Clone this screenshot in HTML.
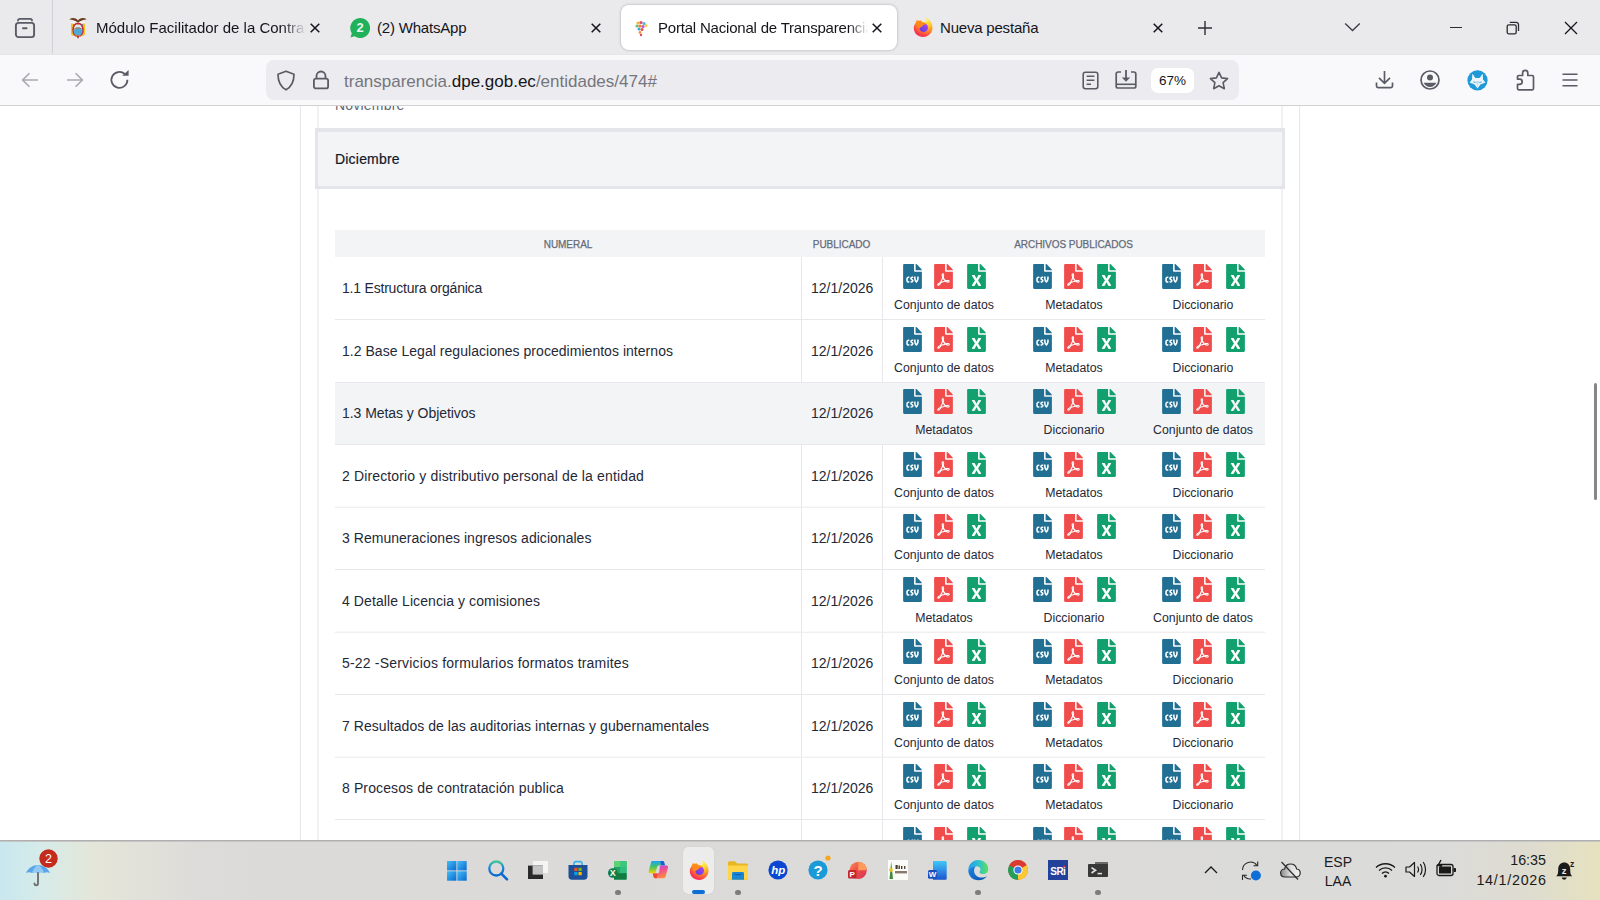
<!DOCTYPE html>
<html><head><meta charset="utf-8">
<style>
*{box-sizing:border-box;margin:0;padding:0}
html,body{width:1600px;height:900px;overflow:hidden;background:#fff;font-family:"Liberation Sans",sans-serif;color:#15141a}
.abs{position:absolute}
#tabbar{position:absolute;left:0;top:0;width:1600px;height:55px;background:#eaeaed}
#toolbar{position:absolute;left:0;top:55px;width:1600px;height:51px;background:#f9f9fb}
#content{position:absolute;left:0;top:106px;width:1600px;height:734px;background:#fff;overflow:hidden}
#taskbar{position:absolute;left:0;top:840px;width:1600px;height:60px;background:#dcdcdc}
.tabtxt{position:absolute;top:19px;font-size:15px;white-space:nowrap;color:#15141a;letter-spacing:-0.2px}
.tx{position:absolute;white-space:nowrap}
svg{position:absolute;overflow:visible}
</style></head><body>
<div id="tabbar"><svg style="left:14px;top:17px" width="22" height="22" viewBox="0 0 22 22"><path d="M4 3.6 C4 2.6 4.8 1.9 5.8 1.9 H16.2 C17.2 1.9 18 2.6 18 3.6" stroke="#5b5b66" stroke-width="1.8" stroke-linecap="round" fill="none"/><rect x="1.9" y="5.9" width="18.2" height="14.2" rx="2.6" stroke="#5b5b66" stroke-width="1.9" fill="none"/><path d="M9 11.3h3.6" stroke="#5b5b66" stroke-width="1.9" stroke-linecap="round"/></svg>
<div class="abs" style="left:52px;top:0;width:1px;height:55px;background:#d2d2d6"></div>
<svg style="left:66px;top:14px" width="24" height="26" viewBox="0 0 24 26">
<path d="M3.2 5.2 C6.2 3.6 9.4 3.4 12 6.4 C14.6 3.4 17.8 3.6 20.8 5.2 C18 5.6 15 6.6 12 8.4 C9 6.6 6 5.6 3.2 5.2Z" fill="#6a3d1e"/>
<ellipse cx="8" cy="8.8" rx="3" ry="1.4" fill="#f6f6f6"/><ellipse cx="16" cy="8.8" rx="3" ry="1.4" fill="#f6f6f6"/>
<path d="M5 9.5 H7.4 V20 C7.4 21 8 21.5 9 21.8 L7 22 C5.8 21.5 5 20.5 5 19.5Z" fill="#f2c21e"/>
<path d="M19 9.5 H16.6 V20 C16.6 21 16 21.5 15 21.8 L17 22 C18.2 21.5 19 20.5 19 19.5Z" fill="#f2c21e"/>
<path d="M7.4 10 L8.2 9.8 V20 L7.4 20.5Z" fill="#2a7a3a"/><path d="M16.6 10 L15.8 9.8 V20 L16.6 20.5Z" fill="#3a3a8a"/>
<ellipse cx="12" cy="15.8" rx="5" ry="6.6" fill="#d8ecf4" stroke="#c0283a" stroke-width="1.5"/>
<path d="M7.6 16.5 C9 15 10.5 14.2 12 14.5 C13.5 14.2 15 15 16.4 16.5 V17 C16.4 20 14.5 21.6 12 21.6 C9.5 21.6 7.6 20 7.6 17Z" fill="#4fa9d6"/>
<path d="M7.6 15.3 C9 14 10.5 13.3 12 13.6 C13.5 13.3 15 14 16.4 15.3 V16 C15 14.8 13.5 14.4 12 14.6 C10.5 14.4 9 14.8 7.6 16Z" fill="#7a4a2a"/>
<ellipse cx="12" cy="10.4" rx="1" ry=".6" fill="#f08a1a"/>
<path d="M10.5 21.5 L12 25 L13.5 21.5Z" fill="#c0283a"/><path d="M9.2 21.2 L10.6 23 L11.4 21.8Z M14.8 21.2 L13.4 23 L12.6 21.8Z" fill="#f2c21e"/>
</svg>
<div class="tabtxt" style="left:96px;width:210px;letter-spacing:0;overflow:hidden;-webkit-mask-image:linear-gradient(90deg,#000 89%,transparent)">Módulo Facilitador de la Contratación</div>
<svg style="left:310px;top:23px" width="10" height="10" viewBox="0 0 10 10"><path d="M.7 .7l8.6 8.6M9.3 .7L.7 9.3" stroke="#15141a" stroke-width="1.5"/></svg>
<svg style="left:349px;top:17px" width="22" height="22" viewBox="0 0 22 22"><path d="M11 1 A10 10 0 1 1 5.5 19.3 L1.5 20.5 L2.8 16.3 A10 10 0 0 1 11 1Z" fill="#21b15a"/><text x="11" y="15.4" text-anchor="middle" font-family="Liberation Sans" font-weight="bold" font-size="13" fill="#e6f7ec">2</text></svg>
<div class="tabtxt" style="left:377px">(2) WhatsApp</div>
<svg style="left:591px;top:23px" width="10" height="10" viewBox="0 0 10 10"><path d="M.7 .7l8.6 8.6M9.3 .7L.7 9.3" stroke="#15141a" stroke-width="1.5"/></svg>
<div class="abs" style="left:621px;top:5px;width:276px;height:45px;background:#fff;border-radius:8px;box-shadow:0 0 3px rgba(0,0,0,.28)"></div>
<svg style="left:633px;top:19px" width="18" height="18" viewBox="0 0 18 18">
<circle cx="5" cy="4" r="1.6" fill="#f2b640"/><circle cx="8" cy="3.5" r="1.6" fill="#e54b6a"/><circle cx="11" cy="4.5" r="1.6" fill="#4fb5e8"/>
<circle cx="4" cy="7" r="1.6" fill="#6cc06a"/><circle cx="7" cy="7" r="1.6" fill="#f07a3a"/><circle cx="10" cy="7.5" r="1.6" fill="#b55bd0"/><circle cx="13" cy="6.5" r="1.5" fill="#f6c84a"/>
<circle cx="6" cy="10" r="1.5" fill="#3aa7d8"/><circle cx="9" cy="10.5" r="1.5" fill="#e84a4a"/><circle cx="7" cy="13.5" r="1.4" fill="#f29a3a"/><circle cx="8" cy="16" r="1.2" fill="#e54b6a"/>
</svg>
<div class="tabtxt" style="left:658px;width:210px;overflow:hidden;-webkit-mask-image:linear-gradient(90deg,#000 91%,transparent)">Portal Nacional de Transparencia</div>
<svg style="left:872px;top:23px" width="10" height="10" viewBox="0 0 10 10"><path d="M.7 .7l8.6 8.6M9.3 .7L.7 9.3" stroke="#15141a" stroke-width="1.5"/></svg>
<svg style="left:912.5px;top:16.8px" width="20" height="20" viewBox="0 0 20 20"><defs><radialGradient id="ffbt" cx="0.72" cy="0.12" r="1.05"><stop offset="0" stop-color="#fff44f"/><stop offset=".3" stop-color="#ffc72e"/><stop offset=".55" stop-color="#ff8a2a"/><stop offset=".78" stop-color="#ff3f45"/><stop offset="1" stop-color="#e0157a"/></radialGradient><linearGradient id="ffpt" x1="0" y1="1" x2="1" y2="0"><stop offset="0" stop-color="#5a3dd8"/><stop offset="1" stop-color="#b245f2"/></linearGradient></defs>
<path d="M3.2 5.5 C1.6 7.2 .8 9.2 .8 11 C.8 16.2 5 20 10.2 20 C15.4 20 19.5 15.8 19.5 10.6 C19.5 6.5 17.2 3.2 13.2 .6 C13.8 2.5 13.6 4 12.8 5.2 C11.5 4.6 10 4.5 8.6 4.8 C7.5 3.8 6.2 3.4 5 3.6 C4.6 4.2 4.5 5 4.6 5.6Z" fill="url(#ffbt)"/>
<circle cx="10.6" cy="10.6" r="4.4" fill="url(#ffpt)"/>
<path d="M2.6 6 L3.8 3 L5.6 4.6 L7.6 3.2 L9.2 5.2 C10.9 5.3 12.5 6.3 13 7.6 C11.8 7.2 10.6 7.5 10 8.6 C9.2 10 7.6 10.2 6.2 11.2 C5.2 9.4 3.6 8.2 2.6 6Z" fill="#ff8a1c"/></svg>
<div class="tabtxt" style="left:940px">Nueva pestaña</div>
<svg style="left:1153px;top:23px" width="10" height="10" viewBox="0 0 10 10"><path d="M.7 .7l8.6 8.6M9.3 .7L.7 9.3" stroke="#15141a" stroke-width="1.5"/></svg>
<svg style="left:1197px;top:20px" width="16" height="16" viewBox="0 0 16 16"><path d="M8 1v14M1 8h14" stroke="#2e2e36" stroke-width="1.4"/></svg>
<svg style="left:1344px;top:22px" width="17" height="10" viewBox="0 0 17 10"><path d="M1.2 1.5l7.3 7 7.3-7" stroke="#3a3a42" stroke-width="1.3" fill="none"/></svg>
<div class="abs" style="left:1450px;top:26.5px;width:12px;height:1.6px;background:#2a2a30"></div>
<svg style="left:1506px;top:21px" width="14" height="14" viewBox="0 0 14 14"><rect x="1.2" y="3.8" width="9" height="9" rx="1.6" stroke="#2a2a30" stroke-width="1.3" fill="none"/><path d="M3.8 1.3h6.4a2.3 2.3 0 0 1 2.3 2.3V10" stroke="#2a2a30" stroke-width="1.3" fill="none"/></svg>
<svg style="left:1564px;top:21px" width="14" height="14" viewBox="0 0 14 14"><path d="M1 1l12 12M13 1L1 13" stroke="#15141a" stroke-width="1.3"/></svg></div>
<div id="toolbar"><svg style="left:21px;top:17.200000000000003px" width="18" height="16" viewBox="0 0 18 16"><path d="M17 8H2M8.5 1.2L1.6 8l6.9 6.8" stroke="#a9a9b1" stroke-width="1.6" fill="none"/></svg>
<svg style="left:66px;top:17.200000000000003px" width="18" height="16" viewBox="0 0 18 16"><path d="M1 8h15M9.5 1.2L16.4 8l-6.9 6.8" stroke="#a9a9b1" stroke-width="1.6" fill="none"/></svg>
<svg style="left:110px;top:15.299999999999997px" width="20" height="19" viewBox="0 0 20 19"><path d="M17.4 9.8A8 8 0 1 1 14.8 4" stroke="#5b5b66" stroke-width="1.8" fill="none"/><path d="M12.2 5.8L18.6 5.8 18.6 0Z" fill="#5b5b66"/></svg>
<div class="abs" style="left:266px;top:5px;width:973px;height:40px;background:#ececf0;border-radius:8px"></div>
<svg style="left:276px;top:14.5px" width="20" height="21" viewBox="0 0 20 21"><path d="M10 1.2 L18 4.2 C18 12 15 17 10 19.8 C5 17 2 12 2 4.2Z" stroke="#5b5b66" stroke-width="1.7" fill="none" stroke-linejoin="round"/></svg>
<svg style="left:312px;top:15px" width="18" height="20" viewBox="0 0 18 20"><path d="M4.5 8.5V6a4.5 4.5 0 0 1 9 0v2.5" stroke="#5b5b66" stroke-width="1.8" fill="none"/><rect x="1.9" y="8.6" width="14.2" height="9.8" rx="2" stroke="#5b5b66" stroke-width="1.8" fill="none"/></svg>
<div class="tx" style="left:344px;top:17px;font-size:17px;line-height:20px;color:#75757c">transparencia.<span style="color:#15141a">dpe.gob.ec</span>/entidades/474#</div>
<svg style="left:1082px;top:15.5px" width="17" height="19" viewBox="0 0 17 19"><rect x="1.2" y="1.2" width="14.6" height="16.6" rx="2.2" stroke="#5b5b66" stroke-width="1.6" fill="none"/><path d="M4.6 5.3h7.8M4.6 9.3h7.8M4.6 13.3h4.4" stroke="#5b5b66" stroke-width="1.6"/></svg>
<svg style="left:1115px;top:15px" width="22" height="19" viewBox="0 0 22 19"><path d="M6 2H3.2C2 2 1.2 2.8 1.2 4v12.5C1.2 17.3 2 18 3 18h16c1 0 1.8-.7 1.8-1.5V4c0-1.2-.8-2-2-2H16" stroke="#5b5b66" stroke-width="1.7" fill="none"/><path d="M11 0v10" stroke="#5b5b66" stroke-width="1.8"/><path d="M6.8 7.5L11 11.8 15.2 7.5Z" fill="#5b5b66"/><path d="M1.5 14.3h19" stroke="#5b5b66" stroke-width="1.6"/></svg>
<div class="abs" style="left:1151px;top:13px;width:43px;height:25px;background:#fff;border-radius:7px"></div>
<div class="tx" style="left:1151px;width:43px;text-align:center;top:18px;font-size:13.5px;line-height:16px;color:#15141a">67%</div>
<svg style="left:1209px;top:15.5px" width="20" height="19" viewBox="0 0 20 19"><path d="M10 1.3l2.6 5.6 6 .7-4.5 4.1 1.2 6-5.3-3-5.3 3 1.2-6L1.4 7.6l6-.7Z" stroke="#5b5b66" stroke-width="1.6" fill="none" stroke-linejoin="round"/></svg>
<svg style="left:1375px;top:15px" width="19" height="19" viewBox="0 0 19 19"><path d="M9.5 1v12M4 7.8l5.5 5.5 5.5-5.5" stroke="#5b5b66" stroke-width="1.7" fill="none"/><path d="M1.5 12.5v3.6c0 .9.7 1.6 1.6 1.6h12.8c.9 0 1.6-.7 1.6-1.6v-3.6" stroke="#5b5b66" stroke-width="1.7" fill="none"/></svg>
<svg style="left:1420px;top:15px" width="20" height="20" viewBox="0 0 20 20"><circle cx="10" cy="10" r="9" stroke="#5b5b66" stroke-width="1.7" fill="none"/><circle cx="10" cy="7.6" r="3" fill="#5b5b66"/><path d="M3.6 12.8h12.8c-1.3 2.6-3.6 4.2-6.4 4.2s-5.1-1.6-6.4-4.2Z" fill="#5b5b66"/></svg>
<svg style="left:1467px;top:14.5px" width="21" height="21" viewBox="0 0 21 21"><circle cx="10.5" cy="10.3" r="10.1" fill="#1f9ad8"/><path d="M5.3 3.8 L8.5 7.5 L12.5 7.5 L15.7 3.8 L16 9.5 L18.4 12.4 L13.4 14.5 L10.5 18.6 L7.6 14.5 L2.6 12.4 L5 9.5Z" fill="#eef6fb"/><circle cx="10.5" cy="4.4" r="3.6" fill="#1f9ad8"/><path d="M7.6 12 L9.6 13 L10.5 17 L11.4 13 L13.4 12 L10.5 11Z" fill="#b9dcf2"/><path d="M6.2 11.8 L8.6 12.6 M14.8 11.8 L12.4 12.6" stroke="#1f9ad8" stroke-width=".8"/></svg>
<svg style="left:1516px;top:14px" width="19" height="22" viewBox="0 0 19 22"><path d="M2.8 6.5 H6.6 V4 A2.6 2.6 0 0 1 11.8 4 V6.5 H16.2 A1.3 1.3 0 0 1 17.5 7.8 V19.5 A1.3 1.3 0 0 1 16.2 20.8 H2.8 A1.3 1.3 0 0 1 1.5 19.5 V15.3 H3.6 A2.6 2.6 0 0 0 3.6 10.1 H1.5 V7.8 A1.3 1.3 0 0 1 2.8 6.5Z" stroke="#5b5b66" stroke-width="1.7" fill="none" stroke-linejoin="round"/></svg>
<svg style="left:1562px;top:17.5px" width="16" height="14" viewBox="0 0 16 14"><path d="M.5 1.2h15M.5 7h15M.5 12.8h15" stroke="#5b5b66" stroke-width="1.6"/></svg></div>
<div id="content"><div class="abs" style="left:300px;top:0;width:1px;height:734px;background:#e5e7eb"></div>
<div class="abs" style="left:1299px;top:0;width:1px;height:734px;background:#e5e7eb"></div>
<div class="abs" style="left:317px;top:0;width:2px;height:734px;background:#f1f2f4"></div>
<div class="abs" style="left:1281px;top:0;width:2px;height:734px;background:#f1f2f4"></div>
<div class="tx" style="left:335px;top:-9px;font-size:14px;color:#5f6673;line-height:16px;letter-spacing:0.2px">Noviembre</div>
<div class="abs" style="left:315px;top:22px;width:970px;height:61px;background:#f3f4f6;border:3px solid #e4e5ea;border-top-width:4px"></div>
<div class="tx" style="left:335px;top:45px;font-size:14px;line-height:16px;color:#111827;-webkit-text-stroke:0.2px #111827;letter-spacing:0.2px">Diciembre</div>
<div class="abs" style="left:335px;top:124px;width:930px;height:27px;background:#f3f4f6"></div>
<div class="tx" style="left:468px;width:200px;text-align:center;top:133px;font-size:10px;line-height:12px;color:#646b78;-webkit-text-stroke:0.25px #646b78;letter-spacing:-0.05px">NUMERAL</div>
<div class="tx" style="left:741.5px;width:200px;text-align:center;top:133px;font-size:10px;line-height:12px;color:#646b78;-webkit-text-stroke:0.25px #646b78;letter-spacing:-0.05px">PUBLICADO</div>
<div class="tx" style="left:973.5px;width:200px;text-align:center;top:133px;font-size:10px;line-height:12px;color:#646b78;-webkit-text-stroke:0.25px #646b78;letter-spacing:-0.05px">ARCHIVOS PUBLICADOS</div>
<div class="abs" style="left:335px;top:213px;width:930px;height:1px;background:#e8e8ec"></div>
<div class="abs" style="left:801px;top:151px;width:1px;height:62px;background:#e8e8ec"></div>
<div class="abs" style="left:882px;top:151px;width:1px;height:62px;background:#e8e8ec"></div>
<div class="tx" style="left:342px;top:174.0px;font-size:14px;line-height:16px;color:#1f2937;letter-spacing:-0.207px">1.1 Estructura orgánica</div>
<div class="tx" style="left:811px;top:174.0px;font-size:14px;line-height:16px;color:#1f2937">12/1/2026</div>
<svg style="left:903px;top:158.0px" width="19" height="25" viewBox="0 0 384 512"><path d="M224 136V0H24C10.7 0 0 10.7 0 24v464c0 13.3 10.7 24 24 24h336c13.3 0 24-10.7 24-24V160H248c-13.2 0-24-10.8-24-24zm-96 144c0 4.42-3.58 8-8 8h-8c-8.84 0-16 7.16-16 16v32c0 8.84 7.16 16 16 16h8c4.42 0 8 3.58 8 8v16c0 4.42-3.58 8-8 8h-8c-26.51 0-48-21.49-48-48v-32c0-26.51 21.49-48 48-48h8c4.42 0 8 3.58 8 8v16zm44.27 104H160c-4.42 0-8-3.58-8-8v-16c0-4.42 3.58-8 8-8h12.27c5.95 0 10.41-3.5 10.41-6.62 0-1.3-.75-2.66-2.12-3.84l-21.89-18.77c-8.47-7.22-13.33-17.48-13.33-28.14 0-21.3 19.02-38.62 42.41-38.62H200c4.42 0 8 3.58 8 8v16c0 4.42-3.58 8-8 8h-12.27c-5.95 0-10.41 3.5-10.41 6.62 0 1.3.75 2.66 2.12 3.84l21.89 18.77c8.47 7.22 13.33 17.48 13.33 28.14.01 21.29-19 38.62-42.39 38.62zM256 264v20.8c0 20.27 5.7 40.17 16 56.88 10.3-16.7 16-36.61 16-56.88V264c0-4.42 3.58-8 8-8h16c4.42 0 8 3.58 8 8v20.8c0 35.48-12.88 68.89-36.28 94.09-3.02 3.25-7.27 5.11-11.72 5.11s-8.7-1.86-11.72-5.11C236.88 353.69 224 320.28 224 284.8V264c0-4.42 3.58-8 8-8h16c4.42 0 8 3.58 8 8zm121-159L279.1 7c-4.5-4.5-10.6-7-17-7H256v128h128v-6.1c0-6.3-2.5-12.4-7-16.9z" fill="#226f94"/></svg>
<svg style="left:934.3px;top:158.0px" width="19" height="25" viewBox="0 0 384 512"><path d="M181.9 256.1c-5-16-4.9-46.9-2-46.9 8.4 0 7.6 36.9 2 46.9zm-1.7 47.2c-7.7 20.2-17.3 43.3-28.4 62.7 18.3-7 39-17.2 62.9-21.9-12.7-9.6-24.9-23.4-34.5-40.8zM86.1 428.1c0 .8 13.2-5.4 34.9-40.2-6.7 6.3-29.1 24.5-34.9 40.2zM248 160h136v328c0 13.3-10.7 24-24 24H24c-13.3 0-24-10.7-24-24V24C0 10.7 10.7 0 24 0h200v136c0 13.2 10.8 24 24 24zm-8 171.8c-20-12.2-33.3-29-42.7-53.8 4.5-18.5 11.6-46.6 6.2-64.2-4.7-29.4-42.4-26.5-47.8-6.8-5 18.3-.4 44.1 8.1 77-11.6 27.6-28.7 64.6-40.8 85.8-.1 0-.1.1-.2.1-27.1 13.9-73.6 44.5-54.5 68 5.6 6.9 16 10 21.5 10 17.9 0 35.7-18 61.1-61.8 25.8-8.5 54.1-19.1 79-23.2 21.7 11.8 47.1 19.5 64 19.5 29.2 0 31.2-32 19.7-43.4-13.9-13.6-54.3-9.7-73.6-7.2zM377 105L279 7c-4.5-4.5-10.6-7-17-7h-6v128h128v-6.1c0-6.3-2.5-12.4-7-16.9zm-74.1 255.3c4.1-2.7-2.5-11.9-42.8-9 37.1 15.8 42.8 9 42.8 9z" fill="#f04c4c"/></svg>
<svg style="left:966.6px;top:158.0px" width="19" height="25" viewBox="0 0 384 512"><path d="M224 136V0H24C10.7 0 0 10.7 0 24v464c0 13.3 10.7 24 24 24h336c13.3 0 24-10.7 24-24V160H248c-13.2 0-24-10.8-24-24zm60.1 106.5L224 336l60.1 93.5c5.1 8-.6 18.5-10.1 18.5h-34.9c-4.4 0-8.5-2.4-10.6-6.3C208.9 405.5 192 373 192 373c-6.4 14.8-10 20-36.6 68.8-2.1 3.9-6.1 6.3-10.5 6.3H110c-9.5 0-15.2-10.5-10.1-18.5l60.3-93.5-60.3-93.5c-5.2-8 .6-18.5 10.1-18.5h34.8c4.4 0 8.5 2.4 10.6 6.3 26.1 48.8 20 33.6 36.6 68.5 0 0 6.1-11.7 36.6-68.5 2.1-3.9 6.2-6.3 10.6-6.3H274c9.5-.1 15.2 10.4 10.1 18.4zM384 121.9v6.1H256V0h6.1c6.4 0 12.5 2.5 17 7l97.9 98c4.5 4.5 7 10.6 7 16.9z" fill="#12a06e"/></svg>
<div class="tx" style="left:884px;width:120px;text-align:center;top:192.0px;font-size:12.3px;line-height:14px;color:#1f2937">Conjunto de datos</div>
<svg style="left:1033px;top:158.0px" width="19" height="25" viewBox="0 0 384 512"><path d="M224 136V0H24C10.7 0 0 10.7 0 24v464c0 13.3 10.7 24 24 24h336c13.3 0 24-10.7 24-24V160H248c-13.2 0-24-10.8-24-24zm-96 144c0 4.42-3.58 8-8 8h-8c-8.84 0-16 7.16-16 16v32c0 8.84 7.16 16 16 16h8c4.42 0 8 3.58 8 8v16c0 4.42-3.58 8-8 8h-8c-26.51 0-48-21.49-48-48v-32c0-26.51 21.49-48 48-48h8c4.42 0 8 3.58 8 8v16zm44.27 104H160c-4.42 0-8-3.58-8-8v-16c0-4.42 3.58-8 8-8h12.27c5.95 0 10.41-3.5 10.41-6.62 0-1.3-.75-2.66-2.12-3.84l-21.89-18.77c-8.47-7.22-13.33-17.48-13.33-28.14 0-21.3 19.02-38.62 42.41-38.62H200c4.42 0 8 3.58 8 8v16c0 4.42-3.58 8-8 8h-12.27c-5.95 0-10.41 3.5-10.41 6.62 0 1.3.75 2.66 2.12 3.84l21.89 18.77c8.47 7.22 13.33 17.48 13.33 28.14.01 21.29-19 38.62-42.39 38.62zM256 264v20.8c0 20.27 5.7 40.17 16 56.88 10.3-16.7 16-36.61 16-56.88V264c0-4.42 3.58-8 8-8h16c4.42 0 8 3.58 8 8v20.8c0 35.48-12.88 68.89-36.28 94.09-3.02 3.25-7.27 5.11-11.72 5.11s-8.7-1.86-11.72-5.11C236.88 353.69 224 320.28 224 284.8V264c0-4.42 3.58-8 8-8h16c4.42 0 8 3.58 8 8zm121-159L279.1 7c-4.5-4.5-10.6-7-17-7H256v128h128v-6.1c0-6.3-2.5-12.4-7-16.9z" fill="#226f94"/></svg>
<svg style="left:1064.3px;top:158.0px" width="19" height="25" viewBox="0 0 384 512"><path d="M181.9 256.1c-5-16-4.9-46.9-2-46.9 8.4 0 7.6 36.9 2 46.9zm-1.7 47.2c-7.7 20.2-17.3 43.3-28.4 62.7 18.3-7 39-17.2 62.9-21.9-12.7-9.6-24.9-23.4-34.5-40.8zM86.1 428.1c0 .8 13.2-5.4 34.9-40.2-6.7 6.3-29.1 24.5-34.9 40.2zM248 160h136v328c0 13.3-10.7 24-24 24H24c-13.3 0-24-10.7-24-24V24C0 10.7 10.7 0 24 0h200v136c0 13.2 10.8 24 24 24zm-8 171.8c-20-12.2-33.3-29-42.7-53.8 4.5-18.5 11.6-46.6 6.2-64.2-4.7-29.4-42.4-26.5-47.8-6.8-5 18.3-.4 44.1 8.1 77-11.6 27.6-28.7 64.6-40.8 85.8-.1 0-.1.1-.2.1-27.1 13.9-73.6 44.5-54.5 68 5.6 6.9 16 10 21.5 10 17.9 0 35.7-18 61.1-61.8 25.8-8.5 54.1-19.1 79-23.2 21.7 11.8 47.1 19.5 64 19.5 29.2 0 31.2-32 19.7-43.4-13.9-13.6-54.3-9.7-73.6-7.2zM377 105L279 7c-4.5-4.5-10.6-7-17-7h-6v128h128v-6.1c0-6.3-2.5-12.4-7-16.9zm-74.1 255.3c4.1-2.7-2.5-11.9-42.8-9 37.1 15.8 42.8 9 42.8 9z" fill="#f04c4c"/></svg>
<svg style="left:1096.6px;top:158.0px" width="19" height="25" viewBox="0 0 384 512"><path d="M224 136V0H24C10.7 0 0 10.7 0 24v464c0 13.3 10.7 24 24 24h336c13.3 0 24-10.7 24-24V160H248c-13.2 0-24-10.8-24-24zm60.1 106.5L224 336l60.1 93.5c5.1 8-.6 18.5-10.1 18.5h-34.9c-4.4 0-8.5-2.4-10.6-6.3C208.9 405.5 192 373 192 373c-6.4 14.8-10 20-36.6 68.8-2.1 3.9-6.1 6.3-10.5 6.3H110c-9.5 0-15.2-10.5-10.1-18.5l60.3-93.5-60.3-93.5c-5.2-8 .6-18.5 10.1-18.5h34.8c4.4 0 8.5 2.4 10.6 6.3 26.1 48.8 20 33.6 36.6 68.5 0 0 6.1-11.7 36.6-68.5 2.1-3.9 6.2-6.3 10.6-6.3H274c9.5-.1 15.2 10.4 10.1 18.4zM384 121.9v6.1H256V0h6.1c6.4 0 12.5 2.5 17 7l97.9 98c4.5 4.5 7 10.6 7 16.9z" fill="#12a06e"/></svg>
<div class="tx" style="left:1014px;width:120px;text-align:center;top:192.0px;font-size:12.3px;line-height:14px;color:#1f2937">Metadatos</div>
<svg style="left:1162px;top:158.0px" width="19" height="25" viewBox="0 0 384 512"><path d="M224 136V0H24C10.7 0 0 10.7 0 24v464c0 13.3 10.7 24 24 24h336c13.3 0 24-10.7 24-24V160H248c-13.2 0-24-10.8-24-24zm-96 144c0 4.42-3.58 8-8 8h-8c-8.84 0-16 7.16-16 16v32c0 8.84 7.16 16 16 16h8c4.42 0 8 3.58 8 8v16c0 4.42-3.58 8-8 8h-8c-26.51 0-48-21.49-48-48v-32c0-26.51 21.49-48 48-48h8c4.42 0 8 3.58 8 8v16zm44.27 104H160c-4.42 0-8-3.58-8-8v-16c0-4.42 3.58-8 8-8h12.27c5.95 0 10.41-3.5 10.41-6.62 0-1.3-.75-2.66-2.12-3.84l-21.89-18.77c-8.47-7.22-13.33-17.48-13.33-28.14 0-21.3 19.02-38.62 42.41-38.62H200c4.42 0 8 3.58 8 8v16c0 4.42-3.58 8-8 8h-12.27c-5.95 0-10.41 3.5-10.41 6.62 0 1.3.75 2.66 2.12 3.84l21.89 18.77c8.47 7.22 13.33 17.48 13.33 28.14.01 21.29-19 38.62-42.39 38.62zM256 264v20.8c0 20.27 5.7 40.17 16 56.88 10.3-16.7 16-36.61 16-56.88V264c0-4.42 3.58-8 8-8h16c4.42 0 8 3.58 8 8v20.8c0 35.48-12.88 68.89-36.28 94.09-3.02 3.25-7.27 5.11-11.72 5.11s-8.7-1.86-11.72-5.11C236.88 353.69 224 320.28 224 284.8V264c0-4.42 3.58-8 8-8h16c4.42 0 8 3.58 8 8zm121-159L279.1 7c-4.5-4.5-10.6-7-17-7H256v128h128v-6.1c0-6.3-2.5-12.4-7-16.9z" fill="#226f94"/></svg>
<svg style="left:1193.3px;top:158.0px" width="19" height="25" viewBox="0 0 384 512"><path d="M181.9 256.1c-5-16-4.9-46.9-2-46.9 8.4 0 7.6 36.9 2 46.9zm-1.7 47.2c-7.7 20.2-17.3 43.3-28.4 62.7 18.3-7 39-17.2 62.9-21.9-12.7-9.6-24.9-23.4-34.5-40.8zM86.1 428.1c0 .8 13.2-5.4 34.9-40.2-6.7 6.3-29.1 24.5-34.9 40.2zM248 160h136v328c0 13.3-10.7 24-24 24H24c-13.3 0-24-10.7-24-24V24C0 10.7 10.7 0 24 0h200v136c0 13.2 10.8 24 24 24zm-8 171.8c-20-12.2-33.3-29-42.7-53.8 4.5-18.5 11.6-46.6 6.2-64.2-4.7-29.4-42.4-26.5-47.8-6.8-5 18.3-.4 44.1 8.1 77-11.6 27.6-28.7 64.6-40.8 85.8-.1 0-.1.1-.2.1-27.1 13.9-73.6 44.5-54.5 68 5.6 6.9 16 10 21.5 10 17.9 0 35.7-18 61.1-61.8 25.8-8.5 54.1-19.1 79-23.2 21.7 11.8 47.1 19.5 64 19.5 29.2 0 31.2-32 19.7-43.4-13.9-13.6-54.3-9.7-73.6-7.2zM377 105L279 7c-4.5-4.5-10.6-7-17-7h-6v128h128v-6.1c0-6.3-2.5-12.4-7-16.9zm-74.1 255.3c4.1-2.7-2.5-11.9-42.8-9 37.1 15.8 42.8 9 42.8 9z" fill="#f04c4c"/></svg>
<svg style="left:1225.6px;top:158.0px" width="19" height="25" viewBox="0 0 384 512"><path d="M224 136V0H24C10.7 0 0 10.7 0 24v464c0 13.3 10.7 24 24 24h336c13.3 0 24-10.7 24-24V160H248c-13.2 0-24-10.8-24-24zm60.1 106.5L224 336l60.1 93.5c5.1 8-.6 18.5-10.1 18.5h-34.9c-4.4 0-8.5-2.4-10.6-6.3C208.9 405.5 192 373 192 373c-6.4 14.8-10 20-36.6 68.8-2.1 3.9-6.1 6.3-10.5 6.3H110c-9.5 0-15.2-10.5-10.1-18.5l60.3-93.5-60.3-93.5c-5.2-8 .6-18.5 10.1-18.5h34.8c4.4 0 8.5 2.4 10.6 6.3 26.1 48.8 20 33.6 36.6 68.5 0 0 6.1-11.7 36.6-68.5 2.1-3.9 6.2-6.3 10.6-6.3H274c9.5-.1 15.2 10.4 10.1 18.4zM384 121.9v6.1H256V0h6.1c6.4 0 12.5 2.5 17 7l97.9 98c4.5 4.5 7 10.6 7 16.9z" fill="#12a06e"/></svg>
<div class="tx" style="left:1143px;width:120px;text-align:center;top:192.0px;font-size:12.3px;line-height:14px;color:#1f2937">Diccionario</div>
<div class="abs" style="left:335px;top:276px;width:930px;height:1px;background:#e8e8ec"></div>
<div class="abs" style="left:801px;top:214px;width:1px;height:62px;background:#e8e8ec"></div>
<div class="abs" style="left:882px;top:214px;width:1px;height:62px;background:#e8e8ec"></div>
<div class="tx" style="left:342px;top:236.5px;font-size:14px;line-height:16px;color:#1f2937;letter-spacing:0.035px">1.2 Base Legal regulaciones procedimientos internos</div>
<div class="tx" style="left:811px;top:236.5px;font-size:14px;line-height:16px;color:#1f2937">12/1/2026</div>
<svg style="left:903px;top:220.5px" width="19" height="25" viewBox="0 0 384 512"><path d="M224 136V0H24C10.7 0 0 10.7 0 24v464c0 13.3 10.7 24 24 24h336c13.3 0 24-10.7 24-24V160H248c-13.2 0-24-10.8-24-24zm-96 144c0 4.42-3.58 8-8 8h-8c-8.84 0-16 7.16-16 16v32c0 8.84 7.16 16 16 16h8c4.42 0 8 3.58 8 8v16c0 4.42-3.58 8-8 8h-8c-26.51 0-48-21.49-48-48v-32c0-26.51 21.49-48 48-48h8c4.42 0 8 3.58 8 8v16zm44.27 104H160c-4.42 0-8-3.58-8-8v-16c0-4.42 3.58-8 8-8h12.27c5.95 0 10.41-3.5 10.41-6.62 0-1.3-.75-2.66-2.12-3.84l-21.89-18.77c-8.47-7.22-13.33-17.48-13.33-28.14 0-21.3 19.02-38.62 42.41-38.62H200c4.42 0 8 3.58 8 8v16c0 4.42-3.58 8-8 8h-12.27c-5.95 0-10.41 3.5-10.41 6.62 0 1.3.75 2.66 2.12 3.84l21.89 18.77c8.47 7.22 13.33 17.48 13.33 28.14.01 21.29-19 38.62-42.39 38.62zM256 264v20.8c0 20.27 5.7 40.17 16 56.88 10.3-16.7 16-36.61 16-56.88V264c0-4.42 3.58-8 8-8h16c4.42 0 8 3.58 8 8v20.8c0 35.48-12.88 68.89-36.28 94.09-3.02 3.25-7.27 5.11-11.72 5.11s-8.7-1.86-11.72-5.11C236.88 353.69 224 320.28 224 284.8V264c0-4.42 3.58-8 8-8h16c4.42 0 8 3.58 8 8zm121-159L279.1 7c-4.5-4.5-10.6-7-17-7H256v128h128v-6.1c0-6.3-2.5-12.4-7-16.9z" fill="#226f94"/></svg>
<svg style="left:934.3px;top:220.5px" width="19" height="25" viewBox="0 0 384 512"><path d="M181.9 256.1c-5-16-4.9-46.9-2-46.9 8.4 0 7.6 36.9 2 46.9zm-1.7 47.2c-7.7 20.2-17.3 43.3-28.4 62.7 18.3-7 39-17.2 62.9-21.9-12.7-9.6-24.9-23.4-34.5-40.8zM86.1 428.1c0 .8 13.2-5.4 34.9-40.2-6.7 6.3-29.1 24.5-34.9 40.2zM248 160h136v328c0 13.3-10.7 24-24 24H24c-13.3 0-24-10.7-24-24V24C0 10.7 10.7 0 24 0h200v136c0 13.2 10.8 24 24 24zm-8 171.8c-20-12.2-33.3-29-42.7-53.8 4.5-18.5 11.6-46.6 6.2-64.2-4.7-29.4-42.4-26.5-47.8-6.8-5 18.3-.4 44.1 8.1 77-11.6 27.6-28.7 64.6-40.8 85.8-.1 0-.1.1-.2.1-27.1 13.9-73.6 44.5-54.5 68 5.6 6.9 16 10 21.5 10 17.9 0 35.7-18 61.1-61.8 25.8-8.5 54.1-19.1 79-23.2 21.7 11.8 47.1 19.5 64 19.5 29.2 0 31.2-32 19.7-43.4-13.9-13.6-54.3-9.7-73.6-7.2zM377 105L279 7c-4.5-4.5-10.6-7-17-7h-6v128h128v-6.1c0-6.3-2.5-12.4-7-16.9zm-74.1 255.3c4.1-2.7-2.5-11.9-42.8-9 37.1 15.8 42.8 9 42.8 9z" fill="#f04c4c"/></svg>
<svg style="left:966.6px;top:220.5px" width="19" height="25" viewBox="0 0 384 512"><path d="M224 136V0H24C10.7 0 0 10.7 0 24v464c0 13.3 10.7 24 24 24h336c13.3 0 24-10.7 24-24V160H248c-13.2 0-24-10.8-24-24zm60.1 106.5L224 336l60.1 93.5c5.1 8-.6 18.5-10.1 18.5h-34.9c-4.4 0-8.5-2.4-10.6-6.3C208.9 405.5 192 373 192 373c-6.4 14.8-10 20-36.6 68.8-2.1 3.9-6.1 6.3-10.5 6.3H110c-9.5 0-15.2-10.5-10.1-18.5l60.3-93.5-60.3-93.5c-5.2-8 .6-18.5 10.1-18.5h34.8c4.4 0 8.5 2.4 10.6 6.3 26.1 48.8 20 33.6 36.6 68.5 0 0 6.1-11.7 36.6-68.5 2.1-3.9 6.2-6.3 10.6-6.3H274c9.5-.1 15.2 10.4 10.1 18.4zM384 121.9v6.1H256V0h6.1c6.4 0 12.5 2.5 17 7l97.9 98c4.5 4.5 7 10.6 7 16.9z" fill="#12a06e"/></svg>
<div class="tx" style="left:884px;width:120px;text-align:center;top:254.5px;font-size:12.3px;line-height:14px;color:#1f2937">Conjunto de datos</div>
<svg style="left:1033px;top:220.5px" width="19" height="25" viewBox="0 0 384 512"><path d="M224 136V0H24C10.7 0 0 10.7 0 24v464c0 13.3 10.7 24 24 24h336c13.3 0 24-10.7 24-24V160H248c-13.2 0-24-10.8-24-24zm-96 144c0 4.42-3.58 8-8 8h-8c-8.84 0-16 7.16-16 16v32c0 8.84 7.16 16 16 16h8c4.42 0 8 3.58 8 8v16c0 4.42-3.58 8-8 8h-8c-26.51 0-48-21.49-48-48v-32c0-26.51 21.49-48 48-48h8c4.42 0 8 3.58 8 8v16zm44.27 104H160c-4.42 0-8-3.58-8-8v-16c0-4.42 3.58-8 8-8h12.27c5.95 0 10.41-3.5 10.41-6.62 0-1.3-.75-2.66-2.12-3.84l-21.89-18.77c-8.47-7.22-13.33-17.48-13.33-28.14 0-21.3 19.02-38.62 42.41-38.62H200c4.42 0 8 3.58 8 8v16c0 4.42-3.58 8-8 8h-12.27c-5.95 0-10.41 3.5-10.41 6.62 0 1.3.75 2.66 2.12 3.84l21.89 18.77c8.47 7.22 13.33 17.48 13.33 28.14.01 21.29-19 38.62-42.39 38.62zM256 264v20.8c0 20.27 5.7 40.17 16 56.88 10.3-16.7 16-36.61 16-56.88V264c0-4.42 3.58-8 8-8h16c4.42 0 8 3.58 8 8v20.8c0 35.48-12.88 68.89-36.28 94.09-3.02 3.25-7.27 5.11-11.72 5.11s-8.7-1.86-11.72-5.11C236.88 353.69 224 320.28 224 284.8V264c0-4.42 3.58-8 8-8h16c4.42 0 8 3.58 8 8zm121-159L279.1 7c-4.5-4.5-10.6-7-17-7H256v128h128v-6.1c0-6.3-2.5-12.4-7-16.9z" fill="#226f94"/></svg>
<svg style="left:1064.3px;top:220.5px" width="19" height="25" viewBox="0 0 384 512"><path d="M181.9 256.1c-5-16-4.9-46.9-2-46.9 8.4 0 7.6 36.9 2 46.9zm-1.7 47.2c-7.7 20.2-17.3 43.3-28.4 62.7 18.3-7 39-17.2 62.9-21.9-12.7-9.6-24.9-23.4-34.5-40.8zM86.1 428.1c0 .8 13.2-5.4 34.9-40.2-6.7 6.3-29.1 24.5-34.9 40.2zM248 160h136v328c0 13.3-10.7 24-24 24H24c-13.3 0-24-10.7-24-24V24C0 10.7 10.7 0 24 0h200v136c0 13.2 10.8 24 24 24zm-8 171.8c-20-12.2-33.3-29-42.7-53.8 4.5-18.5 11.6-46.6 6.2-64.2-4.7-29.4-42.4-26.5-47.8-6.8-5 18.3-.4 44.1 8.1 77-11.6 27.6-28.7 64.6-40.8 85.8-.1 0-.1.1-.2.1-27.1 13.9-73.6 44.5-54.5 68 5.6 6.9 16 10 21.5 10 17.9 0 35.7-18 61.1-61.8 25.8-8.5 54.1-19.1 79-23.2 21.7 11.8 47.1 19.5 64 19.5 29.2 0 31.2-32 19.7-43.4-13.9-13.6-54.3-9.7-73.6-7.2zM377 105L279 7c-4.5-4.5-10.6-7-17-7h-6v128h128v-6.1c0-6.3-2.5-12.4-7-16.9zm-74.1 255.3c4.1-2.7-2.5-11.9-42.8-9 37.1 15.8 42.8 9 42.8 9z" fill="#f04c4c"/></svg>
<svg style="left:1096.6px;top:220.5px" width="19" height="25" viewBox="0 0 384 512"><path d="M224 136V0H24C10.7 0 0 10.7 0 24v464c0 13.3 10.7 24 24 24h336c13.3 0 24-10.7 24-24V160H248c-13.2 0-24-10.8-24-24zm60.1 106.5L224 336l60.1 93.5c5.1 8-.6 18.5-10.1 18.5h-34.9c-4.4 0-8.5-2.4-10.6-6.3C208.9 405.5 192 373 192 373c-6.4 14.8-10 20-36.6 68.8-2.1 3.9-6.1 6.3-10.5 6.3H110c-9.5 0-15.2-10.5-10.1-18.5l60.3-93.5-60.3-93.5c-5.2-8 .6-18.5 10.1-18.5h34.8c4.4 0 8.5 2.4 10.6 6.3 26.1 48.8 20 33.6 36.6 68.5 0 0 6.1-11.7 36.6-68.5 2.1-3.9 6.2-6.3 10.6-6.3H274c9.5-.1 15.2 10.4 10.1 18.4zM384 121.9v6.1H256V0h6.1c6.4 0 12.5 2.5 17 7l97.9 98c4.5 4.5 7 10.6 7 16.9z" fill="#12a06e"/></svg>
<div class="tx" style="left:1014px;width:120px;text-align:center;top:254.5px;font-size:12.3px;line-height:14px;color:#1f2937">Metadatos</div>
<svg style="left:1162px;top:220.5px" width="19" height="25" viewBox="0 0 384 512"><path d="M224 136V0H24C10.7 0 0 10.7 0 24v464c0 13.3 10.7 24 24 24h336c13.3 0 24-10.7 24-24V160H248c-13.2 0-24-10.8-24-24zm-96 144c0 4.42-3.58 8-8 8h-8c-8.84 0-16 7.16-16 16v32c0 8.84 7.16 16 16 16h8c4.42 0 8 3.58 8 8v16c0 4.42-3.58 8-8 8h-8c-26.51 0-48-21.49-48-48v-32c0-26.51 21.49-48 48-48h8c4.42 0 8 3.58 8 8v16zm44.27 104H160c-4.42 0-8-3.58-8-8v-16c0-4.42 3.58-8 8-8h12.27c5.95 0 10.41-3.5 10.41-6.62 0-1.3-.75-2.66-2.12-3.84l-21.89-18.77c-8.47-7.22-13.33-17.48-13.33-28.14 0-21.3 19.02-38.62 42.41-38.62H200c4.42 0 8 3.58 8 8v16c0 4.42-3.58 8-8 8h-12.27c-5.95 0-10.41 3.5-10.41 6.62 0 1.3.75 2.66 2.12 3.84l21.89 18.77c8.47 7.22 13.33 17.48 13.33 28.14.01 21.29-19 38.62-42.39 38.62zM256 264v20.8c0 20.27 5.7 40.17 16 56.88 10.3-16.7 16-36.61 16-56.88V264c0-4.42 3.58-8 8-8h16c4.42 0 8 3.58 8 8v20.8c0 35.48-12.88 68.89-36.28 94.09-3.02 3.25-7.27 5.11-11.72 5.11s-8.7-1.86-11.72-5.11C236.88 353.69 224 320.28 224 284.8V264c0-4.42 3.58-8 8-8h16c4.42 0 8 3.58 8 8zm121-159L279.1 7c-4.5-4.5-10.6-7-17-7H256v128h128v-6.1c0-6.3-2.5-12.4-7-16.9z" fill="#226f94"/></svg>
<svg style="left:1193.3px;top:220.5px" width="19" height="25" viewBox="0 0 384 512"><path d="M181.9 256.1c-5-16-4.9-46.9-2-46.9 8.4 0 7.6 36.9 2 46.9zm-1.7 47.2c-7.7 20.2-17.3 43.3-28.4 62.7 18.3-7 39-17.2 62.9-21.9-12.7-9.6-24.9-23.4-34.5-40.8zM86.1 428.1c0 .8 13.2-5.4 34.9-40.2-6.7 6.3-29.1 24.5-34.9 40.2zM248 160h136v328c0 13.3-10.7 24-24 24H24c-13.3 0-24-10.7-24-24V24C0 10.7 10.7 0 24 0h200v136c0 13.2 10.8 24 24 24zm-8 171.8c-20-12.2-33.3-29-42.7-53.8 4.5-18.5 11.6-46.6 6.2-64.2-4.7-29.4-42.4-26.5-47.8-6.8-5 18.3-.4 44.1 8.1 77-11.6 27.6-28.7 64.6-40.8 85.8-.1 0-.1.1-.2.1-27.1 13.9-73.6 44.5-54.5 68 5.6 6.9 16 10 21.5 10 17.9 0 35.7-18 61.1-61.8 25.8-8.5 54.1-19.1 79-23.2 21.7 11.8 47.1 19.5 64 19.5 29.2 0 31.2-32 19.7-43.4-13.9-13.6-54.3-9.7-73.6-7.2zM377 105L279 7c-4.5-4.5-10.6-7-17-7h-6v128h128v-6.1c0-6.3-2.5-12.4-7-16.9zm-74.1 255.3c4.1-2.7-2.5-11.9-42.8-9 37.1 15.8 42.8 9 42.8 9z" fill="#f04c4c"/></svg>
<svg style="left:1225.6px;top:220.5px" width="19" height="25" viewBox="0 0 384 512"><path d="M224 136V0H24C10.7 0 0 10.7 0 24v464c0 13.3 10.7 24 24 24h336c13.3 0 24-10.7 24-24V160H248c-13.2 0-24-10.8-24-24zm60.1 106.5L224 336l60.1 93.5c5.1 8-.6 18.5-10.1 18.5h-34.9c-4.4 0-8.5-2.4-10.6-6.3C208.9 405.5 192 373 192 373c-6.4 14.8-10 20-36.6 68.8-2.1 3.9-6.1 6.3-10.5 6.3H110c-9.5 0-15.2-10.5-10.1-18.5l60.3-93.5-60.3-93.5c-5.2-8 .6-18.5 10.1-18.5h34.8c4.4 0 8.5 2.4 10.6 6.3 26.1 48.8 20 33.6 36.6 68.5 0 0 6.1-11.7 36.6-68.5 2.1-3.9 6.2-6.3 10.6-6.3H274c9.5-.1 15.2 10.4 10.1 18.4zM384 121.9v6.1H256V0h6.1c6.4 0 12.5 2.5 17 7l97.9 98c4.5 4.5 7 10.6 7 16.9z" fill="#12a06e"/></svg>
<div class="tx" style="left:1143px;width:120px;text-align:center;top:254.5px;font-size:12.3px;line-height:14px;color:#1f2937">Diccionario</div>
<div class="abs" style="left:335px;top:277px;width:930px;height:61px;background:#f3f4f6"></div>
<div class="abs" style="left:335px;top:338px;width:930px;height:1px;background:#e8e8ec"></div>
<div class="tx" style="left:342px;top:299.0px;font-size:14px;line-height:16px;color:#1f2937;letter-spacing:-0.054px">1.3 Metas y Objetivos</div>
<div class="tx" style="left:811px;top:299.0px;font-size:14px;line-height:16px;color:#1f2937">12/1/2026</div>
<svg style="left:903px;top:283.0px" width="19" height="25" viewBox="0 0 384 512"><path d="M224 136V0H24C10.7 0 0 10.7 0 24v464c0 13.3 10.7 24 24 24h336c13.3 0 24-10.7 24-24V160H248c-13.2 0-24-10.8-24-24zm-96 144c0 4.42-3.58 8-8 8h-8c-8.84 0-16 7.16-16 16v32c0 8.84 7.16 16 16 16h8c4.42 0 8 3.58 8 8v16c0 4.42-3.58 8-8 8h-8c-26.51 0-48-21.49-48-48v-32c0-26.51 21.49-48 48-48h8c4.42 0 8 3.58 8 8v16zm44.27 104H160c-4.42 0-8-3.58-8-8v-16c0-4.42 3.58-8 8-8h12.27c5.95 0 10.41-3.5 10.41-6.62 0-1.3-.75-2.66-2.12-3.84l-21.89-18.77c-8.47-7.22-13.33-17.48-13.33-28.14 0-21.3 19.02-38.62 42.41-38.62H200c4.42 0 8 3.58 8 8v16c0 4.42-3.58 8-8 8h-12.27c-5.95 0-10.41 3.5-10.41 6.62 0 1.3.75 2.66 2.12 3.84l21.89 18.77c8.47 7.22 13.33 17.48 13.33 28.14.01 21.29-19 38.62-42.39 38.62zM256 264v20.8c0 20.27 5.7 40.17 16 56.88 10.3-16.7 16-36.61 16-56.88V264c0-4.42 3.58-8 8-8h16c4.42 0 8 3.58 8 8v20.8c0 35.48-12.88 68.89-36.28 94.09-3.02 3.25-7.27 5.11-11.72 5.11s-8.7-1.86-11.72-5.11C236.88 353.69 224 320.28 224 284.8V264c0-4.42 3.58-8 8-8h16c4.42 0 8 3.58 8 8zm121-159L279.1 7c-4.5-4.5-10.6-7-17-7H256v128h128v-6.1c0-6.3-2.5-12.4-7-16.9z" fill="#226f94"/></svg>
<svg style="left:934.3px;top:283.0px" width="19" height="25" viewBox="0 0 384 512"><path d="M181.9 256.1c-5-16-4.9-46.9-2-46.9 8.4 0 7.6 36.9 2 46.9zm-1.7 47.2c-7.7 20.2-17.3 43.3-28.4 62.7 18.3-7 39-17.2 62.9-21.9-12.7-9.6-24.9-23.4-34.5-40.8zM86.1 428.1c0 .8 13.2-5.4 34.9-40.2-6.7 6.3-29.1 24.5-34.9 40.2zM248 160h136v328c0 13.3-10.7 24-24 24H24c-13.3 0-24-10.7-24-24V24C0 10.7 10.7 0 24 0h200v136c0 13.2 10.8 24 24 24zm-8 171.8c-20-12.2-33.3-29-42.7-53.8 4.5-18.5 11.6-46.6 6.2-64.2-4.7-29.4-42.4-26.5-47.8-6.8-5 18.3-.4 44.1 8.1 77-11.6 27.6-28.7 64.6-40.8 85.8-.1 0-.1.1-.2.1-27.1 13.9-73.6 44.5-54.5 68 5.6 6.9 16 10 21.5 10 17.9 0 35.7-18 61.1-61.8 25.8-8.5 54.1-19.1 79-23.2 21.7 11.8 47.1 19.5 64 19.5 29.2 0 31.2-32 19.7-43.4-13.9-13.6-54.3-9.7-73.6-7.2zM377 105L279 7c-4.5-4.5-10.6-7-17-7h-6v128h128v-6.1c0-6.3-2.5-12.4-7-16.9zm-74.1 255.3c4.1-2.7-2.5-11.9-42.8-9 37.1 15.8 42.8 9 42.8 9z" fill="#f04c4c"/></svg>
<svg style="left:966.6px;top:283.0px" width="19" height="25" viewBox="0 0 384 512"><path d="M224 136V0H24C10.7 0 0 10.7 0 24v464c0 13.3 10.7 24 24 24h336c13.3 0 24-10.7 24-24V160H248c-13.2 0-24-10.8-24-24zm60.1 106.5L224 336l60.1 93.5c5.1 8-.6 18.5-10.1 18.5h-34.9c-4.4 0-8.5-2.4-10.6-6.3C208.9 405.5 192 373 192 373c-6.4 14.8-10 20-36.6 68.8-2.1 3.9-6.1 6.3-10.5 6.3H110c-9.5 0-15.2-10.5-10.1-18.5l60.3-93.5-60.3-93.5c-5.2-8 .6-18.5 10.1-18.5h34.8c4.4 0 8.5 2.4 10.6 6.3 26.1 48.8 20 33.6 36.6 68.5 0 0 6.1-11.7 36.6-68.5 2.1-3.9 6.2-6.3 10.6-6.3H274c9.5-.1 15.2 10.4 10.1 18.4zM384 121.9v6.1H256V0h6.1c6.4 0 12.5 2.5 17 7l97.9 98c4.5 4.5 7 10.6 7 16.9z" fill="#12a06e"/></svg>
<div class="tx" style="left:884px;width:120px;text-align:center;top:317.0px;font-size:12.3px;line-height:14px;color:#1f2937">Metadatos</div>
<svg style="left:1033px;top:283.0px" width="19" height="25" viewBox="0 0 384 512"><path d="M224 136V0H24C10.7 0 0 10.7 0 24v464c0 13.3 10.7 24 24 24h336c13.3 0 24-10.7 24-24V160H248c-13.2 0-24-10.8-24-24zm-96 144c0 4.42-3.58 8-8 8h-8c-8.84 0-16 7.16-16 16v32c0 8.84 7.16 16 16 16h8c4.42 0 8 3.58 8 8v16c0 4.42-3.58 8-8 8h-8c-26.51 0-48-21.49-48-48v-32c0-26.51 21.49-48 48-48h8c4.42 0 8 3.58 8 8v16zm44.27 104H160c-4.42 0-8-3.58-8-8v-16c0-4.42 3.58-8 8-8h12.27c5.95 0 10.41-3.5 10.41-6.62 0-1.3-.75-2.66-2.12-3.84l-21.89-18.77c-8.47-7.22-13.33-17.48-13.33-28.14 0-21.3 19.02-38.62 42.41-38.62H200c4.42 0 8 3.58 8 8v16c0 4.42-3.58 8-8 8h-12.27c-5.95 0-10.41 3.5-10.41 6.62 0 1.3.75 2.66 2.12 3.84l21.89 18.77c8.47 7.22 13.33 17.48 13.33 28.14.01 21.29-19 38.62-42.39 38.62zM256 264v20.8c0 20.27 5.7 40.17 16 56.88 10.3-16.7 16-36.61 16-56.88V264c0-4.42 3.58-8 8-8h16c4.42 0 8 3.58 8 8v20.8c0 35.48-12.88 68.89-36.28 94.09-3.02 3.25-7.27 5.11-11.72 5.11s-8.7-1.86-11.72-5.11C236.88 353.69 224 320.28 224 284.8V264c0-4.42 3.58-8 8-8h16c4.42 0 8 3.58 8 8zm121-159L279.1 7c-4.5-4.5-10.6-7-17-7H256v128h128v-6.1c0-6.3-2.5-12.4-7-16.9z" fill="#226f94"/></svg>
<svg style="left:1064.3px;top:283.0px" width="19" height="25" viewBox="0 0 384 512"><path d="M181.9 256.1c-5-16-4.9-46.9-2-46.9 8.4 0 7.6 36.9 2 46.9zm-1.7 47.2c-7.7 20.2-17.3 43.3-28.4 62.7 18.3-7 39-17.2 62.9-21.9-12.7-9.6-24.9-23.4-34.5-40.8zM86.1 428.1c0 .8 13.2-5.4 34.9-40.2-6.7 6.3-29.1 24.5-34.9 40.2zM248 160h136v328c0 13.3-10.7 24-24 24H24c-13.3 0-24-10.7-24-24V24C0 10.7 10.7 0 24 0h200v136c0 13.2 10.8 24 24 24zm-8 171.8c-20-12.2-33.3-29-42.7-53.8 4.5-18.5 11.6-46.6 6.2-64.2-4.7-29.4-42.4-26.5-47.8-6.8-5 18.3-.4 44.1 8.1 77-11.6 27.6-28.7 64.6-40.8 85.8-.1 0-.1.1-.2.1-27.1 13.9-73.6 44.5-54.5 68 5.6 6.9 16 10 21.5 10 17.9 0 35.7-18 61.1-61.8 25.8-8.5 54.1-19.1 79-23.2 21.7 11.8 47.1 19.5 64 19.5 29.2 0 31.2-32 19.7-43.4-13.9-13.6-54.3-9.7-73.6-7.2zM377 105L279 7c-4.5-4.5-10.6-7-17-7h-6v128h128v-6.1c0-6.3-2.5-12.4-7-16.9zm-74.1 255.3c4.1-2.7-2.5-11.9-42.8-9 37.1 15.8 42.8 9 42.8 9z" fill="#f04c4c"/></svg>
<svg style="left:1096.6px;top:283.0px" width="19" height="25" viewBox="0 0 384 512"><path d="M224 136V0H24C10.7 0 0 10.7 0 24v464c0 13.3 10.7 24 24 24h336c13.3 0 24-10.7 24-24V160H248c-13.2 0-24-10.8-24-24zm60.1 106.5L224 336l60.1 93.5c5.1 8-.6 18.5-10.1 18.5h-34.9c-4.4 0-8.5-2.4-10.6-6.3C208.9 405.5 192 373 192 373c-6.4 14.8-10 20-36.6 68.8-2.1 3.9-6.1 6.3-10.5 6.3H110c-9.5 0-15.2-10.5-10.1-18.5l60.3-93.5-60.3-93.5c-5.2-8 .6-18.5 10.1-18.5h34.8c4.4 0 8.5 2.4 10.6 6.3 26.1 48.8 20 33.6 36.6 68.5 0 0 6.1-11.7 36.6-68.5 2.1-3.9 6.2-6.3 10.6-6.3H274c9.5-.1 15.2 10.4 10.1 18.4zM384 121.9v6.1H256V0h6.1c6.4 0 12.5 2.5 17 7l97.9 98c4.5 4.5 7 10.6 7 16.9z" fill="#12a06e"/></svg>
<div class="tx" style="left:1014px;width:120px;text-align:center;top:317.0px;font-size:12.3px;line-height:14px;color:#1f2937">Diccionario</div>
<svg style="left:1162px;top:283.0px" width="19" height="25" viewBox="0 0 384 512"><path d="M224 136V0H24C10.7 0 0 10.7 0 24v464c0 13.3 10.7 24 24 24h336c13.3 0 24-10.7 24-24V160H248c-13.2 0-24-10.8-24-24zm-96 144c0 4.42-3.58 8-8 8h-8c-8.84 0-16 7.16-16 16v32c0 8.84 7.16 16 16 16h8c4.42 0 8 3.58 8 8v16c0 4.42-3.58 8-8 8h-8c-26.51 0-48-21.49-48-48v-32c0-26.51 21.49-48 48-48h8c4.42 0 8 3.58 8 8v16zm44.27 104H160c-4.42 0-8-3.58-8-8v-16c0-4.42 3.58-8 8-8h12.27c5.95 0 10.41-3.5 10.41-6.62 0-1.3-.75-2.66-2.12-3.84l-21.89-18.77c-8.47-7.22-13.33-17.48-13.33-28.14 0-21.3 19.02-38.62 42.41-38.62H200c4.42 0 8 3.58 8 8v16c0 4.42-3.58 8-8 8h-12.27c-5.95 0-10.41 3.5-10.41 6.62 0 1.3.75 2.66 2.12 3.84l21.89 18.77c8.47 7.22 13.33 17.48 13.33 28.14.01 21.29-19 38.62-42.39 38.62zM256 264v20.8c0 20.27 5.7 40.17 16 56.88 10.3-16.7 16-36.61 16-56.88V264c0-4.42 3.58-8 8-8h16c4.42 0 8 3.58 8 8v20.8c0 35.48-12.88 68.89-36.28 94.09-3.02 3.25-7.27 5.11-11.72 5.11s-8.7-1.86-11.72-5.11C236.88 353.69 224 320.28 224 284.8V264c0-4.42 3.58-8 8-8h16c4.42 0 8 3.58 8 8zm121-159L279.1 7c-4.5-4.5-10.6-7-17-7H256v128h128v-6.1c0-6.3-2.5-12.4-7-16.9z" fill="#226f94"/></svg>
<svg style="left:1193.3px;top:283.0px" width="19" height="25" viewBox="0 0 384 512"><path d="M181.9 256.1c-5-16-4.9-46.9-2-46.9 8.4 0 7.6 36.9 2 46.9zm-1.7 47.2c-7.7 20.2-17.3 43.3-28.4 62.7 18.3-7 39-17.2 62.9-21.9-12.7-9.6-24.9-23.4-34.5-40.8zM86.1 428.1c0 .8 13.2-5.4 34.9-40.2-6.7 6.3-29.1 24.5-34.9 40.2zM248 160h136v328c0 13.3-10.7 24-24 24H24c-13.3 0-24-10.7-24-24V24C0 10.7 10.7 0 24 0h200v136c0 13.2 10.8 24 24 24zm-8 171.8c-20-12.2-33.3-29-42.7-53.8 4.5-18.5 11.6-46.6 6.2-64.2-4.7-29.4-42.4-26.5-47.8-6.8-5 18.3-.4 44.1 8.1 77-11.6 27.6-28.7 64.6-40.8 85.8-.1 0-.1.1-.2.1-27.1 13.9-73.6 44.5-54.5 68 5.6 6.9 16 10 21.5 10 17.9 0 35.7-18 61.1-61.8 25.8-8.5 54.1-19.1 79-23.2 21.7 11.8 47.1 19.5 64 19.5 29.2 0 31.2-32 19.7-43.4-13.9-13.6-54.3-9.7-73.6-7.2zM377 105L279 7c-4.5-4.5-10.6-7-17-7h-6v128h128v-6.1c0-6.3-2.5-12.4-7-16.9zm-74.1 255.3c4.1-2.7-2.5-11.9-42.8-9 37.1 15.8 42.8 9 42.8 9z" fill="#f04c4c"/></svg>
<svg style="left:1225.6px;top:283.0px" width="19" height="25" viewBox="0 0 384 512"><path d="M224 136V0H24C10.7 0 0 10.7 0 24v464c0 13.3 10.7 24 24 24h336c13.3 0 24-10.7 24-24V160H248c-13.2 0-24-10.8-24-24zm60.1 106.5L224 336l60.1 93.5c5.1 8-.6 18.5-10.1 18.5h-34.9c-4.4 0-8.5-2.4-10.6-6.3C208.9 405.5 192 373 192 373c-6.4 14.8-10 20-36.6 68.8-2.1 3.9-6.1 6.3-10.5 6.3H110c-9.5 0-15.2-10.5-10.1-18.5l60.3-93.5-60.3-93.5c-5.2-8 .6-18.5 10.1-18.5h34.8c4.4 0 8.5 2.4 10.6 6.3 26.1 48.8 20 33.6 36.6 68.5 0 0 6.1-11.7 36.6-68.5 2.1-3.9 6.2-6.3 10.6-6.3H274c9.5-.1 15.2 10.4 10.1 18.4zM384 121.9v6.1H256V0h6.1c6.4 0 12.5 2.5 17 7l97.9 98c4.5 4.5 7 10.6 7 16.9z" fill="#12a06e"/></svg>
<div class="tx" style="left:1143px;width:120px;text-align:center;top:317.0px;font-size:12.3px;line-height:14px;color:#1f2937">Conjunto de datos</div>
<div class="abs" style="left:335px;top:400px;width:930px;height:1px;background:#f9f9fa"></div>
<div class="abs" style="left:335px;top:401px;width:930px;height:1px;background:#efeff1"></div>
<div class="abs" style="left:801px;top:339px;width:1px;height:62px;background:#e8e8ec"></div>
<div class="abs" style="left:882px;top:339px;width:1px;height:62px;background:#e8e8ec"></div>
<div class="tx" style="left:342px;top:361.5px;font-size:14px;line-height:16px;color:#1f2937;letter-spacing:0.141px">2 Directorio y distributivo personal de la entidad</div>
<div class="tx" style="left:811px;top:361.5px;font-size:14px;line-height:16px;color:#1f2937">12/1/2026</div>
<svg style="left:903px;top:345.5px" width="19" height="25" viewBox="0 0 384 512"><path d="M224 136V0H24C10.7 0 0 10.7 0 24v464c0 13.3 10.7 24 24 24h336c13.3 0 24-10.7 24-24V160H248c-13.2 0-24-10.8-24-24zm-96 144c0 4.42-3.58 8-8 8h-8c-8.84 0-16 7.16-16 16v32c0 8.84 7.16 16 16 16h8c4.42 0 8 3.58 8 8v16c0 4.42-3.58 8-8 8h-8c-26.51 0-48-21.49-48-48v-32c0-26.51 21.49-48 48-48h8c4.42 0 8 3.58 8 8v16zm44.27 104H160c-4.42 0-8-3.58-8-8v-16c0-4.42 3.58-8 8-8h12.27c5.95 0 10.41-3.5 10.41-6.62 0-1.3-.75-2.66-2.12-3.84l-21.89-18.77c-8.47-7.22-13.33-17.48-13.33-28.14 0-21.3 19.02-38.62 42.41-38.62H200c4.42 0 8 3.58 8 8v16c0 4.42-3.58 8-8 8h-12.27c-5.95 0-10.41 3.5-10.41 6.62 0 1.3.75 2.66 2.12 3.84l21.89 18.77c8.47 7.22 13.33 17.48 13.33 28.14.01 21.29-19 38.62-42.39 38.62zM256 264v20.8c0 20.27 5.7 40.17 16 56.88 10.3-16.7 16-36.61 16-56.88V264c0-4.42 3.58-8 8-8h16c4.42 0 8 3.58 8 8v20.8c0 35.48-12.88 68.89-36.28 94.09-3.02 3.25-7.27 5.11-11.72 5.11s-8.7-1.86-11.72-5.11C236.88 353.69 224 320.28 224 284.8V264c0-4.42 3.58-8 8-8h16c4.42 0 8 3.58 8 8zm121-159L279.1 7c-4.5-4.5-10.6-7-17-7H256v128h128v-6.1c0-6.3-2.5-12.4-7-16.9z" fill="#226f94"/></svg>
<svg style="left:934.3px;top:345.5px" width="19" height="25" viewBox="0 0 384 512"><path d="M181.9 256.1c-5-16-4.9-46.9-2-46.9 8.4 0 7.6 36.9 2 46.9zm-1.7 47.2c-7.7 20.2-17.3 43.3-28.4 62.7 18.3-7 39-17.2 62.9-21.9-12.7-9.6-24.9-23.4-34.5-40.8zM86.1 428.1c0 .8 13.2-5.4 34.9-40.2-6.7 6.3-29.1 24.5-34.9 40.2zM248 160h136v328c0 13.3-10.7 24-24 24H24c-13.3 0-24-10.7-24-24V24C0 10.7 10.7 0 24 0h200v136c0 13.2 10.8 24 24 24zm-8 171.8c-20-12.2-33.3-29-42.7-53.8 4.5-18.5 11.6-46.6 6.2-64.2-4.7-29.4-42.4-26.5-47.8-6.8-5 18.3-.4 44.1 8.1 77-11.6 27.6-28.7 64.6-40.8 85.8-.1 0-.1.1-.2.1-27.1 13.9-73.6 44.5-54.5 68 5.6 6.9 16 10 21.5 10 17.9 0 35.7-18 61.1-61.8 25.8-8.5 54.1-19.1 79-23.2 21.7 11.8 47.1 19.5 64 19.5 29.2 0 31.2-32 19.7-43.4-13.9-13.6-54.3-9.7-73.6-7.2zM377 105L279 7c-4.5-4.5-10.6-7-17-7h-6v128h128v-6.1c0-6.3-2.5-12.4-7-16.9zm-74.1 255.3c4.1-2.7-2.5-11.9-42.8-9 37.1 15.8 42.8 9 42.8 9z" fill="#f04c4c"/></svg>
<svg style="left:966.6px;top:345.5px" width="19" height="25" viewBox="0 0 384 512"><path d="M224 136V0H24C10.7 0 0 10.7 0 24v464c0 13.3 10.7 24 24 24h336c13.3 0 24-10.7 24-24V160H248c-13.2 0-24-10.8-24-24zm60.1 106.5L224 336l60.1 93.5c5.1 8-.6 18.5-10.1 18.5h-34.9c-4.4 0-8.5-2.4-10.6-6.3C208.9 405.5 192 373 192 373c-6.4 14.8-10 20-36.6 68.8-2.1 3.9-6.1 6.3-10.5 6.3H110c-9.5 0-15.2-10.5-10.1-18.5l60.3-93.5-60.3-93.5c-5.2-8 .6-18.5 10.1-18.5h34.8c4.4 0 8.5 2.4 10.6 6.3 26.1 48.8 20 33.6 36.6 68.5 0 0 6.1-11.7 36.6-68.5 2.1-3.9 6.2-6.3 10.6-6.3H274c9.5-.1 15.2 10.4 10.1 18.4zM384 121.9v6.1H256V0h6.1c6.4 0 12.5 2.5 17 7l97.9 98c4.5 4.5 7 10.6 7 16.9z" fill="#12a06e"/></svg>
<div class="tx" style="left:884px;width:120px;text-align:center;top:379.5px;font-size:12.3px;line-height:14px;color:#1f2937">Conjunto de datos</div>
<svg style="left:1033px;top:345.5px" width="19" height="25" viewBox="0 0 384 512"><path d="M224 136V0H24C10.7 0 0 10.7 0 24v464c0 13.3 10.7 24 24 24h336c13.3 0 24-10.7 24-24V160H248c-13.2 0-24-10.8-24-24zm-96 144c0 4.42-3.58 8-8 8h-8c-8.84 0-16 7.16-16 16v32c0 8.84 7.16 16 16 16h8c4.42 0 8 3.58 8 8v16c0 4.42-3.58 8-8 8h-8c-26.51 0-48-21.49-48-48v-32c0-26.51 21.49-48 48-48h8c4.42 0 8 3.58 8 8v16zm44.27 104H160c-4.42 0-8-3.58-8-8v-16c0-4.42 3.58-8 8-8h12.27c5.95 0 10.41-3.5 10.41-6.62 0-1.3-.75-2.66-2.12-3.84l-21.89-18.77c-8.47-7.22-13.33-17.48-13.33-28.14 0-21.3 19.02-38.62 42.41-38.62H200c4.42 0 8 3.58 8 8v16c0 4.42-3.58 8-8 8h-12.27c-5.95 0-10.41 3.5-10.41 6.62 0 1.3.75 2.66 2.12 3.84l21.89 18.77c8.47 7.22 13.33 17.48 13.33 28.14.01 21.29-19 38.62-42.39 38.62zM256 264v20.8c0 20.27 5.7 40.17 16 56.88 10.3-16.7 16-36.61 16-56.88V264c0-4.42 3.58-8 8-8h16c4.42 0 8 3.58 8 8v20.8c0 35.48-12.88 68.89-36.28 94.09-3.02 3.25-7.27 5.11-11.72 5.11s-8.7-1.86-11.72-5.11C236.88 353.69 224 320.28 224 284.8V264c0-4.42 3.58-8 8-8h16c4.42 0 8 3.58 8 8zm121-159L279.1 7c-4.5-4.5-10.6-7-17-7H256v128h128v-6.1c0-6.3-2.5-12.4-7-16.9z" fill="#226f94"/></svg>
<svg style="left:1064.3px;top:345.5px" width="19" height="25" viewBox="0 0 384 512"><path d="M181.9 256.1c-5-16-4.9-46.9-2-46.9 8.4 0 7.6 36.9 2 46.9zm-1.7 47.2c-7.7 20.2-17.3 43.3-28.4 62.7 18.3-7 39-17.2 62.9-21.9-12.7-9.6-24.9-23.4-34.5-40.8zM86.1 428.1c0 .8 13.2-5.4 34.9-40.2-6.7 6.3-29.1 24.5-34.9 40.2zM248 160h136v328c0 13.3-10.7 24-24 24H24c-13.3 0-24-10.7-24-24V24C0 10.7 10.7 0 24 0h200v136c0 13.2 10.8 24 24 24zm-8 171.8c-20-12.2-33.3-29-42.7-53.8 4.5-18.5 11.6-46.6 6.2-64.2-4.7-29.4-42.4-26.5-47.8-6.8-5 18.3-.4 44.1 8.1 77-11.6 27.6-28.7 64.6-40.8 85.8-.1 0-.1.1-.2.1-27.1 13.9-73.6 44.5-54.5 68 5.6 6.9 16 10 21.5 10 17.9 0 35.7-18 61.1-61.8 25.8-8.5 54.1-19.1 79-23.2 21.7 11.8 47.1 19.5 64 19.5 29.2 0 31.2-32 19.7-43.4-13.9-13.6-54.3-9.7-73.6-7.2zM377 105L279 7c-4.5-4.5-10.6-7-17-7h-6v128h128v-6.1c0-6.3-2.5-12.4-7-16.9zm-74.1 255.3c4.1-2.7-2.5-11.9-42.8-9 37.1 15.8 42.8 9 42.8 9z" fill="#f04c4c"/></svg>
<svg style="left:1096.6px;top:345.5px" width="19" height="25" viewBox="0 0 384 512"><path d="M224 136V0H24C10.7 0 0 10.7 0 24v464c0 13.3 10.7 24 24 24h336c13.3 0 24-10.7 24-24V160H248c-13.2 0-24-10.8-24-24zm60.1 106.5L224 336l60.1 93.5c5.1 8-.6 18.5-10.1 18.5h-34.9c-4.4 0-8.5-2.4-10.6-6.3C208.9 405.5 192 373 192 373c-6.4 14.8-10 20-36.6 68.8-2.1 3.9-6.1 6.3-10.5 6.3H110c-9.5 0-15.2-10.5-10.1-18.5l60.3-93.5-60.3-93.5c-5.2-8 .6-18.5 10.1-18.5h34.8c4.4 0 8.5 2.4 10.6 6.3 26.1 48.8 20 33.6 36.6 68.5 0 0 6.1-11.7 36.6-68.5 2.1-3.9 6.2-6.3 10.6-6.3H274c9.5-.1 15.2 10.4 10.1 18.4zM384 121.9v6.1H256V0h6.1c6.4 0 12.5 2.5 17 7l97.9 98c4.5 4.5 7 10.6 7 16.9z" fill="#12a06e"/></svg>
<div class="tx" style="left:1014px;width:120px;text-align:center;top:379.5px;font-size:12.3px;line-height:14px;color:#1f2937">Metadatos</div>
<svg style="left:1162px;top:345.5px" width="19" height="25" viewBox="0 0 384 512"><path d="M224 136V0H24C10.7 0 0 10.7 0 24v464c0 13.3 10.7 24 24 24h336c13.3 0 24-10.7 24-24V160H248c-13.2 0-24-10.8-24-24zm-96 144c0 4.42-3.58 8-8 8h-8c-8.84 0-16 7.16-16 16v32c0 8.84 7.16 16 16 16h8c4.42 0 8 3.58 8 8v16c0 4.42-3.58 8-8 8h-8c-26.51 0-48-21.49-48-48v-32c0-26.51 21.49-48 48-48h8c4.42 0 8 3.58 8 8v16zm44.27 104H160c-4.42 0-8-3.58-8-8v-16c0-4.42 3.58-8 8-8h12.27c5.95 0 10.41-3.5 10.41-6.62 0-1.3-.75-2.66-2.12-3.84l-21.89-18.77c-8.47-7.22-13.33-17.48-13.33-28.14 0-21.3 19.02-38.62 42.41-38.62H200c4.42 0 8 3.58 8 8v16c0 4.42-3.58 8-8 8h-12.27c-5.95 0-10.41 3.5-10.41 6.62 0 1.3.75 2.66 2.12 3.84l21.89 18.77c8.47 7.22 13.33 17.48 13.33 28.14.01 21.29-19 38.62-42.39 38.62zM256 264v20.8c0 20.27 5.7 40.17 16 56.88 10.3-16.7 16-36.61 16-56.88V264c0-4.42 3.58-8 8-8h16c4.42 0 8 3.58 8 8v20.8c0 35.48-12.88 68.89-36.28 94.09-3.02 3.25-7.27 5.11-11.72 5.11s-8.7-1.86-11.72-5.11C236.88 353.69 224 320.28 224 284.8V264c0-4.42 3.58-8 8-8h16c4.42 0 8 3.58 8 8zm121-159L279.1 7c-4.5-4.5-10.6-7-17-7H256v128h128v-6.1c0-6.3-2.5-12.4-7-16.9z" fill="#226f94"/></svg>
<svg style="left:1193.3px;top:345.5px" width="19" height="25" viewBox="0 0 384 512"><path d="M181.9 256.1c-5-16-4.9-46.9-2-46.9 8.4 0 7.6 36.9 2 46.9zm-1.7 47.2c-7.7 20.2-17.3 43.3-28.4 62.7 18.3-7 39-17.2 62.9-21.9-12.7-9.6-24.9-23.4-34.5-40.8zM86.1 428.1c0 .8 13.2-5.4 34.9-40.2-6.7 6.3-29.1 24.5-34.9 40.2zM248 160h136v328c0 13.3-10.7 24-24 24H24c-13.3 0-24-10.7-24-24V24C0 10.7 10.7 0 24 0h200v136c0 13.2 10.8 24 24 24zm-8 171.8c-20-12.2-33.3-29-42.7-53.8 4.5-18.5 11.6-46.6 6.2-64.2-4.7-29.4-42.4-26.5-47.8-6.8-5 18.3-.4 44.1 8.1 77-11.6 27.6-28.7 64.6-40.8 85.8-.1 0-.1.1-.2.1-27.1 13.9-73.6 44.5-54.5 68 5.6 6.9 16 10 21.5 10 17.9 0 35.7-18 61.1-61.8 25.8-8.5 54.1-19.1 79-23.2 21.7 11.8 47.1 19.5 64 19.5 29.2 0 31.2-32 19.7-43.4-13.9-13.6-54.3-9.7-73.6-7.2zM377 105L279 7c-4.5-4.5-10.6-7-17-7h-6v128h128v-6.1c0-6.3-2.5-12.4-7-16.9zm-74.1 255.3c4.1-2.7-2.5-11.9-42.8-9 37.1 15.8 42.8 9 42.8 9z" fill="#f04c4c"/></svg>
<svg style="left:1225.6px;top:345.5px" width="19" height="25" viewBox="0 0 384 512"><path d="M224 136V0H24C10.7 0 0 10.7 0 24v464c0 13.3 10.7 24 24 24h336c13.3 0 24-10.7 24-24V160H248c-13.2 0-24-10.8-24-24zm60.1 106.5L224 336l60.1 93.5c5.1 8-.6 18.5-10.1 18.5h-34.9c-4.4 0-8.5-2.4-10.6-6.3C208.9 405.5 192 373 192 373c-6.4 14.8-10 20-36.6 68.8-2.1 3.9-6.1 6.3-10.5 6.3H110c-9.5 0-15.2-10.5-10.1-18.5l60.3-93.5-60.3-93.5c-5.2-8 .6-18.5 10.1-18.5h34.8c4.4 0 8.5 2.4 10.6 6.3 26.1 48.8 20 33.6 36.6 68.5 0 0 6.1-11.7 36.6-68.5 2.1-3.9 6.2-6.3 10.6-6.3H274c9.5-.1 15.2 10.4 10.1 18.4zM384 121.9v6.1H256V0h6.1c6.4 0 12.5 2.5 17 7l97.9 98c4.5 4.5 7 10.6 7 16.9z" fill="#12a06e"/></svg>
<div class="tx" style="left:1143px;width:120px;text-align:center;top:379.5px;font-size:12.3px;line-height:14px;color:#1f2937">Diccionario</div>
<div class="abs" style="left:335px;top:463px;width:930px;height:1px;background:#e8e8ec"></div>
<div class="abs" style="left:801px;top:402px;width:1px;height:61px;background:#e8e8ec"></div>
<div class="abs" style="left:882px;top:402px;width:1px;height:61px;background:#e8e8ec"></div>
<div class="tx" style="left:342px;top:424.0px;font-size:14px;line-height:16px;color:#1f2937;letter-spacing:0.033px">3 Remuneraciones ingresos adicionales</div>
<div class="tx" style="left:811px;top:424.0px;font-size:14px;line-height:16px;color:#1f2937">12/1/2026</div>
<svg style="left:903px;top:408.0px" width="19" height="25" viewBox="0 0 384 512"><path d="M224 136V0H24C10.7 0 0 10.7 0 24v464c0 13.3 10.7 24 24 24h336c13.3 0 24-10.7 24-24V160H248c-13.2 0-24-10.8-24-24zm-96 144c0 4.42-3.58 8-8 8h-8c-8.84 0-16 7.16-16 16v32c0 8.84 7.16 16 16 16h8c4.42 0 8 3.58 8 8v16c0 4.42-3.58 8-8 8h-8c-26.51 0-48-21.49-48-48v-32c0-26.51 21.49-48 48-48h8c4.42 0 8 3.58 8 8v16zm44.27 104H160c-4.42 0-8-3.58-8-8v-16c0-4.42 3.58-8 8-8h12.27c5.95 0 10.41-3.5 10.41-6.62 0-1.3-.75-2.66-2.12-3.84l-21.89-18.77c-8.47-7.22-13.33-17.48-13.33-28.14 0-21.3 19.02-38.62 42.41-38.62H200c4.42 0 8 3.58 8 8v16c0 4.42-3.58 8-8 8h-12.27c-5.95 0-10.41 3.5-10.41 6.62 0 1.3.75 2.66 2.12 3.84l21.89 18.77c8.47 7.22 13.33 17.48 13.33 28.14.01 21.29-19 38.62-42.39 38.62zM256 264v20.8c0 20.27 5.7 40.17 16 56.88 10.3-16.7 16-36.61 16-56.88V264c0-4.42 3.58-8 8-8h16c4.42 0 8 3.58 8 8v20.8c0 35.48-12.88 68.89-36.28 94.09-3.02 3.25-7.27 5.11-11.72 5.11s-8.7-1.86-11.72-5.11C236.88 353.69 224 320.28 224 284.8V264c0-4.42 3.58-8 8-8h16c4.42 0 8 3.58 8 8zm121-159L279.1 7c-4.5-4.5-10.6-7-17-7H256v128h128v-6.1c0-6.3-2.5-12.4-7-16.9z" fill="#226f94"/></svg>
<svg style="left:934.3px;top:408.0px" width="19" height="25" viewBox="0 0 384 512"><path d="M181.9 256.1c-5-16-4.9-46.9-2-46.9 8.4 0 7.6 36.9 2 46.9zm-1.7 47.2c-7.7 20.2-17.3 43.3-28.4 62.7 18.3-7 39-17.2 62.9-21.9-12.7-9.6-24.9-23.4-34.5-40.8zM86.1 428.1c0 .8 13.2-5.4 34.9-40.2-6.7 6.3-29.1 24.5-34.9 40.2zM248 160h136v328c0 13.3-10.7 24-24 24H24c-13.3 0-24-10.7-24-24V24C0 10.7 10.7 0 24 0h200v136c0 13.2 10.8 24 24 24zm-8 171.8c-20-12.2-33.3-29-42.7-53.8 4.5-18.5 11.6-46.6 6.2-64.2-4.7-29.4-42.4-26.5-47.8-6.8-5 18.3-.4 44.1 8.1 77-11.6 27.6-28.7 64.6-40.8 85.8-.1 0-.1.1-.2.1-27.1 13.9-73.6 44.5-54.5 68 5.6 6.9 16 10 21.5 10 17.9 0 35.7-18 61.1-61.8 25.8-8.5 54.1-19.1 79-23.2 21.7 11.8 47.1 19.5 64 19.5 29.2 0 31.2-32 19.7-43.4-13.9-13.6-54.3-9.7-73.6-7.2zM377 105L279 7c-4.5-4.5-10.6-7-17-7h-6v128h128v-6.1c0-6.3-2.5-12.4-7-16.9zm-74.1 255.3c4.1-2.7-2.5-11.9-42.8-9 37.1 15.8 42.8 9 42.8 9z" fill="#f04c4c"/></svg>
<svg style="left:966.6px;top:408.0px" width="19" height="25" viewBox="0 0 384 512"><path d="M224 136V0H24C10.7 0 0 10.7 0 24v464c0 13.3 10.7 24 24 24h336c13.3 0 24-10.7 24-24V160H248c-13.2 0-24-10.8-24-24zm60.1 106.5L224 336l60.1 93.5c5.1 8-.6 18.5-10.1 18.5h-34.9c-4.4 0-8.5-2.4-10.6-6.3C208.9 405.5 192 373 192 373c-6.4 14.8-10 20-36.6 68.8-2.1 3.9-6.1 6.3-10.5 6.3H110c-9.5 0-15.2-10.5-10.1-18.5l60.3-93.5-60.3-93.5c-5.2-8 .6-18.5 10.1-18.5h34.8c4.4 0 8.5 2.4 10.6 6.3 26.1 48.8 20 33.6 36.6 68.5 0 0 6.1-11.7 36.6-68.5 2.1-3.9 6.2-6.3 10.6-6.3H274c9.5-.1 15.2 10.4 10.1 18.4zM384 121.9v6.1H256V0h6.1c6.4 0 12.5 2.5 17 7l97.9 98c4.5 4.5 7 10.6 7 16.9z" fill="#12a06e"/></svg>
<div class="tx" style="left:884px;width:120px;text-align:center;top:442.0px;font-size:12.3px;line-height:14px;color:#1f2937">Conjunto de datos</div>
<svg style="left:1033px;top:408.0px" width="19" height="25" viewBox="0 0 384 512"><path d="M224 136V0H24C10.7 0 0 10.7 0 24v464c0 13.3 10.7 24 24 24h336c13.3 0 24-10.7 24-24V160H248c-13.2 0-24-10.8-24-24zm-96 144c0 4.42-3.58 8-8 8h-8c-8.84 0-16 7.16-16 16v32c0 8.84 7.16 16 16 16h8c4.42 0 8 3.58 8 8v16c0 4.42-3.58 8-8 8h-8c-26.51 0-48-21.49-48-48v-32c0-26.51 21.49-48 48-48h8c4.42 0 8 3.58 8 8v16zm44.27 104H160c-4.42 0-8-3.58-8-8v-16c0-4.42 3.58-8 8-8h12.27c5.95 0 10.41-3.5 10.41-6.62 0-1.3-.75-2.66-2.12-3.84l-21.89-18.77c-8.47-7.22-13.33-17.48-13.33-28.14 0-21.3 19.02-38.62 42.41-38.62H200c4.42 0 8 3.58 8 8v16c0 4.42-3.58 8-8 8h-12.27c-5.95 0-10.41 3.5-10.41 6.62 0 1.3.75 2.66 2.12 3.84l21.89 18.77c8.47 7.22 13.33 17.48 13.33 28.14.01 21.29-19 38.62-42.39 38.62zM256 264v20.8c0 20.27 5.7 40.17 16 56.88 10.3-16.7 16-36.61 16-56.88V264c0-4.42 3.58-8 8-8h16c4.42 0 8 3.58 8 8v20.8c0 35.48-12.88 68.89-36.28 94.09-3.02 3.25-7.27 5.11-11.72 5.11s-8.7-1.86-11.72-5.11C236.88 353.69 224 320.28 224 284.8V264c0-4.42 3.58-8 8-8h16c4.42 0 8 3.58 8 8zm121-159L279.1 7c-4.5-4.5-10.6-7-17-7H256v128h128v-6.1c0-6.3-2.5-12.4-7-16.9z" fill="#226f94"/></svg>
<svg style="left:1064.3px;top:408.0px" width="19" height="25" viewBox="0 0 384 512"><path d="M181.9 256.1c-5-16-4.9-46.9-2-46.9 8.4 0 7.6 36.9 2 46.9zm-1.7 47.2c-7.7 20.2-17.3 43.3-28.4 62.7 18.3-7 39-17.2 62.9-21.9-12.7-9.6-24.9-23.4-34.5-40.8zM86.1 428.1c0 .8 13.2-5.4 34.9-40.2-6.7 6.3-29.1 24.5-34.9 40.2zM248 160h136v328c0 13.3-10.7 24-24 24H24c-13.3 0-24-10.7-24-24V24C0 10.7 10.7 0 24 0h200v136c0 13.2 10.8 24 24 24zm-8 171.8c-20-12.2-33.3-29-42.7-53.8 4.5-18.5 11.6-46.6 6.2-64.2-4.7-29.4-42.4-26.5-47.8-6.8-5 18.3-.4 44.1 8.1 77-11.6 27.6-28.7 64.6-40.8 85.8-.1 0-.1.1-.2.1-27.1 13.9-73.6 44.5-54.5 68 5.6 6.9 16 10 21.5 10 17.9 0 35.7-18 61.1-61.8 25.8-8.5 54.1-19.1 79-23.2 21.7 11.8 47.1 19.5 64 19.5 29.2 0 31.2-32 19.7-43.4-13.9-13.6-54.3-9.7-73.6-7.2zM377 105L279 7c-4.5-4.5-10.6-7-17-7h-6v128h128v-6.1c0-6.3-2.5-12.4-7-16.9zm-74.1 255.3c4.1-2.7-2.5-11.9-42.8-9 37.1 15.8 42.8 9 42.8 9z" fill="#f04c4c"/></svg>
<svg style="left:1096.6px;top:408.0px" width="19" height="25" viewBox="0 0 384 512"><path d="M224 136V0H24C10.7 0 0 10.7 0 24v464c0 13.3 10.7 24 24 24h336c13.3 0 24-10.7 24-24V160H248c-13.2 0-24-10.8-24-24zm60.1 106.5L224 336l60.1 93.5c5.1 8-.6 18.5-10.1 18.5h-34.9c-4.4 0-8.5-2.4-10.6-6.3C208.9 405.5 192 373 192 373c-6.4 14.8-10 20-36.6 68.8-2.1 3.9-6.1 6.3-10.5 6.3H110c-9.5 0-15.2-10.5-10.1-18.5l60.3-93.5-60.3-93.5c-5.2-8 .6-18.5 10.1-18.5h34.8c4.4 0 8.5 2.4 10.6 6.3 26.1 48.8 20 33.6 36.6 68.5 0 0 6.1-11.7 36.6-68.5 2.1-3.9 6.2-6.3 10.6-6.3H274c9.5-.1 15.2 10.4 10.1 18.4zM384 121.9v6.1H256V0h6.1c6.4 0 12.5 2.5 17 7l97.9 98c4.5 4.5 7 10.6 7 16.9z" fill="#12a06e"/></svg>
<div class="tx" style="left:1014px;width:120px;text-align:center;top:442.0px;font-size:12.3px;line-height:14px;color:#1f2937">Metadatos</div>
<svg style="left:1162px;top:408.0px" width="19" height="25" viewBox="0 0 384 512"><path d="M224 136V0H24C10.7 0 0 10.7 0 24v464c0 13.3 10.7 24 24 24h336c13.3 0 24-10.7 24-24V160H248c-13.2 0-24-10.8-24-24zm-96 144c0 4.42-3.58 8-8 8h-8c-8.84 0-16 7.16-16 16v32c0 8.84 7.16 16 16 16h8c4.42 0 8 3.58 8 8v16c0 4.42-3.58 8-8 8h-8c-26.51 0-48-21.49-48-48v-32c0-26.51 21.49-48 48-48h8c4.42 0 8 3.58 8 8v16zm44.27 104H160c-4.42 0-8-3.58-8-8v-16c0-4.42 3.58-8 8-8h12.27c5.95 0 10.41-3.5 10.41-6.62 0-1.3-.75-2.66-2.12-3.84l-21.89-18.77c-8.47-7.22-13.33-17.48-13.33-28.14 0-21.3 19.02-38.62 42.41-38.62H200c4.42 0 8 3.58 8 8v16c0 4.42-3.58 8-8 8h-12.27c-5.95 0-10.41 3.5-10.41 6.62 0 1.3.75 2.66 2.12 3.84l21.89 18.77c8.47 7.22 13.33 17.48 13.33 28.14.01 21.29-19 38.62-42.39 38.62zM256 264v20.8c0 20.27 5.7 40.17 16 56.88 10.3-16.7 16-36.61 16-56.88V264c0-4.42 3.58-8 8-8h16c4.42 0 8 3.58 8 8v20.8c0 35.48-12.88 68.89-36.28 94.09-3.02 3.25-7.27 5.11-11.72 5.11s-8.7-1.86-11.72-5.11C236.88 353.69 224 320.28 224 284.8V264c0-4.42 3.58-8 8-8h16c4.42 0 8 3.58 8 8zm121-159L279.1 7c-4.5-4.5-10.6-7-17-7H256v128h128v-6.1c0-6.3-2.5-12.4-7-16.9z" fill="#226f94"/></svg>
<svg style="left:1193.3px;top:408.0px" width="19" height="25" viewBox="0 0 384 512"><path d="M181.9 256.1c-5-16-4.9-46.9-2-46.9 8.4 0 7.6 36.9 2 46.9zm-1.7 47.2c-7.7 20.2-17.3 43.3-28.4 62.7 18.3-7 39-17.2 62.9-21.9-12.7-9.6-24.9-23.4-34.5-40.8zM86.1 428.1c0 .8 13.2-5.4 34.9-40.2-6.7 6.3-29.1 24.5-34.9 40.2zM248 160h136v328c0 13.3-10.7 24-24 24H24c-13.3 0-24-10.7-24-24V24C0 10.7 10.7 0 24 0h200v136c0 13.2 10.8 24 24 24zm-8 171.8c-20-12.2-33.3-29-42.7-53.8 4.5-18.5 11.6-46.6 6.2-64.2-4.7-29.4-42.4-26.5-47.8-6.8-5 18.3-.4 44.1 8.1 77-11.6 27.6-28.7 64.6-40.8 85.8-.1 0-.1.1-.2.1-27.1 13.9-73.6 44.5-54.5 68 5.6 6.9 16 10 21.5 10 17.9 0 35.7-18 61.1-61.8 25.8-8.5 54.1-19.1 79-23.2 21.7 11.8 47.1 19.5 64 19.5 29.2 0 31.2-32 19.7-43.4-13.9-13.6-54.3-9.7-73.6-7.2zM377 105L279 7c-4.5-4.5-10.6-7-17-7h-6v128h128v-6.1c0-6.3-2.5-12.4-7-16.9zm-74.1 255.3c4.1-2.7-2.5-11.9-42.8-9 37.1 15.8 42.8 9 42.8 9z" fill="#f04c4c"/></svg>
<svg style="left:1225.6px;top:408.0px" width="19" height="25" viewBox="0 0 384 512"><path d="M224 136V0H24C10.7 0 0 10.7 0 24v464c0 13.3 10.7 24 24 24h336c13.3 0 24-10.7 24-24V160H248c-13.2 0-24-10.8-24-24zm60.1 106.5L224 336l60.1 93.5c5.1 8-.6 18.5-10.1 18.5h-34.9c-4.4 0-8.5-2.4-10.6-6.3C208.9 405.5 192 373 192 373c-6.4 14.8-10 20-36.6 68.8-2.1 3.9-6.1 6.3-10.5 6.3H110c-9.5 0-15.2-10.5-10.1-18.5l60.3-93.5-60.3-93.5c-5.2-8 .6-18.5 10.1-18.5h34.8c4.4 0 8.5 2.4 10.6 6.3 26.1 48.8 20 33.6 36.6 68.5 0 0 6.1-11.7 36.6-68.5 2.1-3.9 6.2-6.3 10.6-6.3H274c9.5-.1 15.2 10.4 10.1 18.4zM384 121.9v6.1H256V0h6.1c6.4 0 12.5 2.5 17 7l97.9 98c4.5 4.5 7 10.6 7 16.9z" fill="#12a06e"/></svg>
<div class="tx" style="left:1143px;width:120px;text-align:center;top:442.0px;font-size:12.3px;line-height:14px;color:#1f2937">Diccionario</div>
<div class="abs" style="left:335px;top:525px;width:930px;height:1px;background:#f9f9fa"></div>
<div class="abs" style="left:335px;top:526px;width:930px;height:1px;background:#efeff1"></div>
<div class="abs" style="left:801px;top:464px;width:1px;height:62px;background:#e8e8ec"></div>
<div class="abs" style="left:882px;top:464px;width:1px;height:62px;background:#e8e8ec"></div>
<div class="tx" style="left:342px;top:486.5px;font-size:14px;line-height:16px;color:#1f2937;letter-spacing:0.086px">4 Detalle Licencia y comisiones</div>
<div class="tx" style="left:811px;top:486.5px;font-size:14px;line-height:16px;color:#1f2937">12/1/2026</div>
<svg style="left:903px;top:470.5px" width="19" height="25" viewBox="0 0 384 512"><path d="M224 136V0H24C10.7 0 0 10.7 0 24v464c0 13.3 10.7 24 24 24h336c13.3 0 24-10.7 24-24V160H248c-13.2 0-24-10.8-24-24zm-96 144c0 4.42-3.58 8-8 8h-8c-8.84 0-16 7.16-16 16v32c0 8.84 7.16 16 16 16h8c4.42 0 8 3.58 8 8v16c0 4.42-3.58 8-8 8h-8c-26.51 0-48-21.49-48-48v-32c0-26.51 21.49-48 48-48h8c4.42 0 8 3.58 8 8v16zm44.27 104H160c-4.42 0-8-3.58-8-8v-16c0-4.42 3.58-8 8-8h12.27c5.95 0 10.41-3.5 10.41-6.62 0-1.3-.75-2.66-2.12-3.84l-21.89-18.77c-8.47-7.22-13.33-17.48-13.33-28.14 0-21.3 19.02-38.62 42.41-38.62H200c4.42 0 8 3.58 8 8v16c0 4.42-3.58 8-8 8h-12.27c-5.95 0-10.41 3.5-10.41 6.62 0 1.3.75 2.66 2.12 3.84l21.89 18.77c8.47 7.22 13.33 17.48 13.33 28.14.01 21.29-19 38.62-42.39 38.62zM256 264v20.8c0 20.27 5.7 40.17 16 56.88 10.3-16.7 16-36.61 16-56.88V264c0-4.42 3.58-8 8-8h16c4.42 0 8 3.58 8 8v20.8c0 35.48-12.88 68.89-36.28 94.09-3.02 3.25-7.27 5.11-11.72 5.11s-8.7-1.86-11.72-5.11C236.88 353.69 224 320.28 224 284.8V264c0-4.42 3.58-8 8-8h16c4.42 0 8 3.58 8 8zm121-159L279.1 7c-4.5-4.5-10.6-7-17-7H256v128h128v-6.1c0-6.3-2.5-12.4-7-16.9z" fill="#226f94"/></svg>
<svg style="left:934.3px;top:470.5px" width="19" height="25" viewBox="0 0 384 512"><path d="M181.9 256.1c-5-16-4.9-46.9-2-46.9 8.4 0 7.6 36.9 2 46.9zm-1.7 47.2c-7.7 20.2-17.3 43.3-28.4 62.7 18.3-7 39-17.2 62.9-21.9-12.7-9.6-24.9-23.4-34.5-40.8zM86.1 428.1c0 .8 13.2-5.4 34.9-40.2-6.7 6.3-29.1 24.5-34.9 40.2zM248 160h136v328c0 13.3-10.7 24-24 24H24c-13.3 0-24-10.7-24-24V24C0 10.7 10.7 0 24 0h200v136c0 13.2 10.8 24 24 24zm-8 171.8c-20-12.2-33.3-29-42.7-53.8 4.5-18.5 11.6-46.6 6.2-64.2-4.7-29.4-42.4-26.5-47.8-6.8-5 18.3-.4 44.1 8.1 77-11.6 27.6-28.7 64.6-40.8 85.8-.1 0-.1.1-.2.1-27.1 13.9-73.6 44.5-54.5 68 5.6 6.9 16 10 21.5 10 17.9 0 35.7-18 61.1-61.8 25.8-8.5 54.1-19.1 79-23.2 21.7 11.8 47.1 19.5 64 19.5 29.2 0 31.2-32 19.7-43.4-13.9-13.6-54.3-9.7-73.6-7.2zM377 105L279 7c-4.5-4.5-10.6-7-17-7h-6v128h128v-6.1c0-6.3-2.5-12.4-7-16.9zm-74.1 255.3c4.1-2.7-2.5-11.9-42.8-9 37.1 15.8 42.8 9 42.8 9z" fill="#f04c4c"/></svg>
<svg style="left:966.6px;top:470.5px" width="19" height="25" viewBox="0 0 384 512"><path d="M224 136V0H24C10.7 0 0 10.7 0 24v464c0 13.3 10.7 24 24 24h336c13.3 0 24-10.7 24-24V160H248c-13.2 0-24-10.8-24-24zm60.1 106.5L224 336l60.1 93.5c5.1 8-.6 18.5-10.1 18.5h-34.9c-4.4 0-8.5-2.4-10.6-6.3C208.9 405.5 192 373 192 373c-6.4 14.8-10 20-36.6 68.8-2.1 3.9-6.1 6.3-10.5 6.3H110c-9.5 0-15.2-10.5-10.1-18.5l60.3-93.5-60.3-93.5c-5.2-8 .6-18.5 10.1-18.5h34.8c4.4 0 8.5 2.4 10.6 6.3 26.1 48.8 20 33.6 36.6 68.5 0 0 6.1-11.7 36.6-68.5 2.1-3.9 6.2-6.3 10.6-6.3H274c9.5-.1 15.2 10.4 10.1 18.4zM384 121.9v6.1H256V0h6.1c6.4 0 12.5 2.5 17 7l97.9 98c4.5 4.5 7 10.6 7 16.9z" fill="#12a06e"/></svg>
<div class="tx" style="left:884px;width:120px;text-align:center;top:504.5px;font-size:12.3px;line-height:14px;color:#1f2937">Metadatos</div>
<svg style="left:1033px;top:470.5px" width="19" height="25" viewBox="0 0 384 512"><path d="M224 136V0H24C10.7 0 0 10.7 0 24v464c0 13.3 10.7 24 24 24h336c13.3 0 24-10.7 24-24V160H248c-13.2 0-24-10.8-24-24zm-96 144c0 4.42-3.58 8-8 8h-8c-8.84 0-16 7.16-16 16v32c0 8.84 7.16 16 16 16h8c4.42 0 8 3.58 8 8v16c0 4.42-3.58 8-8 8h-8c-26.51 0-48-21.49-48-48v-32c0-26.51 21.49-48 48-48h8c4.42 0 8 3.58 8 8v16zm44.27 104H160c-4.42 0-8-3.58-8-8v-16c0-4.42 3.58-8 8-8h12.27c5.95 0 10.41-3.5 10.41-6.62 0-1.3-.75-2.66-2.12-3.84l-21.89-18.77c-8.47-7.22-13.33-17.48-13.33-28.14 0-21.3 19.02-38.62 42.41-38.62H200c4.42 0 8 3.58 8 8v16c0 4.42-3.58 8-8 8h-12.27c-5.95 0-10.41 3.5-10.41 6.62 0 1.3.75 2.66 2.12 3.84l21.89 18.77c8.47 7.22 13.33 17.48 13.33 28.14.01 21.29-19 38.62-42.39 38.62zM256 264v20.8c0 20.27 5.7 40.17 16 56.88 10.3-16.7 16-36.61 16-56.88V264c0-4.42 3.58-8 8-8h16c4.42 0 8 3.58 8 8v20.8c0 35.48-12.88 68.89-36.28 94.09-3.02 3.25-7.27 5.11-11.72 5.11s-8.7-1.86-11.72-5.11C236.88 353.69 224 320.28 224 284.8V264c0-4.42 3.58-8 8-8h16c4.42 0 8 3.58 8 8zm121-159L279.1 7c-4.5-4.5-10.6-7-17-7H256v128h128v-6.1c0-6.3-2.5-12.4-7-16.9z" fill="#226f94"/></svg>
<svg style="left:1064.3px;top:470.5px" width="19" height="25" viewBox="0 0 384 512"><path d="M181.9 256.1c-5-16-4.9-46.9-2-46.9 8.4 0 7.6 36.9 2 46.9zm-1.7 47.2c-7.7 20.2-17.3 43.3-28.4 62.7 18.3-7 39-17.2 62.9-21.9-12.7-9.6-24.9-23.4-34.5-40.8zM86.1 428.1c0 .8 13.2-5.4 34.9-40.2-6.7 6.3-29.1 24.5-34.9 40.2zM248 160h136v328c0 13.3-10.7 24-24 24H24c-13.3 0-24-10.7-24-24V24C0 10.7 10.7 0 24 0h200v136c0 13.2 10.8 24 24 24zm-8 171.8c-20-12.2-33.3-29-42.7-53.8 4.5-18.5 11.6-46.6 6.2-64.2-4.7-29.4-42.4-26.5-47.8-6.8-5 18.3-.4 44.1 8.1 77-11.6 27.6-28.7 64.6-40.8 85.8-.1 0-.1.1-.2.1-27.1 13.9-73.6 44.5-54.5 68 5.6 6.9 16 10 21.5 10 17.9 0 35.7-18 61.1-61.8 25.8-8.5 54.1-19.1 79-23.2 21.7 11.8 47.1 19.5 64 19.5 29.2 0 31.2-32 19.7-43.4-13.9-13.6-54.3-9.7-73.6-7.2zM377 105L279 7c-4.5-4.5-10.6-7-17-7h-6v128h128v-6.1c0-6.3-2.5-12.4-7-16.9zm-74.1 255.3c4.1-2.7-2.5-11.9-42.8-9 37.1 15.8 42.8 9 42.8 9z" fill="#f04c4c"/></svg>
<svg style="left:1096.6px;top:470.5px" width="19" height="25" viewBox="0 0 384 512"><path d="M224 136V0H24C10.7 0 0 10.7 0 24v464c0 13.3 10.7 24 24 24h336c13.3 0 24-10.7 24-24V160H248c-13.2 0-24-10.8-24-24zm60.1 106.5L224 336l60.1 93.5c5.1 8-.6 18.5-10.1 18.5h-34.9c-4.4 0-8.5-2.4-10.6-6.3C208.9 405.5 192 373 192 373c-6.4 14.8-10 20-36.6 68.8-2.1 3.9-6.1 6.3-10.5 6.3H110c-9.5 0-15.2-10.5-10.1-18.5l60.3-93.5-60.3-93.5c-5.2-8 .6-18.5 10.1-18.5h34.8c4.4 0 8.5 2.4 10.6 6.3 26.1 48.8 20 33.6 36.6 68.5 0 0 6.1-11.7 36.6-68.5 2.1-3.9 6.2-6.3 10.6-6.3H274c9.5-.1 15.2 10.4 10.1 18.4zM384 121.9v6.1H256V0h6.1c6.4 0 12.5 2.5 17 7l97.9 98c4.5 4.5 7 10.6 7 16.9z" fill="#12a06e"/></svg>
<div class="tx" style="left:1014px;width:120px;text-align:center;top:504.5px;font-size:12.3px;line-height:14px;color:#1f2937">Diccionario</div>
<svg style="left:1162px;top:470.5px" width="19" height="25" viewBox="0 0 384 512"><path d="M224 136V0H24C10.7 0 0 10.7 0 24v464c0 13.3 10.7 24 24 24h336c13.3 0 24-10.7 24-24V160H248c-13.2 0-24-10.8-24-24zm-96 144c0 4.42-3.58 8-8 8h-8c-8.84 0-16 7.16-16 16v32c0 8.84 7.16 16 16 16h8c4.42 0 8 3.58 8 8v16c0 4.42-3.58 8-8 8h-8c-26.51 0-48-21.49-48-48v-32c0-26.51 21.49-48 48-48h8c4.42 0 8 3.58 8 8v16zm44.27 104H160c-4.42 0-8-3.58-8-8v-16c0-4.42 3.58-8 8-8h12.27c5.95 0 10.41-3.5 10.41-6.62 0-1.3-.75-2.66-2.12-3.84l-21.89-18.77c-8.47-7.22-13.33-17.48-13.33-28.14 0-21.3 19.02-38.62 42.41-38.62H200c4.42 0 8 3.58 8 8v16c0 4.42-3.58 8-8 8h-12.27c-5.95 0-10.41 3.5-10.41 6.62 0 1.3.75 2.66 2.12 3.84l21.89 18.77c8.47 7.22 13.33 17.48 13.33 28.14.01 21.29-19 38.62-42.39 38.62zM256 264v20.8c0 20.27 5.7 40.17 16 56.88 10.3-16.7 16-36.61 16-56.88V264c0-4.42 3.58-8 8-8h16c4.42 0 8 3.58 8 8v20.8c0 35.48-12.88 68.89-36.28 94.09-3.02 3.25-7.27 5.11-11.72 5.11s-8.7-1.86-11.72-5.11C236.88 353.69 224 320.28 224 284.8V264c0-4.42 3.58-8 8-8h16c4.42 0 8 3.58 8 8zm121-159L279.1 7c-4.5-4.5-10.6-7-17-7H256v128h128v-6.1c0-6.3-2.5-12.4-7-16.9z" fill="#226f94"/></svg>
<svg style="left:1193.3px;top:470.5px" width="19" height="25" viewBox="0 0 384 512"><path d="M181.9 256.1c-5-16-4.9-46.9-2-46.9 8.4 0 7.6 36.9 2 46.9zm-1.7 47.2c-7.7 20.2-17.3 43.3-28.4 62.7 18.3-7 39-17.2 62.9-21.9-12.7-9.6-24.9-23.4-34.5-40.8zM86.1 428.1c0 .8 13.2-5.4 34.9-40.2-6.7 6.3-29.1 24.5-34.9 40.2zM248 160h136v328c0 13.3-10.7 24-24 24H24c-13.3 0-24-10.7-24-24V24C0 10.7 10.7 0 24 0h200v136c0 13.2 10.8 24 24 24zm-8 171.8c-20-12.2-33.3-29-42.7-53.8 4.5-18.5 11.6-46.6 6.2-64.2-4.7-29.4-42.4-26.5-47.8-6.8-5 18.3-.4 44.1 8.1 77-11.6 27.6-28.7 64.6-40.8 85.8-.1 0-.1.1-.2.1-27.1 13.9-73.6 44.5-54.5 68 5.6 6.9 16 10 21.5 10 17.9 0 35.7-18 61.1-61.8 25.8-8.5 54.1-19.1 79-23.2 21.7 11.8 47.1 19.5 64 19.5 29.2 0 31.2-32 19.7-43.4-13.9-13.6-54.3-9.7-73.6-7.2zM377 105L279 7c-4.5-4.5-10.6-7-17-7h-6v128h128v-6.1c0-6.3-2.5-12.4-7-16.9zm-74.1 255.3c4.1-2.7-2.5-11.9-42.8-9 37.1 15.8 42.8 9 42.8 9z" fill="#f04c4c"/></svg>
<svg style="left:1225.6px;top:470.5px" width="19" height="25" viewBox="0 0 384 512"><path d="M224 136V0H24C10.7 0 0 10.7 0 24v464c0 13.3 10.7 24 24 24h336c13.3 0 24-10.7 24-24V160H248c-13.2 0-24-10.8-24-24zm60.1 106.5L224 336l60.1 93.5c5.1 8-.6 18.5-10.1 18.5h-34.9c-4.4 0-8.5-2.4-10.6-6.3C208.9 405.5 192 373 192 373c-6.4 14.8-10 20-36.6 68.8-2.1 3.9-6.1 6.3-10.5 6.3H110c-9.5 0-15.2-10.5-10.1-18.5l60.3-93.5-60.3-93.5c-5.2-8 .6-18.5 10.1-18.5h34.8c4.4 0 8.5 2.4 10.6 6.3 26.1 48.8 20 33.6 36.6 68.5 0 0 6.1-11.7 36.6-68.5 2.1-3.9 6.2-6.3 10.6-6.3H274c9.5-.1 15.2 10.4 10.1 18.4zM384 121.9v6.1H256V0h6.1c6.4 0 12.5 2.5 17 7l97.9 98c4.5 4.5 7 10.6 7 16.9z" fill="#12a06e"/></svg>
<div class="tx" style="left:1143px;width:120px;text-align:center;top:504.5px;font-size:12.3px;line-height:14px;color:#1f2937">Conjunto de datos</div>
<div class="abs" style="left:335px;top:588px;width:930px;height:1px;background:#e8e8ec"></div>
<div class="abs" style="left:801px;top:527px;width:1px;height:61px;background:#e8e8ec"></div>
<div class="abs" style="left:882px;top:527px;width:1px;height:61px;background:#e8e8ec"></div>
<div class="tx" style="left:342px;top:549.0px;font-size:14px;line-height:16px;color:#1f2937;letter-spacing:0.188px">5-22 -Servicios formularios formatos tramites</div>
<div class="tx" style="left:811px;top:549.0px;font-size:14px;line-height:16px;color:#1f2937">12/1/2026</div>
<svg style="left:903px;top:533.0px" width="19" height="25" viewBox="0 0 384 512"><path d="M224 136V0H24C10.7 0 0 10.7 0 24v464c0 13.3 10.7 24 24 24h336c13.3 0 24-10.7 24-24V160H248c-13.2 0-24-10.8-24-24zm-96 144c0 4.42-3.58 8-8 8h-8c-8.84 0-16 7.16-16 16v32c0 8.84 7.16 16 16 16h8c4.42 0 8 3.58 8 8v16c0 4.42-3.58 8-8 8h-8c-26.51 0-48-21.49-48-48v-32c0-26.51 21.49-48 48-48h8c4.42 0 8 3.58 8 8v16zm44.27 104H160c-4.42 0-8-3.58-8-8v-16c0-4.42 3.58-8 8-8h12.27c5.95 0 10.41-3.5 10.41-6.62 0-1.3-.75-2.66-2.12-3.84l-21.89-18.77c-8.47-7.22-13.33-17.48-13.33-28.14 0-21.3 19.02-38.62 42.41-38.62H200c4.42 0 8 3.58 8 8v16c0 4.42-3.58 8-8 8h-12.27c-5.95 0-10.41 3.5-10.41 6.62 0 1.3.75 2.66 2.12 3.84l21.89 18.77c8.47 7.22 13.33 17.48 13.33 28.14.01 21.29-19 38.62-42.39 38.62zM256 264v20.8c0 20.27 5.7 40.17 16 56.88 10.3-16.7 16-36.61 16-56.88V264c0-4.42 3.58-8 8-8h16c4.42 0 8 3.58 8 8v20.8c0 35.48-12.88 68.89-36.28 94.09-3.02 3.25-7.27 5.11-11.72 5.11s-8.7-1.86-11.72-5.11C236.88 353.69 224 320.28 224 284.8V264c0-4.42 3.58-8 8-8h16c4.42 0 8 3.58 8 8zm121-159L279.1 7c-4.5-4.5-10.6-7-17-7H256v128h128v-6.1c0-6.3-2.5-12.4-7-16.9z" fill="#226f94"/></svg>
<svg style="left:934.3px;top:533.0px" width="19" height="25" viewBox="0 0 384 512"><path d="M181.9 256.1c-5-16-4.9-46.9-2-46.9 8.4 0 7.6 36.9 2 46.9zm-1.7 47.2c-7.7 20.2-17.3 43.3-28.4 62.7 18.3-7 39-17.2 62.9-21.9-12.7-9.6-24.9-23.4-34.5-40.8zM86.1 428.1c0 .8 13.2-5.4 34.9-40.2-6.7 6.3-29.1 24.5-34.9 40.2zM248 160h136v328c0 13.3-10.7 24-24 24H24c-13.3 0-24-10.7-24-24V24C0 10.7 10.7 0 24 0h200v136c0 13.2 10.8 24 24 24zm-8 171.8c-20-12.2-33.3-29-42.7-53.8 4.5-18.5 11.6-46.6 6.2-64.2-4.7-29.4-42.4-26.5-47.8-6.8-5 18.3-.4 44.1 8.1 77-11.6 27.6-28.7 64.6-40.8 85.8-.1 0-.1.1-.2.1-27.1 13.9-73.6 44.5-54.5 68 5.6 6.9 16 10 21.5 10 17.9 0 35.7-18 61.1-61.8 25.8-8.5 54.1-19.1 79-23.2 21.7 11.8 47.1 19.5 64 19.5 29.2 0 31.2-32 19.7-43.4-13.9-13.6-54.3-9.7-73.6-7.2zM377 105L279 7c-4.5-4.5-10.6-7-17-7h-6v128h128v-6.1c0-6.3-2.5-12.4-7-16.9zm-74.1 255.3c4.1-2.7-2.5-11.9-42.8-9 37.1 15.8 42.8 9 42.8 9z" fill="#f04c4c"/></svg>
<svg style="left:966.6px;top:533.0px" width="19" height="25" viewBox="0 0 384 512"><path d="M224 136V0H24C10.7 0 0 10.7 0 24v464c0 13.3 10.7 24 24 24h336c13.3 0 24-10.7 24-24V160H248c-13.2 0-24-10.8-24-24zm60.1 106.5L224 336l60.1 93.5c5.1 8-.6 18.5-10.1 18.5h-34.9c-4.4 0-8.5-2.4-10.6-6.3C208.9 405.5 192 373 192 373c-6.4 14.8-10 20-36.6 68.8-2.1 3.9-6.1 6.3-10.5 6.3H110c-9.5 0-15.2-10.5-10.1-18.5l60.3-93.5-60.3-93.5c-5.2-8 .6-18.5 10.1-18.5h34.8c4.4 0 8.5 2.4 10.6 6.3 26.1 48.8 20 33.6 36.6 68.5 0 0 6.1-11.7 36.6-68.5 2.1-3.9 6.2-6.3 10.6-6.3H274c9.5-.1 15.2 10.4 10.1 18.4zM384 121.9v6.1H256V0h6.1c6.4 0 12.5 2.5 17 7l97.9 98c4.5 4.5 7 10.6 7 16.9z" fill="#12a06e"/></svg>
<div class="tx" style="left:884px;width:120px;text-align:center;top:567.0px;font-size:12.3px;line-height:14px;color:#1f2937">Conjunto de datos</div>
<svg style="left:1033px;top:533.0px" width="19" height="25" viewBox="0 0 384 512"><path d="M224 136V0H24C10.7 0 0 10.7 0 24v464c0 13.3 10.7 24 24 24h336c13.3 0 24-10.7 24-24V160H248c-13.2 0-24-10.8-24-24zm-96 144c0 4.42-3.58 8-8 8h-8c-8.84 0-16 7.16-16 16v32c0 8.84 7.16 16 16 16h8c4.42 0 8 3.58 8 8v16c0 4.42-3.58 8-8 8h-8c-26.51 0-48-21.49-48-48v-32c0-26.51 21.49-48 48-48h8c4.42 0 8 3.58 8 8v16zm44.27 104H160c-4.42 0-8-3.58-8-8v-16c0-4.42 3.58-8 8-8h12.27c5.95 0 10.41-3.5 10.41-6.62 0-1.3-.75-2.66-2.12-3.84l-21.89-18.77c-8.47-7.22-13.33-17.48-13.33-28.14 0-21.3 19.02-38.62 42.41-38.62H200c4.42 0 8 3.58 8 8v16c0 4.42-3.58 8-8 8h-12.27c-5.95 0-10.41 3.5-10.41 6.62 0 1.3.75 2.66 2.12 3.84l21.89 18.77c8.47 7.22 13.33 17.48 13.33 28.14.01 21.29-19 38.62-42.39 38.62zM256 264v20.8c0 20.27 5.7 40.17 16 56.88 10.3-16.7 16-36.61 16-56.88V264c0-4.42 3.58-8 8-8h16c4.42 0 8 3.58 8 8v20.8c0 35.48-12.88 68.89-36.28 94.09-3.02 3.25-7.27 5.11-11.72 5.11s-8.7-1.86-11.72-5.11C236.88 353.69 224 320.28 224 284.8V264c0-4.42 3.58-8 8-8h16c4.42 0 8 3.58 8 8zm121-159L279.1 7c-4.5-4.5-10.6-7-17-7H256v128h128v-6.1c0-6.3-2.5-12.4-7-16.9z" fill="#226f94"/></svg>
<svg style="left:1064.3px;top:533.0px" width="19" height="25" viewBox="0 0 384 512"><path d="M181.9 256.1c-5-16-4.9-46.9-2-46.9 8.4 0 7.6 36.9 2 46.9zm-1.7 47.2c-7.7 20.2-17.3 43.3-28.4 62.7 18.3-7 39-17.2 62.9-21.9-12.7-9.6-24.9-23.4-34.5-40.8zM86.1 428.1c0 .8 13.2-5.4 34.9-40.2-6.7 6.3-29.1 24.5-34.9 40.2zM248 160h136v328c0 13.3-10.7 24-24 24H24c-13.3 0-24-10.7-24-24V24C0 10.7 10.7 0 24 0h200v136c0 13.2 10.8 24 24 24zm-8 171.8c-20-12.2-33.3-29-42.7-53.8 4.5-18.5 11.6-46.6 6.2-64.2-4.7-29.4-42.4-26.5-47.8-6.8-5 18.3-.4 44.1 8.1 77-11.6 27.6-28.7 64.6-40.8 85.8-.1 0-.1.1-.2.1-27.1 13.9-73.6 44.5-54.5 68 5.6 6.9 16 10 21.5 10 17.9 0 35.7-18 61.1-61.8 25.8-8.5 54.1-19.1 79-23.2 21.7 11.8 47.1 19.5 64 19.5 29.2 0 31.2-32 19.7-43.4-13.9-13.6-54.3-9.7-73.6-7.2zM377 105L279 7c-4.5-4.5-10.6-7-17-7h-6v128h128v-6.1c0-6.3-2.5-12.4-7-16.9zm-74.1 255.3c4.1-2.7-2.5-11.9-42.8-9 37.1 15.8 42.8 9 42.8 9z" fill="#f04c4c"/></svg>
<svg style="left:1096.6px;top:533.0px" width="19" height="25" viewBox="0 0 384 512"><path d="M224 136V0H24C10.7 0 0 10.7 0 24v464c0 13.3 10.7 24 24 24h336c13.3 0 24-10.7 24-24V160H248c-13.2 0-24-10.8-24-24zm60.1 106.5L224 336l60.1 93.5c5.1 8-.6 18.5-10.1 18.5h-34.9c-4.4 0-8.5-2.4-10.6-6.3C208.9 405.5 192 373 192 373c-6.4 14.8-10 20-36.6 68.8-2.1 3.9-6.1 6.3-10.5 6.3H110c-9.5 0-15.2-10.5-10.1-18.5l60.3-93.5-60.3-93.5c-5.2-8 .6-18.5 10.1-18.5h34.8c4.4 0 8.5 2.4 10.6 6.3 26.1 48.8 20 33.6 36.6 68.5 0 0 6.1-11.7 36.6-68.5 2.1-3.9 6.2-6.3 10.6-6.3H274c9.5-.1 15.2 10.4 10.1 18.4zM384 121.9v6.1H256V0h6.1c6.4 0 12.5 2.5 17 7l97.9 98c4.5 4.5 7 10.6 7 16.9z" fill="#12a06e"/></svg>
<div class="tx" style="left:1014px;width:120px;text-align:center;top:567.0px;font-size:12.3px;line-height:14px;color:#1f2937">Metadatos</div>
<svg style="left:1162px;top:533.0px" width="19" height="25" viewBox="0 0 384 512"><path d="M224 136V0H24C10.7 0 0 10.7 0 24v464c0 13.3 10.7 24 24 24h336c13.3 0 24-10.7 24-24V160H248c-13.2 0-24-10.8-24-24zm-96 144c0 4.42-3.58 8-8 8h-8c-8.84 0-16 7.16-16 16v32c0 8.84 7.16 16 16 16h8c4.42 0 8 3.58 8 8v16c0 4.42-3.58 8-8 8h-8c-26.51 0-48-21.49-48-48v-32c0-26.51 21.49-48 48-48h8c4.42 0 8 3.58 8 8v16zm44.27 104H160c-4.42 0-8-3.58-8-8v-16c0-4.42 3.58-8 8-8h12.27c5.95 0 10.41-3.5 10.41-6.62 0-1.3-.75-2.66-2.12-3.84l-21.89-18.77c-8.47-7.22-13.33-17.48-13.33-28.14 0-21.3 19.02-38.62 42.41-38.62H200c4.42 0 8 3.58 8 8v16c0 4.42-3.58 8-8 8h-12.27c-5.95 0-10.41 3.5-10.41 6.62 0 1.3.75 2.66 2.12 3.84l21.89 18.77c8.47 7.22 13.33 17.48 13.33 28.14.01 21.29-19 38.62-42.39 38.62zM256 264v20.8c0 20.27 5.7 40.17 16 56.88 10.3-16.7 16-36.61 16-56.88V264c0-4.42 3.58-8 8-8h16c4.42 0 8 3.58 8 8v20.8c0 35.48-12.88 68.89-36.28 94.09-3.02 3.25-7.27 5.11-11.72 5.11s-8.7-1.86-11.72-5.11C236.88 353.69 224 320.28 224 284.8V264c0-4.42 3.58-8 8-8h16c4.42 0 8 3.58 8 8zm121-159L279.1 7c-4.5-4.5-10.6-7-17-7H256v128h128v-6.1c0-6.3-2.5-12.4-7-16.9z" fill="#226f94"/></svg>
<svg style="left:1193.3px;top:533.0px" width="19" height="25" viewBox="0 0 384 512"><path d="M181.9 256.1c-5-16-4.9-46.9-2-46.9 8.4 0 7.6 36.9 2 46.9zm-1.7 47.2c-7.7 20.2-17.3 43.3-28.4 62.7 18.3-7 39-17.2 62.9-21.9-12.7-9.6-24.9-23.4-34.5-40.8zM86.1 428.1c0 .8 13.2-5.4 34.9-40.2-6.7 6.3-29.1 24.5-34.9 40.2zM248 160h136v328c0 13.3-10.7 24-24 24H24c-13.3 0-24-10.7-24-24V24C0 10.7 10.7 0 24 0h200v136c0 13.2 10.8 24 24 24zm-8 171.8c-20-12.2-33.3-29-42.7-53.8 4.5-18.5 11.6-46.6 6.2-64.2-4.7-29.4-42.4-26.5-47.8-6.8-5 18.3-.4 44.1 8.1 77-11.6 27.6-28.7 64.6-40.8 85.8-.1 0-.1.1-.2.1-27.1 13.9-73.6 44.5-54.5 68 5.6 6.9 16 10 21.5 10 17.9 0 35.7-18 61.1-61.8 25.8-8.5 54.1-19.1 79-23.2 21.7 11.8 47.1 19.5 64 19.5 29.2 0 31.2-32 19.7-43.4-13.9-13.6-54.3-9.7-73.6-7.2zM377 105L279 7c-4.5-4.5-10.6-7-17-7h-6v128h128v-6.1c0-6.3-2.5-12.4-7-16.9zm-74.1 255.3c4.1-2.7-2.5-11.9-42.8-9 37.1 15.8 42.8 9 42.8 9z" fill="#f04c4c"/></svg>
<svg style="left:1225.6px;top:533.0px" width="19" height="25" viewBox="0 0 384 512"><path d="M224 136V0H24C10.7 0 0 10.7 0 24v464c0 13.3 10.7 24 24 24h336c13.3 0 24-10.7 24-24V160H248c-13.2 0-24-10.8-24-24zm60.1 106.5L224 336l60.1 93.5c5.1 8-.6 18.5-10.1 18.5h-34.9c-4.4 0-8.5-2.4-10.6-6.3C208.9 405.5 192 373 192 373c-6.4 14.8-10 20-36.6 68.8-2.1 3.9-6.1 6.3-10.5 6.3H110c-9.5 0-15.2-10.5-10.1-18.5l60.3-93.5-60.3-93.5c-5.2-8 .6-18.5 10.1-18.5h34.8c4.4 0 8.5 2.4 10.6 6.3 26.1 48.8 20 33.6 36.6 68.5 0 0 6.1-11.7 36.6-68.5 2.1-3.9 6.2-6.3 10.6-6.3H274c9.5-.1 15.2 10.4 10.1 18.4zM384 121.9v6.1H256V0h6.1c6.4 0 12.5 2.5 17 7l97.9 98c4.5 4.5 7 10.6 7 16.9z" fill="#12a06e"/></svg>
<div class="tx" style="left:1143px;width:120px;text-align:center;top:567.0px;font-size:12.3px;line-height:14px;color:#1f2937">Diccionario</div>
<div class="abs" style="left:335px;top:650px;width:930px;height:1px;background:#f9f9fa"></div>
<div class="abs" style="left:335px;top:651px;width:930px;height:1px;background:#efeff1"></div>
<div class="abs" style="left:801px;top:589px;width:1px;height:62px;background:#e8e8ec"></div>
<div class="abs" style="left:882px;top:589px;width:1px;height:62px;background:#e8e8ec"></div>
<div class="tx" style="left:342px;top:611.5px;font-size:14px;line-height:16px;color:#1f2937;letter-spacing:0.049px">7 Resultados de las auditorias internas y gubernamentales</div>
<div class="tx" style="left:811px;top:611.5px;font-size:14px;line-height:16px;color:#1f2937">12/1/2026</div>
<svg style="left:903px;top:595.5px" width="19" height="25" viewBox="0 0 384 512"><path d="M224 136V0H24C10.7 0 0 10.7 0 24v464c0 13.3 10.7 24 24 24h336c13.3 0 24-10.7 24-24V160H248c-13.2 0-24-10.8-24-24zm-96 144c0 4.42-3.58 8-8 8h-8c-8.84 0-16 7.16-16 16v32c0 8.84 7.16 16 16 16h8c4.42 0 8 3.58 8 8v16c0 4.42-3.58 8-8 8h-8c-26.51 0-48-21.49-48-48v-32c0-26.51 21.49-48 48-48h8c4.42 0 8 3.58 8 8v16zm44.27 104H160c-4.42 0-8-3.58-8-8v-16c0-4.42 3.58-8 8-8h12.27c5.95 0 10.41-3.5 10.41-6.62 0-1.3-.75-2.66-2.12-3.84l-21.89-18.77c-8.47-7.22-13.33-17.48-13.33-28.14 0-21.3 19.02-38.62 42.41-38.62H200c4.42 0 8 3.58 8 8v16c0 4.42-3.58 8-8 8h-12.27c-5.95 0-10.41 3.5-10.41 6.62 0 1.3.75 2.66 2.12 3.84l21.89 18.77c8.47 7.22 13.33 17.48 13.33 28.14.01 21.29-19 38.62-42.39 38.62zM256 264v20.8c0 20.27 5.7 40.17 16 56.88 10.3-16.7 16-36.61 16-56.88V264c0-4.42 3.58-8 8-8h16c4.42 0 8 3.58 8 8v20.8c0 35.48-12.88 68.89-36.28 94.09-3.02 3.25-7.27 5.11-11.72 5.11s-8.7-1.86-11.72-5.11C236.88 353.69 224 320.28 224 284.8V264c0-4.42 3.58-8 8-8h16c4.42 0 8 3.58 8 8zm121-159L279.1 7c-4.5-4.5-10.6-7-17-7H256v128h128v-6.1c0-6.3-2.5-12.4-7-16.9z" fill="#226f94"/></svg>
<svg style="left:934.3px;top:595.5px" width="19" height="25" viewBox="0 0 384 512"><path d="M181.9 256.1c-5-16-4.9-46.9-2-46.9 8.4 0 7.6 36.9 2 46.9zm-1.7 47.2c-7.7 20.2-17.3 43.3-28.4 62.7 18.3-7 39-17.2 62.9-21.9-12.7-9.6-24.9-23.4-34.5-40.8zM86.1 428.1c0 .8 13.2-5.4 34.9-40.2-6.7 6.3-29.1 24.5-34.9 40.2zM248 160h136v328c0 13.3-10.7 24-24 24H24c-13.3 0-24-10.7-24-24V24C0 10.7 10.7 0 24 0h200v136c0 13.2 10.8 24 24 24zm-8 171.8c-20-12.2-33.3-29-42.7-53.8 4.5-18.5 11.6-46.6 6.2-64.2-4.7-29.4-42.4-26.5-47.8-6.8-5 18.3-.4 44.1 8.1 77-11.6 27.6-28.7 64.6-40.8 85.8-.1 0-.1.1-.2.1-27.1 13.9-73.6 44.5-54.5 68 5.6 6.9 16 10 21.5 10 17.9 0 35.7-18 61.1-61.8 25.8-8.5 54.1-19.1 79-23.2 21.7 11.8 47.1 19.5 64 19.5 29.2 0 31.2-32 19.7-43.4-13.9-13.6-54.3-9.7-73.6-7.2zM377 105L279 7c-4.5-4.5-10.6-7-17-7h-6v128h128v-6.1c0-6.3-2.5-12.4-7-16.9zm-74.1 255.3c4.1-2.7-2.5-11.9-42.8-9 37.1 15.8 42.8 9 42.8 9z" fill="#f04c4c"/></svg>
<svg style="left:966.6px;top:595.5px" width="19" height="25" viewBox="0 0 384 512"><path d="M224 136V0H24C10.7 0 0 10.7 0 24v464c0 13.3 10.7 24 24 24h336c13.3 0 24-10.7 24-24V160H248c-13.2 0-24-10.8-24-24zm60.1 106.5L224 336l60.1 93.5c5.1 8-.6 18.5-10.1 18.5h-34.9c-4.4 0-8.5-2.4-10.6-6.3C208.9 405.5 192 373 192 373c-6.4 14.8-10 20-36.6 68.8-2.1 3.9-6.1 6.3-10.5 6.3H110c-9.5 0-15.2-10.5-10.1-18.5l60.3-93.5-60.3-93.5c-5.2-8 .6-18.5 10.1-18.5h34.8c4.4 0 8.5 2.4 10.6 6.3 26.1 48.8 20 33.6 36.6 68.5 0 0 6.1-11.7 36.6-68.5 2.1-3.9 6.2-6.3 10.6-6.3H274c9.5-.1 15.2 10.4 10.1 18.4zM384 121.9v6.1H256V0h6.1c6.4 0 12.5 2.5 17 7l97.9 98c4.5 4.5 7 10.6 7 16.9z" fill="#12a06e"/></svg>
<div class="tx" style="left:884px;width:120px;text-align:center;top:629.5px;font-size:12.3px;line-height:14px;color:#1f2937">Conjunto de datos</div>
<svg style="left:1033px;top:595.5px" width="19" height="25" viewBox="0 0 384 512"><path d="M224 136V0H24C10.7 0 0 10.7 0 24v464c0 13.3 10.7 24 24 24h336c13.3 0 24-10.7 24-24V160H248c-13.2 0-24-10.8-24-24zm-96 144c0 4.42-3.58 8-8 8h-8c-8.84 0-16 7.16-16 16v32c0 8.84 7.16 16 16 16h8c4.42 0 8 3.58 8 8v16c0 4.42-3.58 8-8 8h-8c-26.51 0-48-21.49-48-48v-32c0-26.51 21.49-48 48-48h8c4.42 0 8 3.58 8 8v16zm44.27 104H160c-4.42 0-8-3.58-8-8v-16c0-4.42 3.58-8 8-8h12.27c5.95 0 10.41-3.5 10.41-6.62 0-1.3-.75-2.66-2.12-3.84l-21.89-18.77c-8.47-7.22-13.33-17.48-13.33-28.14 0-21.3 19.02-38.62 42.41-38.62H200c4.42 0 8 3.58 8 8v16c0 4.42-3.58 8-8 8h-12.27c-5.95 0-10.41 3.5-10.41 6.62 0 1.3.75 2.66 2.12 3.84l21.89 18.77c8.47 7.22 13.33 17.48 13.33 28.14.01 21.29-19 38.62-42.39 38.62zM256 264v20.8c0 20.27 5.7 40.17 16 56.88 10.3-16.7 16-36.61 16-56.88V264c0-4.42 3.58-8 8-8h16c4.42 0 8 3.58 8 8v20.8c0 35.48-12.88 68.89-36.28 94.09-3.02 3.25-7.27 5.11-11.72 5.11s-8.7-1.86-11.72-5.11C236.88 353.69 224 320.28 224 284.8V264c0-4.42 3.58-8 8-8h16c4.42 0 8 3.58 8 8zm121-159L279.1 7c-4.5-4.5-10.6-7-17-7H256v128h128v-6.1c0-6.3-2.5-12.4-7-16.9z" fill="#226f94"/></svg>
<svg style="left:1064.3px;top:595.5px" width="19" height="25" viewBox="0 0 384 512"><path d="M181.9 256.1c-5-16-4.9-46.9-2-46.9 8.4 0 7.6 36.9 2 46.9zm-1.7 47.2c-7.7 20.2-17.3 43.3-28.4 62.7 18.3-7 39-17.2 62.9-21.9-12.7-9.6-24.9-23.4-34.5-40.8zM86.1 428.1c0 .8 13.2-5.4 34.9-40.2-6.7 6.3-29.1 24.5-34.9 40.2zM248 160h136v328c0 13.3-10.7 24-24 24H24c-13.3 0-24-10.7-24-24V24C0 10.7 10.7 0 24 0h200v136c0 13.2 10.8 24 24 24zm-8 171.8c-20-12.2-33.3-29-42.7-53.8 4.5-18.5 11.6-46.6 6.2-64.2-4.7-29.4-42.4-26.5-47.8-6.8-5 18.3-.4 44.1 8.1 77-11.6 27.6-28.7 64.6-40.8 85.8-.1 0-.1.1-.2.1-27.1 13.9-73.6 44.5-54.5 68 5.6 6.9 16 10 21.5 10 17.9 0 35.7-18 61.1-61.8 25.8-8.5 54.1-19.1 79-23.2 21.7 11.8 47.1 19.5 64 19.5 29.2 0 31.2-32 19.7-43.4-13.9-13.6-54.3-9.7-73.6-7.2zM377 105L279 7c-4.5-4.5-10.6-7-17-7h-6v128h128v-6.1c0-6.3-2.5-12.4-7-16.9zm-74.1 255.3c4.1-2.7-2.5-11.9-42.8-9 37.1 15.8 42.8 9 42.8 9z" fill="#f04c4c"/></svg>
<svg style="left:1096.6px;top:595.5px" width="19" height="25" viewBox="0 0 384 512"><path d="M224 136V0H24C10.7 0 0 10.7 0 24v464c0 13.3 10.7 24 24 24h336c13.3 0 24-10.7 24-24V160H248c-13.2 0-24-10.8-24-24zm60.1 106.5L224 336l60.1 93.5c5.1 8-.6 18.5-10.1 18.5h-34.9c-4.4 0-8.5-2.4-10.6-6.3C208.9 405.5 192 373 192 373c-6.4 14.8-10 20-36.6 68.8-2.1 3.9-6.1 6.3-10.5 6.3H110c-9.5 0-15.2-10.5-10.1-18.5l60.3-93.5-60.3-93.5c-5.2-8 .6-18.5 10.1-18.5h34.8c4.4 0 8.5 2.4 10.6 6.3 26.1 48.8 20 33.6 36.6 68.5 0 0 6.1-11.7 36.6-68.5 2.1-3.9 6.2-6.3 10.6-6.3H274c9.5-.1 15.2 10.4 10.1 18.4zM384 121.9v6.1H256V0h6.1c6.4 0 12.5 2.5 17 7l97.9 98c4.5 4.5 7 10.6 7 16.9z" fill="#12a06e"/></svg>
<div class="tx" style="left:1014px;width:120px;text-align:center;top:629.5px;font-size:12.3px;line-height:14px;color:#1f2937">Metadatos</div>
<svg style="left:1162px;top:595.5px" width="19" height="25" viewBox="0 0 384 512"><path d="M224 136V0H24C10.7 0 0 10.7 0 24v464c0 13.3 10.7 24 24 24h336c13.3 0 24-10.7 24-24V160H248c-13.2 0-24-10.8-24-24zm-96 144c0 4.42-3.58 8-8 8h-8c-8.84 0-16 7.16-16 16v32c0 8.84 7.16 16 16 16h8c4.42 0 8 3.58 8 8v16c0 4.42-3.58 8-8 8h-8c-26.51 0-48-21.49-48-48v-32c0-26.51 21.49-48 48-48h8c4.42 0 8 3.58 8 8v16zm44.27 104H160c-4.42 0-8-3.58-8-8v-16c0-4.42 3.58-8 8-8h12.27c5.95 0 10.41-3.5 10.41-6.62 0-1.3-.75-2.66-2.12-3.84l-21.89-18.77c-8.47-7.22-13.33-17.48-13.33-28.14 0-21.3 19.02-38.62 42.41-38.62H200c4.42 0 8 3.58 8 8v16c0 4.42-3.58 8-8 8h-12.27c-5.95 0-10.41 3.5-10.41 6.62 0 1.3.75 2.66 2.12 3.84l21.89 18.77c8.47 7.22 13.33 17.48 13.33 28.14.01 21.29-19 38.62-42.39 38.62zM256 264v20.8c0 20.27 5.7 40.17 16 56.88 10.3-16.7 16-36.61 16-56.88V264c0-4.42 3.58-8 8-8h16c4.42 0 8 3.58 8 8v20.8c0 35.48-12.88 68.89-36.28 94.09-3.02 3.25-7.27 5.11-11.72 5.11s-8.7-1.86-11.72-5.11C236.88 353.69 224 320.28 224 284.8V264c0-4.42 3.58-8 8-8h16c4.42 0 8 3.58 8 8zm121-159L279.1 7c-4.5-4.5-10.6-7-17-7H256v128h128v-6.1c0-6.3-2.5-12.4-7-16.9z" fill="#226f94"/></svg>
<svg style="left:1193.3px;top:595.5px" width="19" height="25" viewBox="0 0 384 512"><path d="M181.9 256.1c-5-16-4.9-46.9-2-46.9 8.4 0 7.6 36.9 2 46.9zm-1.7 47.2c-7.7 20.2-17.3 43.3-28.4 62.7 18.3-7 39-17.2 62.9-21.9-12.7-9.6-24.9-23.4-34.5-40.8zM86.1 428.1c0 .8 13.2-5.4 34.9-40.2-6.7 6.3-29.1 24.5-34.9 40.2zM248 160h136v328c0 13.3-10.7 24-24 24H24c-13.3 0-24-10.7-24-24V24C0 10.7 10.7 0 24 0h200v136c0 13.2 10.8 24 24 24zm-8 171.8c-20-12.2-33.3-29-42.7-53.8 4.5-18.5 11.6-46.6 6.2-64.2-4.7-29.4-42.4-26.5-47.8-6.8-5 18.3-.4 44.1 8.1 77-11.6 27.6-28.7 64.6-40.8 85.8-.1 0-.1.1-.2.1-27.1 13.9-73.6 44.5-54.5 68 5.6 6.9 16 10 21.5 10 17.9 0 35.7-18 61.1-61.8 25.8-8.5 54.1-19.1 79-23.2 21.7 11.8 47.1 19.5 64 19.5 29.2 0 31.2-32 19.7-43.4-13.9-13.6-54.3-9.7-73.6-7.2zM377 105L279 7c-4.5-4.5-10.6-7-17-7h-6v128h128v-6.1c0-6.3-2.5-12.4-7-16.9zm-74.1 255.3c4.1-2.7-2.5-11.9-42.8-9 37.1 15.8 42.8 9 42.8 9z" fill="#f04c4c"/></svg>
<svg style="left:1225.6px;top:595.5px" width="19" height="25" viewBox="0 0 384 512"><path d="M224 136V0H24C10.7 0 0 10.7 0 24v464c0 13.3 10.7 24 24 24h336c13.3 0 24-10.7 24-24V160H248c-13.2 0-24-10.8-24-24zm60.1 106.5L224 336l60.1 93.5c5.1 8-.6 18.5-10.1 18.5h-34.9c-4.4 0-8.5-2.4-10.6-6.3C208.9 405.5 192 373 192 373c-6.4 14.8-10 20-36.6 68.8-2.1 3.9-6.1 6.3-10.5 6.3H110c-9.5 0-15.2-10.5-10.1-18.5l60.3-93.5-60.3-93.5c-5.2-8 .6-18.5 10.1-18.5h34.8c4.4 0 8.5 2.4 10.6 6.3 26.1 48.8 20 33.6 36.6 68.5 0 0 6.1-11.7 36.6-68.5 2.1-3.9 6.2-6.3 10.6-6.3H274c9.5-.1 15.2 10.4 10.1 18.4zM384 121.9v6.1H256V0h6.1c6.4 0 12.5 2.5 17 7l97.9 98c4.5 4.5 7 10.6 7 16.9z" fill="#12a06e"/></svg>
<div class="tx" style="left:1143px;width:120px;text-align:center;top:629.5px;font-size:12.3px;line-height:14px;color:#1f2937">Diccionario</div>
<div class="abs" style="left:335px;top:713px;width:930px;height:1px;background:#e8e8ec"></div>
<div class="abs" style="left:801px;top:652px;width:1px;height:61px;background:#e8e8ec"></div>
<div class="abs" style="left:882px;top:652px;width:1px;height:61px;background:#e8e8ec"></div>
<div class="tx" style="left:342px;top:674.0px;font-size:14px;line-height:16px;color:#1f2937;letter-spacing:0.120px">8 Procesos de contratación publica</div>
<div class="tx" style="left:811px;top:674.0px;font-size:14px;line-height:16px;color:#1f2937">12/1/2026</div>
<svg style="left:903px;top:658.0px" width="19" height="25" viewBox="0 0 384 512"><path d="M224 136V0H24C10.7 0 0 10.7 0 24v464c0 13.3 10.7 24 24 24h336c13.3 0 24-10.7 24-24V160H248c-13.2 0-24-10.8-24-24zm-96 144c0 4.42-3.58 8-8 8h-8c-8.84 0-16 7.16-16 16v32c0 8.84 7.16 16 16 16h8c4.42 0 8 3.58 8 8v16c0 4.42-3.58 8-8 8h-8c-26.51 0-48-21.49-48-48v-32c0-26.51 21.49-48 48-48h8c4.42 0 8 3.58 8 8v16zm44.27 104H160c-4.42 0-8-3.58-8-8v-16c0-4.42 3.58-8 8-8h12.27c5.95 0 10.41-3.5 10.41-6.62 0-1.3-.75-2.66-2.12-3.84l-21.89-18.77c-8.47-7.22-13.33-17.48-13.33-28.14 0-21.3 19.02-38.62 42.41-38.62H200c4.42 0 8 3.58 8 8v16c0 4.42-3.58 8-8 8h-12.27c-5.95 0-10.41 3.5-10.41 6.62 0 1.3.75 2.66 2.12 3.84l21.89 18.77c8.47 7.22 13.33 17.48 13.33 28.14.01 21.29-19 38.62-42.39 38.62zM256 264v20.8c0 20.27 5.7 40.17 16 56.88 10.3-16.7 16-36.61 16-56.88V264c0-4.42 3.58-8 8-8h16c4.42 0 8 3.58 8 8v20.8c0 35.48-12.88 68.89-36.28 94.09-3.02 3.25-7.27 5.11-11.72 5.11s-8.7-1.86-11.72-5.11C236.88 353.69 224 320.28 224 284.8V264c0-4.42 3.58-8 8-8h16c4.42 0 8 3.58 8 8zm121-159L279.1 7c-4.5-4.5-10.6-7-17-7H256v128h128v-6.1c0-6.3-2.5-12.4-7-16.9z" fill="#226f94"/></svg>
<svg style="left:934.3px;top:658.0px" width="19" height="25" viewBox="0 0 384 512"><path d="M181.9 256.1c-5-16-4.9-46.9-2-46.9 8.4 0 7.6 36.9 2 46.9zm-1.7 47.2c-7.7 20.2-17.3 43.3-28.4 62.7 18.3-7 39-17.2 62.9-21.9-12.7-9.6-24.9-23.4-34.5-40.8zM86.1 428.1c0 .8 13.2-5.4 34.9-40.2-6.7 6.3-29.1 24.5-34.9 40.2zM248 160h136v328c0 13.3-10.7 24-24 24H24c-13.3 0-24-10.7-24-24V24C0 10.7 10.7 0 24 0h200v136c0 13.2 10.8 24 24 24zm-8 171.8c-20-12.2-33.3-29-42.7-53.8 4.5-18.5 11.6-46.6 6.2-64.2-4.7-29.4-42.4-26.5-47.8-6.8-5 18.3-.4 44.1 8.1 77-11.6 27.6-28.7 64.6-40.8 85.8-.1 0-.1.1-.2.1-27.1 13.9-73.6 44.5-54.5 68 5.6 6.9 16 10 21.5 10 17.9 0 35.7-18 61.1-61.8 25.8-8.5 54.1-19.1 79-23.2 21.7 11.8 47.1 19.5 64 19.5 29.2 0 31.2-32 19.7-43.4-13.9-13.6-54.3-9.7-73.6-7.2zM377 105L279 7c-4.5-4.5-10.6-7-17-7h-6v128h128v-6.1c0-6.3-2.5-12.4-7-16.9zm-74.1 255.3c4.1-2.7-2.5-11.9-42.8-9 37.1 15.8 42.8 9 42.8 9z" fill="#f04c4c"/></svg>
<svg style="left:966.6px;top:658.0px" width="19" height="25" viewBox="0 0 384 512"><path d="M224 136V0H24C10.7 0 0 10.7 0 24v464c0 13.3 10.7 24 24 24h336c13.3 0 24-10.7 24-24V160H248c-13.2 0-24-10.8-24-24zm60.1 106.5L224 336l60.1 93.5c5.1 8-.6 18.5-10.1 18.5h-34.9c-4.4 0-8.5-2.4-10.6-6.3C208.9 405.5 192 373 192 373c-6.4 14.8-10 20-36.6 68.8-2.1 3.9-6.1 6.3-10.5 6.3H110c-9.5 0-15.2-10.5-10.1-18.5l60.3-93.5-60.3-93.5c-5.2-8 .6-18.5 10.1-18.5h34.8c4.4 0 8.5 2.4 10.6 6.3 26.1 48.8 20 33.6 36.6 68.5 0 0 6.1-11.7 36.6-68.5 2.1-3.9 6.2-6.3 10.6-6.3H274c9.5-.1 15.2 10.4 10.1 18.4zM384 121.9v6.1H256V0h6.1c6.4 0 12.5 2.5 17 7l97.9 98c4.5 4.5 7 10.6 7 16.9z" fill="#12a06e"/></svg>
<div class="tx" style="left:884px;width:120px;text-align:center;top:692.0px;font-size:12.3px;line-height:14px;color:#1f2937">Conjunto de datos</div>
<svg style="left:1033px;top:658.0px" width="19" height="25" viewBox="0 0 384 512"><path d="M224 136V0H24C10.7 0 0 10.7 0 24v464c0 13.3 10.7 24 24 24h336c13.3 0 24-10.7 24-24V160H248c-13.2 0-24-10.8-24-24zm-96 144c0 4.42-3.58 8-8 8h-8c-8.84 0-16 7.16-16 16v32c0 8.84 7.16 16 16 16h8c4.42 0 8 3.58 8 8v16c0 4.42-3.58 8-8 8h-8c-26.51 0-48-21.49-48-48v-32c0-26.51 21.49-48 48-48h8c4.42 0 8 3.58 8 8v16zm44.27 104H160c-4.42 0-8-3.58-8-8v-16c0-4.42 3.58-8 8-8h12.27c5.95 0 10.41-3.5 10.41-6.62 0-1.3-.75-2.66-2.12-3.84l-21.89-18.77c-8.47-7.22-13.33-17.48-13.33-28.14 0-21.3 19.02-38.62 42.41-38.62H200c4.42 0 8 3.58 8 8v16c0 4.42-3.58 8-8 8h-12.27c-5.95 0-10.41 3.5-10.41 6.62 0 1.3.75 2.66 2.12 3.84l21.89 18.77c8.47 7.22 13.33 17.48 13.33 28.14.01 21.29-19 38.62-42.39 38.62zM256 264v20.8c0 20.27 5.7 40.17 16 56.88 10.3-16.7 16-36.61 16-56.88V264c0-4.42 3.58-8 8-8h16c4.42 0 8 3.58 8 8v20.8c0 35.48-12.88 68.89-36.28 94.09-3.02 3.25-7.27 5.11-11.72 5.11s-8.7-1.86-11.72-5.11C236.88 353.69 224 320.28 224 284.8V264c0-4.42 3.58-8 8-8h16c4.42 0 8 3.58 8 8zm121-159L279.1 7c-4.5-4.5-10.6-7-17-7H256v128h128v-6.1c0-6.3-2.5-12.4-7-16.9z" fill="#226f94"/></svg>
<svg style="left:1064.3px;top:658.0px" width="19" height="25" viewBox="0 0 384 512"><path d="M181.9 256.1c-5-16-4.9-46.9-2-46.9 8.4 0 7.6 36.9 2 46.9zm-1.7 47.2c-7.7 20.2-17.3 43.3-28.4 62.7 18.3-7 39-17.2 62.9-21.9-12.7-9.6-24.9-23.4-34.5-40.8zM86.1 428.1c0 .8 13.2-5.4 34.9-40.2-6.7 6.3-29.1 24.5-34.9 40.2zM248 160h136v328c0 13.3-10.7 24-24 24H24c-13.3 0-24-10.7-24-24V24C0 10.7 10.7 0 24 0h200v136c0 13.2 10.8 24 24 24zm-8 171.8c-20-12.2-33.3-29-42.7-53.8 4.5-18.5 11.6-46.6 6.2-64.2-4.7-29.4-42.4-26.5-47.8-6.8-5 18.3-.4 44.1 8.1 77-11.6 27.6-28.7 64.6-40.8 85.8-.1 0-.1.1-.2.1-27.1 13.9-73.6 44.5-54.5 68 5.6 6.9 16 10 21.5 10 17.9 0 35.7-18 61.1-61.8 25.8-8.5 54.1-19.1 79-23.2 21.7 11.8 47.1 19.5 64 19.5 29.2 0 31.2-32 19.7-43.4-13.9-13.6-54.3-9.7-73.6-7.2zM377 105L279 7c-4.5-4.5-10.6-7-17-7h-6v128h128v-6.1c0-6.3-2.5-12.4-7-16.9zm-74.1 255.3c4.1-2.7-2.5-11.9-42.8-9 37.1 15.8 42.8 9 42.8 9z" fill="#f04c4c"/></svg>
<svg style="left:1096.6px;top:658.0px" width="19" height="25" viewBox="0 0 384 512"><path d="M224 136V0H24C10.7 0 0 10.7 0 24v464c0 13.3 10.7 24 24 24h336c13.3 0 24-10.7 24-24V160H248c-13.2 0-24-10.8-24-24zm60.1 106.5L224 336l60.1 93.5c5.1 8-.6 18.5-10.1 18.5h-34.9c-4.4 0-8.5-2.4-10.6-6.3C208.9 405.5 192 373 192 373c-6.4 14.8-10 20-36.6 68.8-2.1 3.9-6.1 6.3-10.5 6.3H110c-9.5 0-15.2-10.5-10.1-18.5l60.3-93.5-60.3-93.5c-5.2-8 .6-18.5 10.1-18.5h34.8c4.4 0 8.5 2.4 10.6 6.3 26.1 48.8 20 33.6 36.6 68.5 0 0 6.1-11.7 36.6-68.5 2.1-3.9 6.2-6.3 10.6-6.3H274c9.5-.1 15.2 10.4 10.1 18.4zM384 121.9v6.1H256V0h6.1c6.4 0 12.5 2.5 17 7l97.9 98c4.5 4.5 7 10.6 7 16.9z" fill="#12a06e"/></svg>
<div class="tx" style="left:1014px;width:120px;text-align:center;top:692.0px;font-size:12.3px;line-height:14px;color:#1f2937">Metadatos</div>
<svg style="left:1162px;top:658.0px" width="19" height="25" viewBox="0 0 384 512"><path d="M224 136V0H24C10.7 0 0 10.7 0 24v464c0 13.3 10.7 24 24 24h336c13.3 0 24-10.7 24-24V160H248c-13.2 0-24-10.8-24-24zm-96 144c0 4.42-3.58 8-8 8h-8c-8.84 0-16 7.16-16 16v32c0 8.84 7.16 16 16 16h8c4.42 0 8 3.58 8 8v16c0 4.42-3.58 8-8 8h-8c-26.51 0-48-21.49-48-48v-32c0-26.51 21.49-48 48-48h8c4.42 0 8 3.58 8 8v16zm44.27 104H160c-4.42 0-8-3.58-8-8v-16c0-4.42 3.58-8 8-8h12.27c5.95 0 10.41-3.5 10.41-6.62 0-1.3-.75-2.66-2.12-3.84l-21.89-18.77c-8.47-7.22-13.33-17.48-13.33-28.14 0-21.3 19.02-38.62 42.41-38.62H200c4.42 0 8 3.58 8 8v16c0 4.42-3.58 8-8 8h-12.27c-5.95 0-10.41 3.5-10.41 6.62 0 1.3.75 2.66 2.12 3.84l21.89 18.77c8.47 7.22 13.33 17.48 13.33 28.14.01 21.29-19 38.62-42.39 38.62zM256 264v20.8c0 20.27 5.7 40.17 16 56.88 10.3-16.7 16-36.61 16-56.88V264c0-4.42 3.58-8 8-8h16c4.42 0 8 3.58 8 8v20.8c0 35.48-12.88 68.89-36.28 94.09-3.02 3.25-7.27 5.11-11.72 5.11s-8.7-1.86-11.72-5.11C236.88 353.69 224 320.28 224 284.8V264c0-4.42 3.58-8 8-8h16c4.42 0 8 3.58 8 8zm121-159L279.1 7c-4.5-4.5-10.6-7-17-7H256v128h128v-6.1c0-6.3-2.5-12.4-7-16.9z" fill="#226f94"/></svg>
<svg style="left:1193.3px;top:658.0px" width="19" height="25" viewBox="0 0 384 512"><path d="M181.9 256.1c-5-16-4.9-46.9-2-46.9 8.4 0 7.6 36.9 2 46.9zm-1.7 47.2c-7.7 20.2-17.3 43.3-28.4 62.7 18.3-7 39-17.2 62.9-21.9-12.7-9.6-24.9-23.4-34.5-40.8zM86.1 428.1c0 .8 13.2-5.4 34.9-40.2-6.7 6.3-29.1 24.5-34.9 40.2zM248 160h136v328c0 13.3-10.7 24-24 24H24c-13.3 0-24-10.7-24-24V24C0 10.7 10.7 0 24 0h200v136c0 13.2 10.8 24 24 24zm-8 171.8c-20-12.2-33.3-29-42.7-53.8 4.5-18.5 11.6-46.6 6.2-64.2-4.7-29.4-42.4-26.5-47.8-6.8-5 18.3-.4 44.1 8.1 77-11.6 27.6-28.7 64.6-40.8 85.8-.1 0-.1.1-.2.1-27.1 13.9-73.6 44.5-54.5 68 5.6 6.9 16 10 21.5 10 17.9 0 35.7-18 61.1-61.8 25.8-8.5 54.1-19.1 79-23.2 21.7 11.8 47.1 19.5 64 19.5 29.2 0 31.2-32 19.7-43.4-13.9-13.6-54.3-9.7-73.6-7.2zM377 105L279 7c-4.5-4.5-10.6-7-17-7h-6v128h128v-6.1c0-6.3-2.5-12.4-7-16.9zm-74.1 255.3c4.1-2.7-2.5-11.9-42.8-9 37.1 15.8 42.8 9 42.8 9z" fill="#f04c4c"/></svg>
<svg style="left:1225.6px;top:658.0px" width="19" height="25" viewBox="0 0 384 512"><path d="M224 136V0H24C10.7 0 0 10.7 0 24v464c0 13.3 10.7 24 24 24h336c13.3 0 24-10.7 24-24V160H248c-13.2 0-24-10.8-24-24zm60.1 106.5L224 336l60.1 93.5c5.1 8-.6 18.5-10.1 18.5h-34.9c-4.4 0-8.5-2.4-10.6-6.3C208.9 405.5 192 373 192 373c-6.4 14.8-10 20-36.6 68.8-2.1 3.9-6.1 6.3-10.5 6.3H110c-9.5 0-15.2-10.5-10.1-18.5l60.3-93.5-60.3-93.5c-5.2-8 .6-18.5 10.1-18.5h34.8c4.4 0 8.5 2.4 10.6 6.3 26.1 48.8 20 33.6 36.6 68.5 0 0 6.1-11.7 36.6-68.5 2.1-3.9 6.2-6.3 10.6-6.3H274c9.5-.1 15.2 10.4 10.1 18.4zM384 121.9v6.1H256V0h6.1c6.4 0 12.5 2.5 17 7l97.9 98c4.5 4.5 7 10.6 7 16.9z" fill="#12a06e"/></svg>
<div class="tx" style="left:1143px;width:120px;text-align:center;top:692.0px;font-size:12.3px;line-height:14px;color:#1f2937">Diccionario</div>
<div class="abs" style="left:801px;top:714px;width:1px;height:20px;background:#e8e8ec"></div>
<div class="abs" style="left:882px;top:714px;width:1px;height:20px;background:#e8e8ec"></div>
<svg style="left:903px;top:720.5px" width="19" height="25" viewBox="0 0 384 512"><path d="M224 136V0H24C10.7 0 0 10.7 0 24v464c0 13.3 10.7 24 24 24h336c13.3 0 24-10.7 24-24V160H248c-13.2 0-24-10.8-24-24zm-96 144c0 4.42-3.58 8-8 8h-8c-8.84 0-16 7.16-16 16v32c0 8.84 7.16 16 16 16h8c4.42 0 8 3.58 8 8v16c0 4.42-3.58 8-8 8h-8c-26.51 0-48-21.49-48-48v-32c0-26.51 21.49-48 48-48h8c4.42 0 8 3.58 8 8v16zm44.27 104H160c-4.42 0-8-3.58-8-8v-16c0-4.42 3.58-8 8-8h12.27c5.95 0 10.41-3.5 10.41-6.62 0-1.3-.75-2.66-2.12-3.84l-21.89-18.77c-8.47-7.22-13.33-17.48-13.33-28.14 0-21.3 19.02-38.62 42.41-38.62H200c4.42 0 8 3.58 8 8v16c0 4.42-3.58 8-8 8h-12.27c-5.95 0-10.41 3.5-10.41 6.62 0 1.3.75 2.66 2.12 3.84l21.89 18.77c8.47 7.22 13.33 17.48 13.33 28.14.01 21.29-19 38.62-42.39 38.62zM256 264v20.8c0 20.27 5.7 40.17 16 56.88 10.3-16.7 16-36.61 16-56.88V264c0-4.42 3.58-8 8-8h16c4.42 0 8 3.58 8 8v20.8c0 35.48-12.88 68.89-36.28 94.09-3.02 3.25-7.27 5.11-11.72 5.11s-8.7-1.86-11.72-5.11C236.88 353.69 224 320.28 224 284.8V264c0-4.42 3.58-8 8-8h16c4.42 0 8 3.58 8 8zm121-159L279.1 7c-4.5-4.5-10.6-7-17-7H256v128h128v-6.1c0-6.3-2.5-12.4-7-16.9z" fill="#226f94"/></svg>
<svg style="left:934.3px;top:720.5px" width="19" height="25" viewBox="0 0 384 512"><path d="M181.9 256.1c-5-16-4.9-46.9-2-46.9 8.4 0 7.6 36.9 2 46.9zm-1.7 47.2c-7.7 20.2-17.3 43.3-28.4 62.7 18.3-7 39-17.2 62.9-21.9-12.7-9.6-24.9-23.4-34.5-40.8zM86.1 428.1c0 .8 13.2-5.4 34.9-40.2-6.7 6.3-29.1 24.5-34.9 40.2zM248 160h136v328c0 13.3-10.7 24-24 24H24c-13.3 0-24-10.7-24-24V24C0 10.7 10.7 0 24 0h200v136c0 13.2 10.8 24 24 24zm-8 171.8c-20-12.2-33.3-29-42.7-53.8 4.5-18.5 11.6-46.6 6.2-64.2-4.7-29.4-42.4-26.5-47.8-6.8-5 18.3-.4 44.1 8.1 77-11.6 27.6-28.7 64.6-40.8 85.8-.1 0-.1.1-.2.1-27.1 13.9-73.6 44.5-54.5 68 5.6 6.9 16 10 21.5 10 17.9 0 35.7-18 61.1-61.8 25.8-8.5 54.1-19.1 79-23.2 21.7 11.8 47.1 19.5 64 19.5 29.2 0 31.2-32 19.7-43.4-13.9-13.6-54.3-9.7-73.6-7.2zM377 105L279 7c-4.5-4.5-10.6-7-17-7h-6v128h128v-6.1c0-6.3-2.5-12.4-7-16.9zm-74.1 255.3c4.1-2.7-2.5-11.9-42.8-9 37.1 15.8 42.8 9 42.8 9z" fill="#f04c4c"/></svg>
<svg style="left:966.6px;top:720.5px" width="19" height="25" viewBox="0 0 384 512"><path d="M224 136V0H24C10.7 0 0 10.7 0 24v464c0 13.3 10.7 24 24 24h336c13.3 0 24-10.7 24-24V160H248c-13.2 0-24-10.8-24-24zm60.1 106.5L224 336l60.1 93.5c5.1 8-.6 18.5-10.1 18.5h-34.9c-4.4 0-8.5-2.4-10.6-6.3C208.9 405.5 192 373 192 373c-6.4 14.8-10 20-36.6 68.8-2.1 3.9-6.1 6.3-10.5 6.3H110c-9.5 0-15.2-10.5-10.1-18.5l60.3-93.5-60.3-93.5c-5.2-8 .6-18.5 10.1-18.5h34.8c4.4 0 8.5 2.4 10.6 6.3 26.1 48.8 20 33.6 36.6 68.5 0 0 6.1-11.7 36.6-68.5 2.1-3.9 6.2-6.3 10.6-6.3H274c9.5-.1 15.2 10.4 10.1 18.4zM384 121.9v6.1H256V0h6.1c6.4 0 12.5 2.5 17 7l97.9 98c4.5 4.5 7 10.6 7 16.9z" fill="#12a06e"/></svg>
<div class="tx" style="left:884px;width:120px;text-align:center;top:754.5px;font-size:12.3px;line-height:14px;color:#1f2937">Conjunto de datos</div>
<svg style="left:1033px;top:720.5px" width="19" height="25" viewBox="0 0 384 512"><path d="M224 136V0H24C10.7 0 0 10.7 0 24v464c0 13.3 10.7 24 24 24h336c13.3 0 24-10.7 24-24V160H248c-13.2 0-24-10.8-24-24zm-96 144c0 4.42-3.58 8-8 8h-8c-8.84 0-16 7.16-16 16v32c0 8.84 7.16 16 16 16h8c4.42 0 8 3.58 8 8v16c0 4.42-3.58 8-8 8h-8c-26.51 0-48-21.49-48-48v-32c0-26.51 21.49-48 48-48h8c4.42 0 8 3.58 8 8v16zm44.27 104H160c-4.42 0-8-3.58-8-8v-16c0-4.42 3.58-8 8-8h12.27c5.95 0 10.41-3.5 10.41-6.62 0-1.3-.75-2.66-2.12-3.84l-21.89-18.77c-8.47-7.22-13.33-17.48-13.33-28.14 0-21.3 19.02-38.62 42.41-38.62H200c4.42 0 8 3.58 8 8v16c0 4.42-3.58 8-8 8h-12.27c-5.95 0-10.41 3.5-10.41 6.62 0 1.3.75 2.66 2.12 3.84l21.89 18.77c8.47 7.22 13.33 17.48 13.33 28.14.01 21.29-19 38.62-42.39 38.62zM256 264v20.8c0 20.27 5.7 40.17 16 56.88 10.3-16.7 16-36.61 16-56.88V264c0-4.42 3.58-8 8-8h16c4.42 0 8 3.58 8 8v20.8c0 35.48-12.88 68.89-36.28 94.09-3.02 3.25-7.27 5.11-11.72 5.11s-8.7-1.86-11.72-5.11C236.88 353.69 224 320.28 224 284.8V264c0-4.42 3.58-8 8-8h16c4.42 0 8 3.58 8 8zm121-159L279.1 7c-4.5-4.5-10.6-7-17-7H256v128h128v-6.1c0-6.3-2.5-12.4-7-16.9z" fill="#226f94"/></svg>
<svg style="left:1064.3px;top:720.5px" width="19" height="25" viewBox="0 0 384 512"><path d="M181.9 256.1c-5-16-4.9-46.9-2-46.9 8.4 0 7.6 36.9 2 46.9zm-1.7 47.2c-7.7 20.2-17.3 43.3-28.4 62.7 18.3-7 39-17.2 62.9-21.9-12.7-9.6-24.9-23.4-34.5-40.8zM86.1 428.1c0 .8 13.2-5.4 34.9-40.2-6.7 6.3-29.1 24.5-34.9 40.2zM248 160h136v328c0 13.3-10.7 24-24 24H24c-13.3 0-24-10.7-24-24V24C0 10.7 10.7 0 24 0h200v136c0 13.2 10.8 24 24 24zm-8 171.8c-20-12.2-33.3-29-42.7-53.8 4.5-18.5 11.6-46.6 6.2-64.2-4.7-29.4-42.4-26.5-47.8-6.8-5 18.3-.4 44.1 8.1 77-11.6 27.6-28.7 64.6-40.8 85.8-.1 0-.1.1-.2.1-27.1 13.9-73.6 44.5-54.5 68 5.6 6.9 16 10 21.5 10 17.9 0 35.7-18 61.1-61.8 25.8-8.5 54.1-19.1 79-23.2 21.7 11.8 47.1 19.5 64 19.5 29.2 0 31.2-32 19.7-43.4-13.9-13.6-54.3-9.7-73.6-7.2zM377 105L279 7c-4.5-4.5-10.6-7-17-7h-6v128h128v-6.1c0-6.3-2.5-12.4-7-16.9zm-74.1 255.3c4.1-2.7-2.5-11.9-42.8-9 37.1 15.8 42.8 9 42.8 9z" fill="#f04c4c"/></svg>
<svg style="left:1096.6px;top:720.5px" width="19" height="25" viewBox="0 0 384 512"><path d="M224 136V0H24C10.7 0 0 10.7 0 24v464c0 13.3 10.7 24 24 24h336c13.3 0 24-10.7 24-24V160H248c-13.2 0-24-10.8-24-24zm60.1 106.5L224 336l60.1 93.5c5.1 8-.6 18.5-10.1 18.5h-34.9c-4.4 0-8.5-2.4-10.6-6.3C208.9 405.5 192 373 192 373c-6.4 14.8-10 20-36.6 68.8-2.1 3.9-6.1 6.3-10.5 6.3H110c-9.5 0-15.2-10.5-10.1-18.5l60.3-93.5-60.3-93.5c-5.2-8 .6-18.5 10.1-18.5h34.8c4.4 0 8.5 2.4 10.6 6.3 26.1 48.8 20 33.6 36.6 68.5 0 0 6.1-11.7 36.6-68.5 2.1-3.9 6.2-6.3 10.6-6.3H274c9.5-.1 15.2 10.4 10.1 18.4zM384 121.9v6.1H256V0h6.1c6.4 0 12.5 2.5 17 7l97.9 98c4.5 4.5 7 10.6 7 16.9z" fill="#12a06e"/></svg>
<div class="tx" style="left:1014px;width:120px;text-align:center;top:754.5px;font-size:12.3px;line-height:14px;color:#1f2937">Metadatos</div>
<svg style="left:1162px;top:720.5px" width="19" height="25" viewBox="0 0 384 512"><path d="M224 136V0H24C10.7 0 0 10.7 0 24v464c0 13.3 10.7 24 24 24h336c13.3 0 24-10.7 24-24V160H248c-13.2 0-24-10.8-24-24zm-96 144c0 4.42-3.58 8-8 8h-8c-8.84 0-16 7.16-16 16v32c0 8.84 7.16 16 16 16h8c4.42 0 8 3.58 8 8v16c0 4.42-3.58 8-8 8h-8c-26.51 0-48-21.49-48-48v-32c0-26.51 21.49-48 48-48h8c4.42 0 8 3.58 8 8v16zm44.27 104H160c-4.42 0-8-3.58-8-8v-16c0-4.42 3.58-8 8-8h12.27c5.95 0 10.41-3.5 10.41-6.62 0-1.3-.75-2.66-2.12-3.84l-21.89-18.77c-8.47-7.22-13.33-17.48-13.33-28.14 0-21.3 19.02-38.62 42.41-38.62H200c4.42 0 8 3.58 8 8v16c0 4.42-3.58 8-8 8h-12.27c-5.95 0-10.41 3.5-10.41 6.62 0 1.3.75 2.66 2.12 3.84l21.89 18.77c8.47 7.22 13.33 17.48 13.33 28.14.01 21.29-19 38.62-42.39 38.62zM256 264v20.8c0 20.27 5.7 40.17 16 56.88 10.3-16.7 16-36.61 16-56.88V264c0-4.42 3.58-8 8-8h16c4.42 0 8 3.58 8 8v20.8c0 35.48-12.88 68.89-36.28 94.09-3.02 3.25-7.27 5.11-11.72 5.11s-8.7-1.86-11.72-5.11C236.88 353.69 224 320.28 224 284.8V264c0-4.42 3.58-8 8-8h16c4.42 0 8 3.58 8 8zm121-159L279.1 7c-4.5-4.5-10.6-7-17-7H256v128h128v-6.1c0-6.3-2.5-12.4-7-16.9z" fill="#226f94"/></svg>
<svg style="left:1193.3px;top:720.5px" width="19" height="25" viewBox="0 0 384 512"><path d="M181.9 256.1c-5-16-4.9-46.9-2-46.9 8.4 0 7.6 36.9 2 46.9zm-1.7 47.2c-7.7 20.2-17.3 43.3-28.4 62.7 18.3-7 39-17.2 62.9-21.9-12.7-9.6-24.9-23.4-34.5-40.8zM86.1 428.1c0 .8 13.2-5.4 34.9-40.2-6.7 6.3-29.1 24.5-34.9 40.2zM248 160h136v328c0 13.3-10.7 24-24 24H24c-13.3 0-24-10.7-24-24V24C0 10.7 10.7 0 24 0h200v136c0 13.2 10.8 24 24 24zm-8 171.8c-20-12.2-33.3-29-42.7-53.8 4.5-18.5 11.6-46.6 6.2-64.2-4.7-29.4-42.4-26.5-47.8-6.8-5 18.3-.4 44.1 8.1 77-11.6 27.6-28.7 64.6-40.8 85.8-.1 0-.1.1-.2.1-27.1 13.9-73.6 44.5-54.5 68 5.6 6.9 16 10 21.5 10 17.9 0 35.7-18 61.1-61.8 25.8-8.5 54.1-19.1 79-23.2 21.7 11.8 47.1 19.5 64 19.5 29.2 0 31.2-32 19.7-43.4-13.9-13.6-54.3-9.7-73.6-7.2zM377 105L279 7c-4.5-4.5-10.6-7-17-7h-6v128h128v-6.1c0-6.3-2.5-12.4-7-16.9zm-74.1 255.3c4.1-2.7-2.5-11.9-42.8-9 37.1 15.8 42.8 9 42.8 9z" fill="#f04c4c"/></svg>
<svg style="left:1225.6px;top:720.5px" width="19" height="25" viewBox="0 0 384 512"><path d="M224 136V0H24C10.7 0 0 10.7 0 24v464c0 13.3 10.7 24 24 24h336c13.3 0 24-10.7 24-24V160H248c-13.2 0-24-10.8-24-24zm60.1 106.5L224 336l60.1 93.5c5.1 8-.6 18.5-10.1 18.5h-34.9c-4.4 0-8.5-2.4-10.6-6.3C208.9 405.5 192 373 192 373c-6.4 14.8-10 20-36.6 68.8-2.1 3.9-6.1 6.3-10.5 6.3H110c-9.5 0-15.2-10.5-10.1-18.5l60.3-93.5-60.3-93.5c-5.2-8 .6-18.5 10.1-18.5h34.8c4.4 0 8.5 2.4 10.6 6.3 26.1 48.8 20 33.6 36.6 68.5 0 0 6.1-11.7 36.6-68.5 2.1-3.9 6.2-6.3 10.6-6.3H274c9.5-.1 15.2 10.4 10.1 18.4zM384 121.9v6.1H256V0h6.1c6.4 0 12.5 2.5 17 7l97.9 98c4.5 4.5 7 10.6 7 16.9z" fill="#12a06e"/></svg>
<div class="tx" style="left:1143px;width:120px;text-align:center;top:754.5px;font-size:12.3px;line-height:14px;color:#1f2937">Diccionario</div>
<div class="abs" style="left:1594px;top:277px;width:3px;height:117px;background:#868686;border-radius:2px"></div></div>
<div id="taskbar"><div class="abs" style="left:0;top:0;width:1600px;height:60px;background:linear-gradient(90deg,#c9e7ef 0px,#d6ebe9 40px,#e4e6d8 95px,#e3e2d9 130px,#dddcd9 190px,#dbdad9 260px,#dbdbda 1440px,#dedccf 1530px,#e6e2bf 1600px)"></div>
<svg style="left:24px;top:22px" width="28" height="26" viewBox="0 0 28 26"><path d="M2 11 C4 6 9 3 14 3 C19 3 24 6 26 11 C24 10 22 10 20 11 C18 10 16 10 14 11 C12 10 10 10 8 11 C6 10 4 10 2 11Z" fill="#5aa6ea"/><path d="M8 11 C9 7 11.5 4 14 3 C16.5 4 19 7 20 11 C18 10 16 10 14 11 C12 10 10 10 8 11Z" fill="#91c9f5"/><path d="M14 11 V21.5 C14 24 10.5 24 10.5 21.5" stroke="#6b6b6b" stroke-width="1.8" fill="none" stroke-linecap="round"/></svg>
<svg style="left:39px;top:9px" width="19" height="19" viewBox="0 0 19 19"><circle cx="9.5" cy="9.5" r="9.2" fill="#c42b1c"/><text x="9.5" y="14" text-anchor="middle" font-family="Liberation Sans" font-size="12.5" fill="#fff">2</text></svg>
<div class="abs" style="left:682.5px;top:7px;width:31px;height:47px;background:#ececec;border-radius:5px;box-shadow:0 0 1px rgba(0,0,0,.18)"></div>
<div class="abs" style="left:692px;top:50px;width:13px;height:3.5px;background:#0b6fd4;border-radius:2px"></div>
<div class="abs" style="left:615px;top:49.5px;width:6px;height:5px;border-radius:3px;background:#7c7c7c"></div>
<div class="abs" style="left:735px;top:49.5px;width:6px;height:5px;border-radius:3px;background:#7c7c7c"></div>
<div class="abs" style="left:975px;top:49.5px;width:6px;height:5px;border-radius:3px;background:#7c7c7c"></div>
<div class="abs" style="left:1095px;top:49.5px;width:6px;height:5px;border-radius:3px;background:#7c7c7c"></div>
<svg style="left:447px;top:20.5px" width="20" height="20" viewBox="0 0 20 20"><defs><linearGradient id="wg" x1="0" y1="0" x2="1" y2="1"><stop offset="0" stop-color="#42bdf7"/><stop offset="1" stop-color="#0b6ad0"/></linearGradient></defs><rect x="0" y="0" width="9.4" height="9.4" fill="url(#wg)"/><rect x="10.3" y="0" width="9.4" height="9.4" fill="url(#wg)"/><rect x="0" y="10.3" width="9.4" height="9.4" fill="url(#wg)"/><rect x="10.3" y="10.3" width="9.4" height="9.4" fill="url(#wg)"/></svg>
<svg style="left:488px;top:20px" width="21" height="21" viewBox="0 0 21 21"><defs><linearGradient id="sg" x1="0" y1="0" x2="0" y2="1"><stop offset="0" stop-color="#43c59e"/><stop offset=".45" stop-color="#1b86d6"/><stop offset="1" stop-color="#0a6ad0"/></linearGradient></defs><circle cx="8.3" cy="8.5" r="7" stroke="url(#sg)" stroke-width="2.3" fill="none"/><path d="M13.3 13.6 L19 19.3" stroke="#0a6ad0" stroke-width="2.6" stroke-linecap="round"/></svg>
<svg style="left:528px;top:21px" width="21" height="18" viewBox="0 0 21 18"><rect x="5" y="0" width="15" height="12" fill="#f4f4f4"/><rect x="0" y="4.6" width="15" height="13.4" fill="#2a2a2a"/><rect x="4.6" y="4.6" width="10.4" height="9" fill="#c4c4c4"/></svg>
<svg style="left:568px;top:21px" width="20" height="19" viewBox="0 0 20 19"><path d="M6 4 V2.3 C6 1.2 6.8 .6 7.8 .6 H12.2 C13.2 .6 14 1.2 14 2.3 V4" stroke="#35b1ee" stroke-width="1.6" fill="none"/><path d="M.5 4 H19.5 V15.5 C19.5 17.5 18 18.8 16 18.8 H4 C2 18.8 .5 17.5 .5 15.5Z" fill="#1d4f98"/><rect x="6.3" y="6.8" width="3.2" height="3.2" fill="#f25022"/><rect x="10.5" y="6.8" width="3.2" height="3.2" fill="#7fba00"/><rect x="6.3" y="11" width="3.2" height="3.2" fill="#00a4ef"/><rect x="10.5" y="11" width="3.2" height="3.2" fill="#ffb900"/></svg>
<svg style="left:608px;top:21px" width="19" height="19" viewBox="0 0 19 19"><path d="M6 0 H17 C18 0 18.6 .6 18.6 1.6 V17 C18.6 18 18 18.6 17 18.6 H6Z" fill="#21a366"/><rect x="6" y="0" width="12.6" height="6" fill="#5fd073"/><rect x="12" y="0" width="6.6" height="12" fill="#33c481" opacity=".8"/><rect x="6" y="12.3" width="12.6" height="6.3" fill="#107c41"/><circle cx="4.8" cy="12" r="4.8" fill="#107c41"/><text x="4.8" y="15.3" text-anchor="middle" font-family="Liberation Sans" font-weight="bold" font-size="9" fill="#fff">X</text></svg>
<svg style="left:644px;top:16px" width="28" height="28" viewBox="0 0 28 28"><defs><linearGradient id="cpa" x1="0" y1="0" x2="0" y2="1"><stop offset="0" stop-color="#17a6f6"/><stop offset=".5" stop-color="#4cc35c"/><stop offset="1" stop-color="#f5d300"/></linearGradient><linearGradient id="cpb" x1=".2" y1="0" x2=".6" y2="1"><stop offset="0" stop-color="#b14cf2"/><stop offset=".45" stop-color="#f2508c"/><stop offset="1" stop-color="#ff8d3a"/></linearGradient></defs><path d="M8.3 5 H18.6 C19.5 5 20 5.6 20.2 6.4 L21 9.6 H15 C13.9 9.6 13.4 10.2 13.1 11.2 L11.3 17.2 H6.2 C5 17.2 4.4 16.3 4.7 15.2 L7 6.4 C7.2 5.6 7.6 5 8.3 5Z" fill="url(#cpa)"/><path d="M16.2 5 H18.6 C19.5 5 20 5.6 20.2 6.4 L21 9.6 H17.5Z" fill="#1d4fd8" opacity=".85"/><path d="M16 9.6 H22.6 C23.7 9.6 24.3 10.4 24 11.5 L21.6 20.6 C21.3 21.6 20.7 22.2 19.8 22.2 H11.2 C10.3 22.2 9.8 21.6 9.6 20.8 L8.8 17.4 H13.6 C14.5 17.4 15 16.8 15.2 16 Z" fill="url(#cpb)"/><path d="M8.8 17.4 H13.6 L12.6 22.2 H11.2 C10.3 22.2 9.8 21.6 9.6 20.8Z" fill="#f2452a" opacity=".9"/></svg>
<svg style="left:688.5px;top:19.5px" width="20" height="20" viewBox="0 0 20 20"><defs><radialGradient id="ffbk" cx="0.72" cy="0.12" r="1.05"><stop offset="0" stop-color="#fff44f"/><stop offset=".3" stop-color="#ffc72e"/><stop offset=".55" stop-color="#ff8a2a"/><stop offset=".78" stop-color="#ff3f45"/><stop offset="1" stop-color="#e0157a"/></radialGradient><linearGradient id="ffpk" x1="0" y1="1" x2="1" y2="0"><stop offset="0" stop-color="#5a3dd8"/><stop offset="1" stop-color="#b245f2"/></linearGradient></defs>
<path d="M3.2 5.5 C1.6 7.2 .8 9.2 .8 11 C.8 16.2 5 20 10.2 20 C15.4 20 19.5 15.8 19.5 10.6 C19.5 6.5 17.2 3.2 13.2 .6 C13.8 2.5 13.6 4 12.8 5.2 C11.5 4.6 10 4.5 8.6 4.8 C7.5 3.8 6.2 3.4 5 3.6 C4.6 4.2 4.5 5 4.6 5.6Z" fill="url(#ffbk)"/>
<circle cx="10.6" cy="10.6" r="4.4" fill="url(#ffpk)"/>
<path d="M2.6 6 L3.8 3 L5.6 4.6 L7.6 3.2 L9.2 5.2 C10.9 5.3 12.5 6.3 13 7.6 C11.8 7.2 10.6 7.5 10 8.6 C9.2 10 7.6 10.2 6.2 11.2 C5.2 9.4 3.6 8.2 2.6 6Z" fill="#ff8a1c"/></svg>
<svg style="left:728px;top:21px" width="20" height="19" viewBox="0 0 20 19"><path d="M0 2 C0 1 .7 .3 1.6 .3 H7 L9 2.4 H18.4 C19.4 2.4 20 3 20 4 V17.5 C20 18.3 19.4 18.8 18.6 18.8 H1.4 C.6 18.8 0 18.3 0 17.5Z" fill="#e8b620"/><path d="M0 4.5 H20 V17.5 C20 18.3 19.4 18.8 18.6 18.8 H1.4 C.6 18.8 0 18.3 0 17.5Z" fill="#ffd54a"/><path d="M4 12.4 C4 11.6 4.6 11 5.4 11 H14.6 C15.4 11 16 11.6 16 12.4 V18.8 H4Z" fill="#1a86d6"/><path d="M6.5 13.6 H13.5" stroke="#0d5fb0" stroke-width="1"/></svg>
<svg style="left:768px;top:20px" width="20" height="20" viewBox="0 0 20 20"><circle cx="10" cy="10" r="9.6" fill="#0a46d1"/><text x="10.2" y="14.2" text-anchor="middle" font-family="Liberation Sans" font-weight="bold" font-style="italic" font-size="11.5" fill="#fff">hp</text></svg>
<svg style="left:808px;top:20px" width="20" height="20" viewBox="0 0 20 20"><circle cx="10" cy="10" r="9.6" fill="#1a9ad8"/><text x="10" y="15.5" text-anchor="middle" font-family="Liberation Sans" font-weight="bold" font-size="15" fill="#fff">?</text></svg>
<svg style="left:825px;top:15px" width="6" height="6" viewBox="0 0 6 6"><circle cx="3" cy="3" r="2.6" fill="#f5a623"/></svg>
<svg style="left:848px;top:21px" width="19" height="19" viewBox="0 0 19 19"><defs><linearGradient id="ppg" x1="0" y1="0" x2="1" y2="1"><stop offset="0" stop-color="#ff8a50"/><stop offset=".5" stop-color="#ea4a4a"/><stop offset="1" stop-color="#d33a5a"/></linearGradient></defs><circle cx="10.2" cy="9.3" r="8.6" fill="url(#ppg)"/><path d="M10.2 .7 A8.6 8.6 0 0 1 18.8 9.3 H10.2Z" fill="#ff9a5a"/><rect x="0" y="9" width="8.5" height="8.5" rx="1.6" fill="#c4262e"/><text x="4.25" y="16" text-anchor="middle" font-family="Liberation Sans" font-weight="bold" font-size="8" fill="#fff">P</text></svg>
<svg style="left:888px;top:20px" width="20" height="20" viewBox="0 0 20 20"><rect x="0" y="0" width="20" height="20" fill="#fbfbf7"/><path d="M3.2 1.5 L5 19 H1.5Z" fill="#3f8a3a"/><circle cx="3" cy="10" r="2" fill="#e8c531"/><rect x="7.5" y="5" width="2.2" height="4" fill="#4a3a2a"/><rect x="10.5" y="5.5" width="1.5" height="3.5" fill="#5a4a3a"/><rect x="13" y="6" width="1.4" height="3" fill="#4a3a2a"/><rect x="16" y="6" width="1.4" height="3" fill="#5a4a3a"/><rect x="7" y="11" width="12" height="2.4" fill="#6a5a4a" opacity=".8"/></svg>
<svg style="left:928px;top:21px" width="19" height="19" viewBox="0 0 19 19"><defs><linearGradient id="wdg" x1="0" y1="0" x2="0" y2="1"><stop offset="0" stop-color="#41c7f4"/><stop offset=".5" stop-color="#2f8fe8"/><stop offset="1" stop-color="#1a55c9"/></linearGradient></defs><path d="M5 0 H17.2 C18.2 0 18.7 .6 18.7 1.6 V17.2 C18.7 18.2 18.2 18.7 17.2 18.7 H5Z" fill="url(#wdg)"/><rect x="0" y="9" width="9" height="8.8" rx="1.6" fill="#1a4fc0"/><text x="4.5" y="16.2" text-anchor="middle" font-family="Liberation Sans" font-weight="bold" font-size="8" fill="#fff">W</text></svg>
<svg style="left:968px;top:19.700000000000045px" width="21" height="21" viewBox="0 0 21 21"><defs><linearGradient id="edt" x1="0" y1="0" x2="1" y2="0"><stop offset="0" stop-color="#1f9cf0"/><stop offset=".5" stop-color="#2cc2cf"/><stop offset="1" stop-color="#5ee05a"/></linearGradient><linearGradient id="edb" x1="0" y1="0" x2="1" y2="1"><stop offset="0" stop-color="#1c86e6"/><stop offset="1" stop-color="#0b4fae"/></linearGradient></defs><path d="M.3 10.5 C.3 4.5 4.8 0 10.2 0 C15.8 0 20.3 4 20.3 9 C20.3 12 18 14 15 14 C13 14 11.5 13.3 11.5 12.2 C11.5 11.2 12.5 10.8 12.5 9.5 C12.5 7.5 10.5 6.3 8 6.3 C4.5 6.3 1.5 8 .3 10.5Z" fill="url(#edt)"/><path d="M.3 10.5 C1.5 8 4.5 6.3 8 6.3 C6.5 7.5 5.8 9.5 6.2 12 C6.8 15.5 10 17.6 13.5 17.6 C15.8 17.6 17.5 17 19 16 C17.5 18.8 14 20.3 10.2 20.3 C4.8 20.3 .3 16 .3 10.5Z" fill="url(#edb)"/></svg>
<svg style="left:1008px;top:20px" width="20" height="20" viewBox="0 0 20 20"><circle cx="10" cy="10" r="9.8" fill="#db3a2f"/><path d="M10 10 L1.5 5 A9.8 9.8 0 0 0 10 19.8Z" fill="#22a05a"/><path d="M10 10 L18.5 5 A9.8 9.8 0 0 1 10 19.8Z" fill="#fcc934"/><path d="M10 10 L1.5 5 A9.8 9.8 0 0 1 18.5 5Z" fill="#db3a2f"/><circle cx="10" cy="10" r="4.6" fill="#fff"/><circle cx="10" cy="10" r="3.6" fill="#3b7ce8"/></svg>
<svg style="left:1048px;top:20px" width="20" height="20" viewBox="0 0 20 20"><rect width="20" height="20" fill="#23409a"/><text x="9.8" y="14.6" text-anchor="middle" font-family="Liberation Sans" font-weight="bold" font-size="10" letter-spacing="-.6" fill="#fff">SRi</text><circle cx="16.2" cy="6.6" r="1" fill="#e33"/></svg>
<svg style="left:1088px;top:22px" width="20" height="15" viewBox="0 0 20 15"><rect x="7" y="0" width="13" height="3" fill="#6a6a6a"/><rect x="0" y="2" width="20" height="13" rx="1" fill="#383838"/><path d="M3.5 5.6 L7.5 8.3 L3.5 11" stroke="#e0e0e0" stroke-width="1.7" fill="none"/><path d="M9.5 11.6 H14" stroke="#e0e0e0" stroke-width="1.6"/></svg>
<svg style="left:1204px;top:26px" width="14" height="8" viewBox="0 0 14 8"><path d="M1 7 L7 1 L13 7" stroke="#1a1a1a" stroke-width="1.3" fill="none"/></svg>
<svg style="left:1240px;top:19.5px" width="22" height="22" viewBox="0 0 22 22"><path d="M2.5 10 A8 8 0 0 1 17 5.5" stroke="#2a2a2a" stroke-width="1.1" fill="none"/><path d="M17.7 1.5 V5.8 H13.5" stroke="#2a2a2a" stroke-width="1.1" fill="none"/><path d="M11 19 A8 8 0 0 1 3.5 15" stroke="#2a2a2a" stroke-width="1.1" fill="none"/><path d="M2.5 20 V15.3 H7" stroke="#2a2a2a" stroke-width="1.1" fill="none"/><circle cx="15.9" cy="15.5" r="5" fill="#0e6fd8"/></svg>
<svg style="left:1280px;top:20.5px" width="21" height="19" viewBox="0 0 21 19"><defs><linearGradient id="clg" x1="0" y1="0" x2="1" y2="0"><stop offset="0" stop-color="#888"/><stop offset=".5" stop-color="#ddd"/><stop offset="1" stop-color="#f4f4f4"/></linearGradient></defs><path d="M5 16 C2 16 .6 14 .6 12 C.6 9.6 2.5 8 4.6 8 C5.2 5 7.6 3 10.6 3 C13.6 3 16 5 16.6 8 C18.6 8.2 20.2 9.8 20.2 12 C20.2 14.2 18.5 16 16.3 16Z" fill="url(#clg)" stroke="#2a2a2a" stroke-width="1.2"/><path d="M1.5 1 L18 18.5" stroke="#2a2a2a" stroke-width="1.2"/></svg>
<div class="tx" style="left:1312px;width:52px;text-align:center;top:13px;font-size:14px;line-height:19px;color:#1a1a1a">ESP<br>LAA</div>
<svg style="left:1375px;top:21px" width="21" height="17" viewBox="0 0 21 17"><path d="M1 6.5 C6 1.5 15 1.5 20 6.5" stroke="#1a1a1a" stroke-width="1.3" fill="none"/><path d="M4 9.5 C7.5 6 13.5 6 17 9.5" stroke="#1a1a1a" stroke-width="1.3" fill="none"/><path d="M7 12.5 C9 10.5 12 10.5 14 12.5" stroke="#1a1a1a" stroke-width="1.3" fill="none"/><circle cx="10.5" cy="15.2" r="1.4" fill="#1a1a1a"/></svg>
<svg style="left:1405px;top:21px" width="22" height="17" viewBox="0 0 22 17"><path d="M1 6 H4.5 L9.5 1.5 V15.5 L4.5 11 H1Z" stroke="#1a1a1a" stroke-width="1.2" fill="none" stroke-linejoin="round"/><path d="M12.5 5.5 C13.7 7.2 13.7 9.8 12.5 11.5" stroke="#1a1a1a" stroke-width="1.2" fill="none"/><path d="M15.3 3.2 C17.6 6.2 17.6 10.8 15.3 13.8" stroke="#1a1a1a" stroke-width="1.2" fill="none"/><path d="M18.2 1 C21.3 5 21.3 12 18.2 16" stroke="#1a1a1a" stroke-width="1.2" fill="none"/></svg>
<svg style="left:1436px;top:20px" width="21" height="17" viewBox="0 0 21 17"><rect x="1" y="4.5" width="16" height="11" rx="2" stroke="#1a1a1a" stroke-width="1.3" fill="none"/><rect x="3" y="6.5" width="12" height="7" fill="#1a1a1a"/><rect x="17.5" y="8" width="2.5" height="4" rx=".8" fill="#1a1a1a"/><path d="M5 0 L2 5.5 H5.5 L3.5 10" stroke="#1a1a1a" stroke-width="1.4" fill="none"/></svg>
<div class="tx" style="left:1460px;width:86px;text-align:right;top:11px;font-size:14.3px;line-height:19.5px;color:#1a1a1a">16:35<br><span style="letter-spacing:.75px;margin-right:-.75px">14/1/2026</span></div>
<svg style="left:1555px;top:20px" width="20" height="21" viewBox="0 0 20 21"><path d="M1.2 16.2 C3 14.6 3.2 12.6 3.2 9.2 C3.2 5 6 2.4 9.2 2.4 C12.4 2.4 15.2 5 15.2 9.2 C15.2 12.6 15.4 14.6 17.2 16.2Z" fill="#1a1a1a"/><path d="M6.6 17.6 C7.2 19.2 8.2 19.8 9.2 19.8 C10.2 19.8 11.2 19.2 11.8 17.6Z" fill="#1a1a1a"/><text x="9.2" y="13.6" text-anchor="middle" font-family="Liberation Sans" font-weight="bold" font-size="9.5" fill="#e8e8e8">z</text><text x="17" y="6.6" text-anchor="middle" font-family="Liberation Sans" font-weight="bold" font-size="8.5" fill="#1a1a1a">z</text></svg></div>
<div class="abs" style="left:0;top:54px;width:1600px;height:1px;background:#e6e6e9"></div>
<div class="abs" style="left:0;top:105px;width:1600px;height:1px;background:#d1d1d3"></div>
<div class="abs" style="left:0;top:840px;width:1600px;height:1px;background:#afafaf"></div>
<div class="abs" style="left:0;top:841px;width:1600px;height:1px;background:#c6c6c6"></div>
</body></html>
